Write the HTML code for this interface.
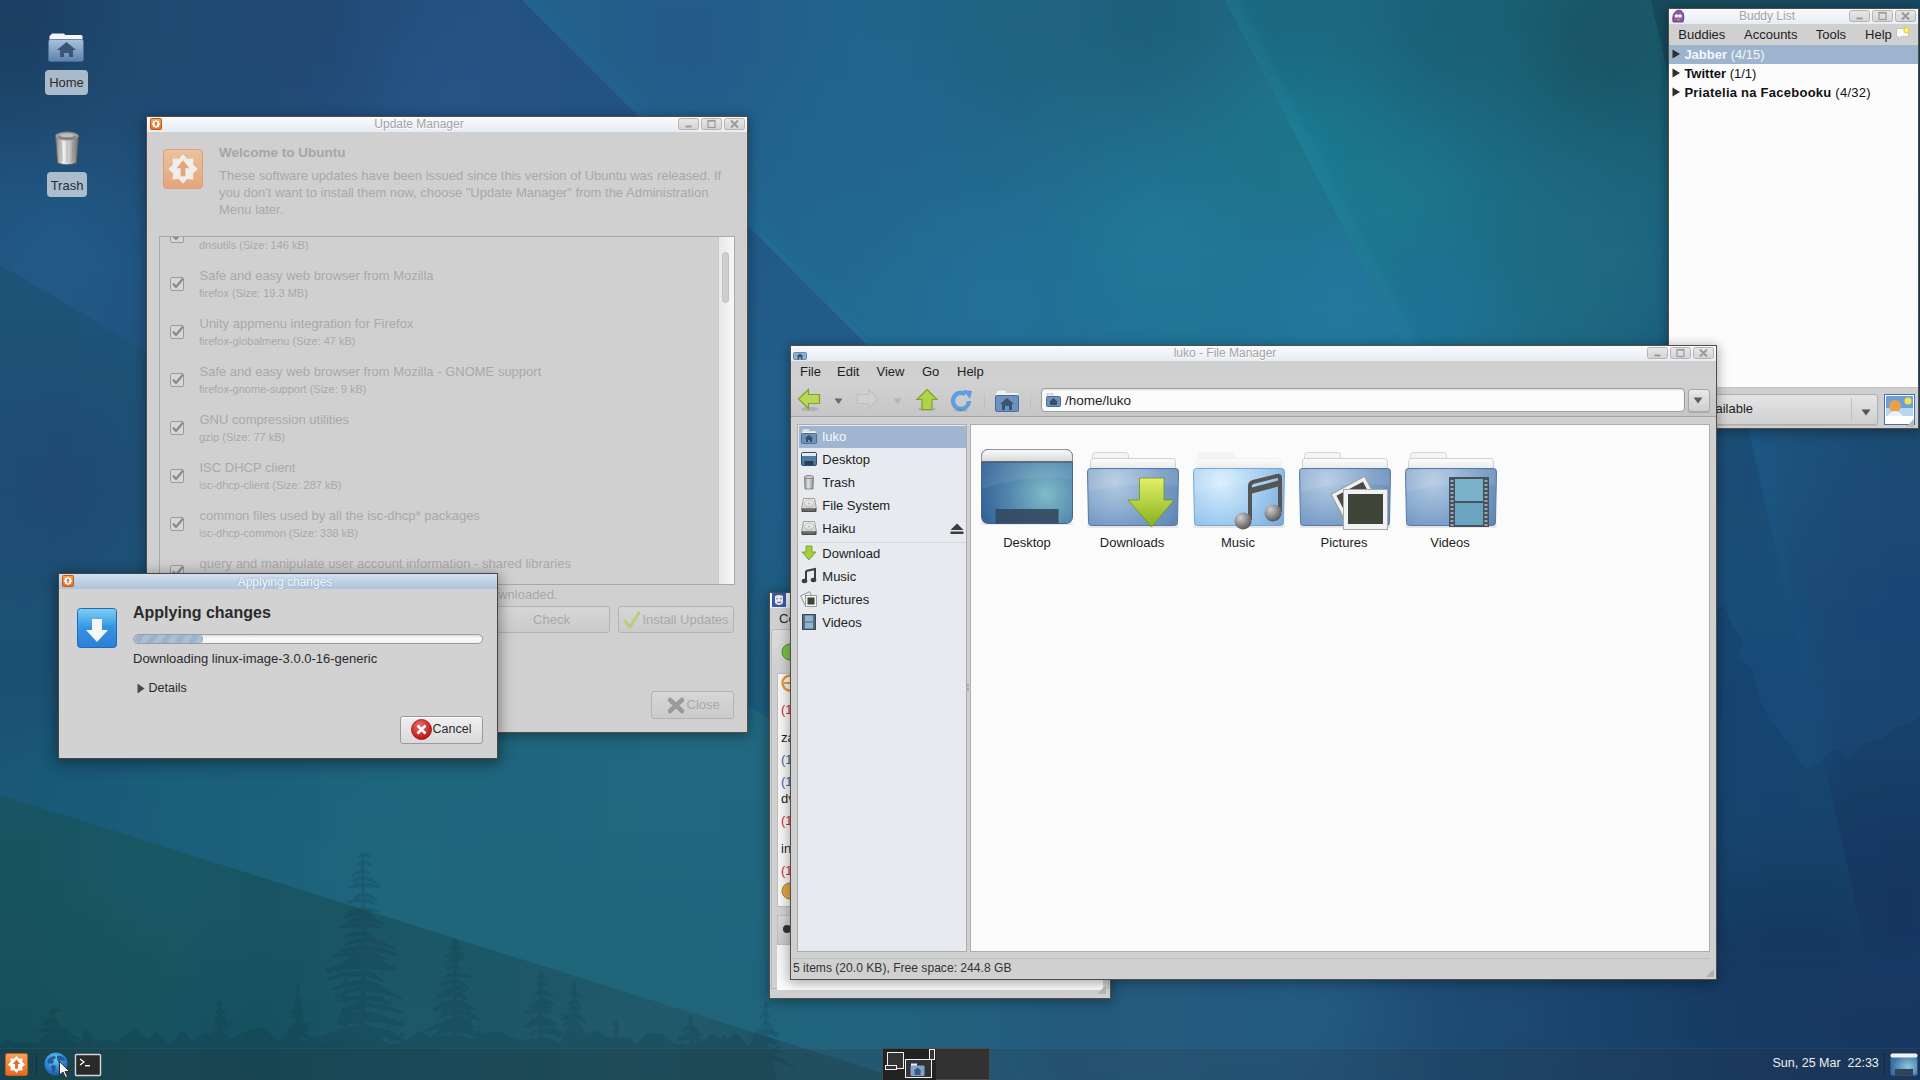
<!DOCTYPE html>
<html><head><meta charset="utf-8"><title>Xubuntu desktop</title>
<style>*{margin:0;padding:0;box-sizing:border-box}
html,body{width:1920px;height:1080px;overflow:hidden;font-family:"Liberation Sans",sans-serif;background:#1f5587}
body{position:relative}
div{position:absolute}
.t{position:absolute;line-height:1;white-space:pre}
.ic{position:absolute;overflow:visible}
</style></head><body>
<svg id="wall" width="1920" height="1080" viewBox="0 0 1920 1080" style="position:absolute;left:0;top:0"><defs><filter id="wb" x="-10%" y="-10%" width="120%" height="120%" color-interpolation-filters="sRGB"><feGaussianBlur stdDeviation="22"/></filter><clipPath id="cb1"><polygon points="-300.0,700.5 2300.0,1519.5 2300.0,1500.0 -300.0,1500.0"/></clipPath><clipPath id="cb2"><polygon points="-300.0,88.0 2300.0,1622.0 2300.0,1500.0 -300.0,1500.0"/></clipPath><clipPath id="cb3"><polygon points="-300.0,-300.0 222.0,-300.0 2300.0,1778.0 2300.0,1800.0 -300.0,1800.0"/></clipPath><clipPath id="cb4"><polygon points="-300.0,-300.0 1068.8,-300.0 2006.2,1500.0 -300.0,1500.0"/></clipPath><clipPath id="cb5"><polygon points="-300.0,-300.0 1583.0,-300.0 1991.1,1500.0 -300.0,1500.0"/></clipPath><clipPath id="cb6"><polygon points="-300.0,-300.0 2300.0,-300.0 2300.0,1500.0 -300.0,1500.0"/></clipPath></defs><g clip-path="url(#cb6)"><g filter="url(#wb)"><rect x="1520" y="-80" width="40" height="40" fill="#174a61"/><rect x="1560" y="-80" width="40" height="40" fill="#174a5f"/><rect x="1600" y="-80" width="40" height="40" fill="#174a5e"/><rect x="1640" y="-80" width="40" height="40" fill="#174a5d"/><rect x="1680" y="-80" width="40" height="40" fill="#174a5d"/><rect x="1720" y="-80" width="40" height="40" fill="#174a5d"/><rect x="1760" y="-80" width="40" height="40" fill="#174a5e"/><rect x="1800" y="-80" width="40" height="40" fill="#174a60"/><rect x="1840" y="-80" width="40" height="40" fill="#174a61"/><rect x="1880" y="-80" width="40" height="40" fill="#184963"/><rect x="1920" y="-80" width="40" height="40" fill="#184964"/><rect x="1960" y="-80" width="40" height="40" fill="#184965"/><rect x="2000" y="-80" width="40" height="40" fill="#184966"/><rect x="1520" y="-40" width="40" height="40" fill="#174a60"/><rect x="1560" y="-40" width="40" height="40" fill="#174a5f"/><rect x="1600" y="-40" width="40" height="40" fill="#174a5d"/><rect x="1640" y="-40" width="40" height="40" fill="#164a5c"/><rect x="1680" y="-40" width="40" height="40" fill="#164a5b"/><rect x="1720" y="-40" width="40" height="40" fill="#164a5c"/><rect x="1760" y="-40" width="40" height="40" fill="#174a5d"/><rect x="1800" y="-40" width="40" height="40" fill="#174a5f"/><rect x="1840" y="-40" width="40" height="40" fill="#174a61"/><rect x="1880" y="-40" width="40" height="40" fill="#184963"/><rect x="1920" y="-40" width="40" height="40" fill="#184964"/><rect x="1960" y="-40" width="40" height="40" fill="#184965"/><rect x="2000" y="-40" width="40" height="40" fill="#184966"/><rect x="1560" y="0" width="40" height="40" fill="#174a5e"/><rect x="1600" y="0" width="40" height="40" fill="#164a5c"/><rect x="1640" y="0" width="40" height="40" fill="#164a5b"/><rect x="1680" y="0" width="40" height="40" fill="#164a5a"/><rect x="1720" y="0" width="40" height="40" fill="#164a5b"/><rect x="1760" y="0" width="40" height="40" fill="#174a5d"/><rect x="1800" y="0" width="40" height="40" fill="#174a5f"/><rect x="1840" y="0" width="40" height="40" fill="#184961"/><rect x="1880" y="0" width="40" height="40" fill="#184963"/><rect x="1920" y="0" width="40" height="40" fill="#184964"/><rect x="1960" y="0" width="40" height="40" fill="#184965"/><rect x="2000" y="0" width="40" height="40" fill="#194966"/><rect x="1560" y="40" width="40" height="40" fill="#174a5f"/><rect x="1600" y="40" width="40" height="40" fill="#174a5d"/><rect x="1640" y="40" width="40" height="40" fill="#164a5b"/><rect x="1680" y="40" width="40" height="40" fill="#164a5a"/><rect x="1720" y="40" width="40" height="40" fill="#164a5b"/><rect x="1760" y="40" width="40" height="40" fill="#174a5d"/><rect x="1800" y="40" width="40" height="40" fill="#174a60"/><rect x="1840" y="40" width="40" height="40" fill="#184962"/><rect x="1880" y="40" width="40" height="40" fill="#184964"/><rect x="1920" y="40" width="40" height="40" fill="#184965"/><rect x="1960" y="40" width="40" height="40" fill="#184966"/><rect x="2000" y="40" width="40" height="40" fill="#194966"/><rect x="1560" y="80" width="40" height="40" fill="#174a60"/><rect x="1600" y="80" width="40" height="40" fill="#174a5e"/><rect x="1640" y="80" width="40" height="40" fill="#174a5d"/><rect x="1680" y="80" width="40" height="40" fill="#164a5c"/><rect x="1720" y="80" width="40" height="40" fill="#174a5d"/><rect x="1760" y="80" width="40" height="40" fill="#174a5f"/><rect x="1800" y="80" width="40" height="40" fill="#184961"/><rect x="1840" y="80" width="40" height="40" fill="#184963"/><rect x="1880" y="80" width="40" height="40" fill="#184964"/><rect x="1920" y="80" width="40" height="40" fill="#184965"/><rect x="1960" y="80" width="40" height="40" fill="#194866"/><rect x="2000" y="80" width="40" height="40" fill="#194867"/><rect x="1560" y="120" width="40" height="40" fill="#184a63"/><rect x="1600" y="120" width="40" height="40" fill="#174a61"/><rect x="1640" y="120" width="40" height="40" fill="#174a60"/><rect x="1680" y="120" width="40" height="40" fill="#174a60"/><rect x="1720" y="120" width="40" height="40" fill="#174a60"/><rect x="1760" y="120" width="40" height="40" fill="#184a62"/><rect x="1800" y="120" width="40" height="40" fill="#184963"/><rect x="1840" y="120" width="40" height="40" fill="#184964"/><rect x="1880" y="120" width="40" height="40" fill="#184865"/><rect x="1920" y="120" width="40" height="40" fill="#194865"/><rect x="1960" y="120" width="40" height="40" fill="#194866"/><rect x="2000" y="120" width="40" height="40" fill="#194866"/><rect x="1600" y="160" width="40" height="40" fill="#184a64"/><rect x="1640" y="160" width="40" height="40" fill="#184a64"/><rect x="1680" y="160" width="40" height="40" fill="#184a64"/><rect x="1720" y="160" width="40" height="40" fill="#184a64"/><rect x="1760" y="160" width="40" height="40" fill="#184a65"/><rect x="1800" y="160" width="40" height="40" fill="#184965"/><rect x="1840" y="160" width="40" height="40" fill="#194865"/><rect x="1880" y="160" width="40" height="40" fill="#194865"/><rect x="1920" y="160" width="40" height="40" fill="#194765"/><rect x="1960" y="160" width="40" height="40" fill="#194765"/><rect x="2000" y="160" width="40" height="40" fill="#194866"/><rect x="1600" y="200" width="40" height="40" fill="#194b68"/><rect x="1640" y="200" width="40" height="40" fill="#194b68"/><rect x="1680" y="200" width="40" height="40" fill="#194b68"/><rect x="1720" y="200" width="40" height="40" fill="#194a68"/><rect x="1760" y="200" width="40" height="40" fill="#194a68"/><rect x="1800" y="200" width="40" height="40" fill="#194966"/><rect x="1840" y="200" width="40" height="40" fill="#194865"/><rect x="1880" y="200" width="40" height="40" fill="#194763"/><rect x="1920" y="200" width="40" height="40" fill="#184763"/><rect x="1960" y="200" width="40" height="40" fill="#194764"/><rect x="2000" y="200" width="40" height="40" fill="#194766"/><rect x="1600" y="240" width="40" height="40" fill="#194b6b"/><rect x="1640" y="240" width="40" height="40" fill="#194b6c"/><rect x="1680" y="240" width="40" height="40" fill="#194b6c"/><rect x="1720" y="240" width="40" height="40" fill="#194b6b"/><rect x="1760" y="240" width="40" height="40" fill="#194a6a"/><rect x="1800" y="240" width="40" height="40" fill="#194968"/><rect x="1840" y="240" width="40" height="40" fill="#194764"/><rect x="1880" y="240" width="40" height="40" fill="#184661"/><rect x="1920" y="240" width="40" height="40" fill="#184661"/><rect x="1960" y="240" width="40" height="40" fill="#184663"/><rect x="2000" y="240" width="40" height="40" fill="#194765"/><rect x="1600" y="280" width="40" height="40" fill="#1a4c6f"/><rect x="1640" y="280" width="40" height="40" fill="#1a4c6f"/><rect x="1680" y="280" width="40" height="40" fill="#1a4c6f"/><rect x="1720" y="280" width="40" height="40" fill="#1a4c6f"/><rect x="1760" y="280" width="40" height="40" fill="#1a4b6d"/><rect x="1800" y="280" width="40" height="40" fill="#19496a"/><rect x="1840" y="280" width="40" height="40" fill="#194764"/><rect x="1880" y="280" width="40" height="40" fill="#184560"/><rect x="1920" y="280" width="40" height="40" fill="#184560"/><rect x="1960" y="280" width="40" height="40" fill="#184663"/><rect x="2000" y="280" width="40" height="40" fill="#194766"/><rect x="1600" y="320" width="40" height="40" fill="#1a4d71"/><rect x="1640" y="320" width="40" height="40" fill="#1b4d72"/><rect x="1680" y="320" width="40" height="40" fill="#1b4d73"/><rect x="1720" y="320" width="40" height="40" fill="#1b4d73"/><rect x="1760" y="320" width="40" height="40" fill="#1b4d72"/><rect x="1800" y="320" width="40" height="40" fill="#1a4b6e"/><rect x="1840" y="320" width="40" height="40" fill="#194868"/><rect x="1880" y="320" width="40" height="40" fill="#194663"/><rect x="1920" y="320" width="40" height="40" fill="#184663"/><rect x="1960" y="320" width="40" height="40" fill="#194765"/><rect x="2000" y="320" width="40" height="40" fill="#194767"/><rect x="1640" y="360" width="40" height="40" fill="#1b4e75"/><rect x="1680" y="360" width="40" height="40" fill="#1b4f77"/><rect x="1720" y="360" width="40" height="40" fill="#1c5078"/><rect x="1760" y="360" width="40" height="40" fill="#1c4f77"/><rect x="1800" y="360" width="40" height="40" fill="#1b4d74"/><rect x="1840" y="360" width="40" height="40" fill="#1a4b6f"/><rect x="1880" y="360" width="40" height="40" fill="#1a496b"/><rect x="1920" y="360" width="40" height="40" fill="#194869"/><rect x="1960" y="360" width="40" height="40" fill="#194869"/><rect x="2000" y="360" width="40" height="40" fill="#19486a"/><rect x="1640" y="400" width="40" height="40" fill="#1b4f77"/><rect x="1680" y="400" width="40" height="40" fill="#1c517a"/><rect x="1720" y="400" width="40" height="40" fill="#1c527c"/><rect x="1760" y="400" width="40" height="40" fill="#1c527c"/><rect x="1800" y="400" width="40" height="40" fill="#1c4f78"/><rect x="1840" y="400" width="40" height="40" fill="#1b4c74"/><rect x="1880" y="400" width="40" height="40" fill="#1b4b71"/><rect x="1920" y="400" width="40" height="40" fill="#1a4a6f"/><rect x="1960" y="400" width="40" height="40" fill="#1a496e"/><rect x="2000" y="400" width="40" height="40" fill="#1a496d"/><rect x="1640" y="440" width="40" height="40" fill="#1c4f78"/><rect x="1680" y="440" width="40" height="40" fill="#1c517b"/><rect x="1720" y="440" width="40" height="40" fill="#1d537e"/><rect x="1760" y="440" width="40" height="40" fill="#1d547f"/><rect x="1800" y="440" width="40" height="40" fill="#1c4f79"/><rect x="1840" y="440" width="40" height="40" fill="#1c4c75"/><rect x="1880" y="440" width="40" height="40" fill="#1b4b74"/><rect x="1920" y="440" width="40" height="40" fill="#1b4a72"/><rect x="1960" y="440" width="40" height="40" fill="#1a4971"/><rect x="2000" y="440" width="40" height="40" fill="#1a4970"/><rect x="1640" y="480" width="40" height="40" fill="#1c4f78"/><rect x="1680" y="480" width="40" height="40" fill="#1c507a"/><rect x="1720" y="480" width="40" height="40" fill="#1c527c"/><rect x="1760" y="480" width="40" height="40" fill="#1c517c"/><rect x="1800" y="480" width="40" height="40" fill="#1c4d77"/><rect x="1840" y="480" width="40" height="40" fill="#1c4b75"/><rect x="1880" y="480" width="40" height="40" fill="#1b4b75"/><rect x="1920" y="480" width="40" height="40" fill="#1b4a74"/><rect x="1960" y="480" width="40" height="40" fill="#1a4973"/><rect x="2000" y="480" width="40" height="40" fill="#1a4971"/><rect x="1680" y="520" width="40" height="40" fill="#1c4f78"/><rect x="1720" y="520" width="40" height="40" fill="#1c4f79"/><rect x="1760" y="520" width="40" height="40" fill="#1c4e78"/><rect x="1800" y="520" width="40" height="40" fill="#1b4c76"/><rect x="1840" y="520" width="40" height="40" fill="#1b4a75"/><rect x="1880" y="520" width="40" height="40" fill="#1a4975"/><rect x="1920" y="520" width="40" height="40" fill="#1a4974"/><rect x="1960" y="520" width="40" height="40" fill="#1a4873"/><rect x="2000" y="520" width="40" height="40" fill="#1a4872"/><rect x="1680" y="560" width="40" height="40" fill="#1b4d77"/><rect x="1720" y="560" width="40" height="40" fill="#1b4d77"/><rect x="1760" y="560" width="40" height="40" fill="#1b4c76"/><rect x="1800" y="560" width="40" height="40" fill="#1b4a76"/><rect x="1840" y="560" width="40" height="40" fill="#1a4875"/><rect x="1880" y="560" width="40" height="40" fill="#194775"/><rect x="1920" y="560" width="40" height="40" fill="#194775"/><rect x="1960" y="560" width="40" height="40" fill="#1a4874"/><rect x="2000" y="560" width="40" height="40" fill="#1a4873"/><rect x="1680" y="600" width="40" height="40" fill="#1b4b75"/><rect x="1720" y="600" width="40" height="40" fill="#1b4b75"/><rect x="1760" y="600" width="40" height="40" fill="#1a4a75"/><rect x="1800" y="600" width="40" height="40" fill="#1a4975"/><rect x="1840" y="600" width="40" height="40" fill="#194775"/><rect x="1880" y="600" width="40" height="40" fill="#194675"/><rect x="1920" y="600" width="40" height="40" fill="#194774"/><rect x="1960" y="600" width="40" height="40" fill="#1a4774"/><rect x="2000" y="600" width="40" height="40" fill="#1a4773"/><rect x="1680" y="640" width="40" height="40" fill="#1a4a74"/><rect x="1720" y="640" width="40" height="40" fill="#1a4974"/><rect x="1760" y="640" width="40" height="40" fill="#1a4974"/><rect x="1800" y="640" width="40" height="40" fill="#1a4874"/><rect x="1840" y="640" width="40" height="40" fill="#1a4774"/><rect x="1880" y="640" width="40" height="40" fill="#194774"/><rect x="1920" y="640" width="40" height="40" fill="#194774"/><rect x="1960" y="640" width="40" height="40" fill="#194773"/><rect x="2000" y="640" width="40" height="40" fill="#1a4772"/><rect x="1680" y="680" width="40" height="40" fill="#1a4873"/><rect x="1720" y="680" width="40" height="40" fill="#1a4873"/><rect x="1760" y="680" width="40" height="40" fill="#1a4873"/><rect x="1800" y="680" width="40" height="40" fill="#1a4773"/><rect x="1840" y="680" width="40" height="40" fill="#194773"/><rect x="1880" y="680" width="40" height="40" fill="#194673"/><rect x="1920" y="680" width="40" height="40" fill="#194672"/><rect x="1960" y="680" width="40" height="40" fill="#194672"/><rect x="2000" y="680" width="40" height="40" fill="#194671"/><rect x="1720" y="720" width="40" height="40" fill="#1a4771"/><rect x="1760" y="720" width="40" height="40" fill="#194671"/><rect x="1800" y="720" width="40" height="40" fill="#194571"/><rect x="1840" y="720" width="40" height="40" fill="#194570"/><rect x="1880" y="720" width="40" height="40" fill="#194570"/><rect x="1920" y="720" width="40" height="40" fill="#194470"/><rect x="1960" y="720" width="40" height="40" fill="#194470"/><rect x="2000" y="720" width="40" height="40" fill="#194570"/><rect x="1720" y="760" width="40" height="40" fill="#19456f"/><rect x="1760" y="760" width="40" height="40" fill="#19446f"/><rect x="1800" y="760" width="40" height="40" fill="#19436e"/><rect x="1840" y="760" width="40" height="40" fill="#19426d"/><rect x="1880" y="760" width="40" height="40" fill="#19426d"/><rect x="1920" y="760" width="40" height="40" fill="#19426d"/><rect x="1960" y="760" width="40" height="40" fill="#19426d"/><rect x="2000" y="760" width="40" height="40" fill="#19436e"/><rect x="1720" y="800" width="40" height="40" fill="#19436e"/><rect x="1760" y="800" width="40" height="40" fill="#19426c"/><rect x="1800" y="800" width="40" height="40" fill="#18406b"/><rect x="1840" y="800" width="40" height="40" fill="#183f6a"/><rect x="1880" y="800" width="40" height="40" fill="#183e6a"/><rect x="1920" y="800" width="40" height="40" fill="#183e6a"/><rect x="1960" y="800" width="40" height="40" fill="#18406b"/><rect x="2000" y="800" width="40" height="40" fill="#18416c"/><rect x="1720" y="840" width="40" height="40" fill="#18416c"/><rect x="1760" y="840" width="40" height="40" fill="#18406b"/><rect x="1800" y="840" width="40" height="40" fill="#183e69"/><rect x="1840" y="840" width="40" height="40" fill="#173c68"/><rect x="1880" y="840" width="40" height="40" fill="#173b67"/><rect x="1920" y="840" width="40" height="40" fill="#173c68"/><rect x="1960" y="840" width="40" height="40" fill="#183d69"/><rect x="2000" y="840" width="40" height="40" fill="#183f6a"/><rect x="1760" y="880" width="40" height="40" fill="#183e6a"/><rect x="1800" y="880" width="40" height="40" fill="#173c68"/><rect x="1840" y="880" width="40" height="40" fill="#173b67"/><rect x="1880" y="880" width="40" height="40" fill="#173a66"/><rect x="1920" y="880" width="40" height="40" fill="#173b67"/><rect x="1960" y="880" width="40" height="40" fill="#173c68"/><rect x="2000" y="880" width="40" height="40" fill="#183e69"/><rect x="1760" y="920" width="40" height="40" fill="#183e69"/><rect x="1800" y="920" width="40" height="40" fill="#173c68"/><rect x="1840" y="920" width="40" height="40" fill="#173b67"/><rect x="1880" y="920" width="40" height="40" fill="#173a66"/><rect x="1920" y="920" width="40" height="40" fill="#173b67"/><rect x="1960" y="920" width="40" height="40" fill="#173c68"/><rect x="2000" y="920" width="40" height="40" fill="#183e69"/><rect x="1760" y="960" width="40" height="40" fill="#183e69"/><rect x="1800" y="960" width="40" height="40" fill="#183d68"/><rect x="1840" y="960" width="40" height="40" fill="#173c67"/><rect x="1880" y="960" width="40" height="40" fill="#173b67"/><rect x="1920" y="960" width="40" height="40" fill="#173c67"/><rect x="1960" y="960" width="40" height="40" fill="#183d68"/><rect x="2000" y="960" width="40" height="40" fill="#183e69"/><rect x="1760" y="1000" width="40" height="40" fill="#183f6a"/><rect x="1800" y="1000" width="40" height="40" fill="#183e69"/><rect x="1840" y="1000" width="40" height="40" fill="#183d68"/><rect x="1880" y="1000" width="40" height="40" fill="#183d68"/><rect x="1920" y="1000" width="40" height="40" fill="#183d68"/><rect x="1960" y="1000" width="40" height="40" fill="#183d69"/><rect x="2000" y="1000" width="40" height="40" fill="#183e69"/><rect x="1800" y="1040" width="40" height="40" fill="#183f69"/><rect x="1840" y="1040" width="40" height="40" fill="#183e69"/><rect x="1880" y="1040" width="40" height="40" fill="#183e69"/><rect x="1920" y="1040" width="40" height="40" fill="#183e69"/><rect x="1960" y="1040" width="40" height="40" fill="#183e69"/><rect x="2000" y="1040" width="40" height="40" fill="#183f6a"/><rect x="1800" y="1080" width="40" height="40" fill="#183f6a"/><rect x="1840" y="1080" width="40" height="40" fill="#183f6a"/><rect x="1880" y="1080" width="40" height="40" fill="#183f6a"/><rect x="1920" y="1080" width="40" height="40" fill="#183f6a"/><rect x="1960" y="1080" width="40" height="40" fill="#183f6a"/><rect x="2000" y="1080" width="40" height="40" fill="#18406a"/><rect x="1800" y="1120" width="40" height="40" fill="#18406b"/><rect x="1840" y="1120" width="40" height="40" fill="#18406a"/><rect x="1880" y="1120" width="40" height="40" fill="#18406a"/><rect x="1920" y="1120" width="40" height="40" fill="#18406a"/><rect x="1960" y="1120" width="40" height="40" fill="#18406a"/><rect x="2000" y="1120" width="40" height="40" fill="#18406b"/><rect x="1800" y="1160" width="40" height="40" fill="#18416b"/><rect x="1840" y="1160" width="40" height="40" fill="#18416b"/><rect x="1880" y="1160" width="40" height="40" fill="#18416b"/><rect x="1920" y="1160" width="40" height="40" fill="#18416b"/><rect x="1960" y="1160" width="40" height="40" fill="#18416b"/><rect x="2000" y="1160" width="40" height="40" fill="#18416b"/></g></g><g clip-path="url(#cb5)"><g filter="url(#wb)"><rect x="1040" y="-80" width="40" height="40" fill="#1b6982"/><rect x="1080" y="-80" width="40" height="40" fill="#1b6982"/><rect x="1120" y="-80" width="40" height="40" fill="#1b6982"/><rect x="1160" y="-80" width="40" height="40" fill="#1b6982"/><rect x="1200" y="-80" width="40" height="40" fill="#1b6981"/><rect x="1240" y="-80" width="40" height="40" fill="#1b6881"/><rect x="1280" y="-80" width="40" height="40" fill="#1b6880"/><rect x="1320" y="-80" width="40" height="40" fill="#1b677f"/><rect x="1360" y="-80" width="40" height="40" fill="#1b667d"/><rect x="1400" y="-80" width="40" height="40" fill="#1a647b"/><rect x="1440" y="-80" width="40" height="40" fill="#1a6279"/><rect x="1480" y="-80" width="40" height="40" fill="#1a6176"/><rect x="1520" y="-80" width="40" height="40" fill="#1a5e73"/><rect x="1560" y="-80" width="40" height="40" fill="#1a5c70"/><rect x="1600" y="-80" width="40" height="40" fill="#195b6f"/><rect x="1640" y="-80" width="40" height="40" fill="#1a5c6f"/><rect x="1680" y="-80" width="40" height="40" fill="#1a5d71"/><rect x="1720" y="-80" width="40" height="40" fill="#1a5e73"/><rect x="1080" y="-40" width="40" height="40" fill="#1b6a83"/><rect x="1120" y="-40" width="40" height="40" fill="#1b6a83"/><rect x="1160" y="-40" width="40" height="40" fill="#1b6982"/><rect x="1200" y="-40" width="40" height="40" fill="#1b6981"/><rect x="1240" y="-40" width="40" height="40" fill="#1b6881"/><rect x="1280" y="-40" width="40" height="40" fill="#1b6880"/><rect x="1320" y="-40" width="40" height="40" fill="#1b6880"/><rect x="1360" y="-40" width="40" height="40" fill="#1b667d"/><rect x="1400" y="-40" width="40" height="40" fill="#1a637a"/><rect x="1440" y="-40" width="40" height="40" fill="#1a6178"/><rect x="1480" y="-40" width="40" height="40" fill="#1a6075"/><rect x="1520" y="-40" width="40" height="40" fill="#1a5d70"/><rect x="1560" y="-40" width="40" height="40" fill="#19596b"/><rect x="1600" y="-40" width="40" height="40" fill="#195869"/><rect x="1640" y="-40" width="40" height="40" fill="#19596c"/><rect x="1680" y="-40" width="40" height="40" fill="#1a5b6f"/><rect x="1720" y="-40" width="40" height="40" fill="#1a5d72"/><rect x="1080" y="0" width="40" height="40" fill="#1b6b84"/><rect x="1120" y="0" width="40" height="40" fill="#1b6b83"/><rect x="1160" y="0" width="40" height="40" fill="#1b6a83"/><rect x="1200" y="0" width="40" height="40" fill="#1b6982"/><rect x="1240" y="0" width="40" height="40" fill="#1b6881"/><rect x="1280" y="0" width="40" height="40" fill="#1b6881"/><rect x="1320" y="0" width="40" height="40" fill="#1b6981"/><rect x="1360" y="0" width="40" height="40" fill="#1b667d"/><rect x="1400" y="0" width="40" height="40" fill="#1a6278"/><rect x="1440" y="0" width="40" height="40" fill="#1a6076"/><rect x="1480" y="0" width="40" height="40" fill="#1a6075"/><rect x="1520" y="0" width="40" height="40" fill="#195b6e"/><rect x="1560" y="0" width="40" height="40" fill="#185565"/><rect x="1600" y="0" width="40" height="40" fill="#185464"/><rect x="1640" y="0" width="40" height="40" fill="#195769"/><rect x="1680" y="0" width="40" height="40" fill="#1a5b6e"/><rect x="1720" y="0" width="40" height="40" fill="#1a5d72"/><rect x="1120" y="40" width="40" height="40" fill="#1b6c84"/><rect x="1160" y="40" width="40" height="40" fill="#1b6c84"/><rect x="1200" y="40" width="40" height="40" fill="#1b6b84"/><rect x="1240" y="40" width="40" height="40" fill="#1b6a83"/><rect x="1280" y="40" width="40" height="40" fill="#1b6b83"/><rect x="1320" y="40" width="40" height="40" fill="#1b6b83"/><rect x="1360" y="40" width="40" height="40" fill="#1b6880"/><rect x="1400" y="40" width="40" height="40" fill="#1a6379"/><rect x="1440" y="40" width="40" height="40" fill="#1a6177"/><rect x="1480" y="40" width="40" height="40" fill="#1a6176"/><rect x="1520" y="40" width="40" height="40" fill="#1a5c6f"/><rect x="1560" y="40" width="40" height="40" fill="#195566"/><rect x="1600" y="40" width="40" height="40" fill="#185565"/><rect x="1640" y="40" width="40" height="40" fill="#19586a"/><rect x="1680" y="40" width="40" height="40" fill="#1a5b6f"/><rect x="1720" y="40" width="40" height="40" fill="#1a5d73"/><rect x="1160" y="80" width="40" height="40" fill="#1b6e86"/><rect x="1200" y="80" width="40" height="40" fill="#1b6f87"/><rect x="1240" y="80" width="40" height="40" fill="#1b7189"/><rect x="1280" y="80" width="40" height="40" fill="#1b738b"/><rect x="1320" y="80" width="40" height="40" fill="#1b7289"/><rect x="1360" y="80" width="40" height="40" fill="#1b6e85"/><rect x="1400" y="80" width="40" height="40" fill="#1b6980"/><rect x="1440" y="80" width="40" height="40" fill="#1b667c"/><rect x="1480" y="80" width="40" height="40" fill="#1b647a"/><rect x="1520" y="80" width="40" height="40" fill="#1a6075"/><rect x="1560" y="80" width="40" height="40" fill="#1a5b6f"/><rect x="1600" y="80" width="40" height="40" fill="#195a6d"/><rect x="1640" y="80" width="40" height="40" fill="#1a5b6f"/><rect x="1680" y="80" width="40" height="40" fill="#1a5d72"/><rect x="1720" y="80" width="40" height="40" fill="#1a5e75"/><rect x="1760" y="80" width="40" height="40" fill="#1b5f77"/><rect x="1160" y="120" width="40" height="40" fill="#1b6f88"/><rect x="1200" y="120" width="40" height="40" fill="#1b728a"/><rect x="1240" y="120" width="40" height="40" fill="#1b758d"/><rect x="1280" y="120" width="40" height="40" fill="#1a7990"/><rect x="1320" y="120" width="40" height="40" fill="#1a778e"/><rect x="1360" y="120" width="40" height="40" fill="#1b738b"/><rect x="1400" y="120" width="40" height="40" fill="#1b7088"/><rect x="1440" y="120" width="40" height="40" fill="#1b6c84"/><rect x="1480" y="120" width="40" height="40" fill="#1b6880"/><rect x="1520" y="120" width="40" height="40" fill="#1b657c"/><rect x="1560" y="120" width="40" height="40" fill="#1b6278"/><rect x="1600" y="120" width="40" height="40" fill="#1b6076"/><rect x="1640" y="120" width="40" height="40" fill="#1b5f75"/><rect x="1680" y="120" width="40" height="40" fill="#1b5f76"/><rect x="1720" y="120" width="40" height="40" fill="#1b5f77"/><rect x="1760" y="120" width="40" height="40" fill="#1b5f78"/><rect x="1200" y="160" width="40" height="40" fill="#1b728b"/><rect x="1240" y="160" width="40" height="40" fill="#1b758d"/><rect x="1280" y="160" width="40" height="40" fill="#1a7890"/><rect x="1320" y="160" width="40" height="40" fill="#1b778e"/><rect x="1360" y="160" width="40" height="40" fill="#1c778e"/><rect x="1400" y="160" width="40" height="40" fill="#1c768d"/><rect x="1440" y="160" width="40" height="40" fill="#1c7189"/><rect x="1480" y="160" width="40" height="40" fill="#1c6c84"/><rect x="1520" y="160" width="40" height="40" fill="#1d6980"/><rect x="1560" y="160" width="40" height="40" fill="#1d677e"/><rect x="1600" y="160" width="40" height="40" fill="#1c647c"/><rect x="1640" y="160" width="40" height="40" fill="#1c637a"/><rect x="1680" y="160" width="40" height="40" fill="#1b617a"/><rect x="1720" y="160" width="40" height="40" fill="#1b607a"/><rect x="1760" y="160" width="40" height="40" fill="#1b607a"/><rect x="1200" y="200" width="40" height="40" fill="#1b728a"/><rect x="1240" y="200" width="40" height="40" fill="#1b748c"/><rect x="1280" y="200" width="40" height="40" fill="#1b758d"/><rect x="1320" y="200" width="40" height="40" fill="#1c758e"/><rect x="1360" y="200" width="40" height="40" fill="#1c778f"/><rect x="1400" y="200" width="40" height="40" fill="#1c778e"/><rect x="1440" y="200" width="40" height="40" fill="#1d718b"/><rect x="1480" y="200" width="40" height="40" fill="#1d6d85"/><rect x="1520" y="200" width="40" height="40" fill="#1e6a82"/><rect x="1560" y="200" width="40" height="40" fill="#1e6980"/><rect x="1600" y="200" width="40" height="40" fill="#1d677f"/><rect x="1640" y="200" width="40" height="40" fill="#1c647d"/><rect x="1680" y="200" width="40" height="40" fill="#1c627c"/><rect x="1720" y="200" width="40" height="40" fill="#1c617b"/><rect x="1760" y="200" width="40" height="40" fill="#1b5f7b"/><rect x="1240" y="240" width="40" height="40" fill="#1b728b"/><rect x="1280" y="240" width="40" height="40" fill="#1c738c"/><rect x="1320" y="240" width="40" height="40" fill="#1c738d"/><rect x="1360" y="240" width="40" height="40" fill="#1d748f"/><rect x="1400" y="240" width="40" height="40" fill="#1d7390"/><rect x="1440" y="240" width="40" height="40" fill="#1e718e"/><rect x="1480" y="240" width="40" height="40" fill="#1e6d87"/><rect x="1520" y="240" width="40" height="40" fill="#1f6a81"/><rect x="1560" y="240" width="40" height="40" fill="#1e6a81"/><rect x="1600" y="240" width="40" height="40" fill="#1e6880"/><rect x="1640" y="240" width="40" height="40" fill="#1d657f"/><rect x="1680" y="240" width="40" height="40" fill="#1c627d"/><rect x="1720" y="240" width="40" height="40" fill="#1c607c"/><rect x="1760" y="240" width="40" height="40" fill="#1b5e7b"/><rect x="1800" y="240" width="40" height="40" fill="#1b5d7b"/><rect x="1240" y="280" width="40" height="40" fill="#1c708b"/><rect x="1280" y="280" width="40" height="40" fill="#1c718c"/><rect x="1320" y="280" width="40" height="40" fill="#1d718e"/><rect x="1360" y="280" width="40" height="40" fill="#1d7290"/><rect x="1400" y="280" width="40" height="40" fill="#1e7295"/><rect x="1440" y="280" width="40" height="40" fill="#1f7294"/><rect x="1480" y="280" width="40" height="40" fill="#1e6e8b"/><rect x="1520" y="280" width="40" height="40" fill="#1e6b83"/><rect x="1560" y="280" width="40" height="40" fill="#1e6982"/><rect x="1600" y="280" width="40" height="40" fill="#1d6781"/><rect x="1640" y="280" width="40" height="40" fill="#1d637f"/><rect x="1680" y="280" width="40" height="40" fill="#1c607d"/><rect x="1720" y="280" width="40" height="40" fill="#1c5d7c"/><rect x="1760" y="280" width="40" height="40" fill="#1b5b7b"/><rect x="1800" y="280" width="40" height="40" fill="#1b5a7a"/><rect x="1280" y="320" width="40" height="40" fill="#1c6f8b"/><rect x="1320" y="320" width="40" height="40" fill="#1d708d"/><rect x="1360" y="320" width="40" height="40" fill="#1e7190"/><rect x="1400" y="320" width="40" height="40" fill="#1e7294"/><rect x="1440" y="320" width="40" height="40" fill="#1e7193"/><rect x="1480" y="320" width="40" height="40" fill="#1e6e8c"/><rect x="1520" y="320" width="40" height="40" fill="#1e6a86"/><rect x="1560" y="320" width="40" height="40" fill="#1d6883"/><rect x="1600" y="320" width="40" height="40" fill="#1d6581"/><rect x="1640" y="320" width="40" height="40" fill="#1c607e"/><rect x="1680" y="320" width="40" height="40" fill="#1c5c7c"/><rect x="1720" y="320" width="40" height="40" fill="#1c597b"/><rect x="1760" y="320" width="40" height="40" fill="#1b587a"/><rect x="1800" y="320" width="40" height="40" fill="#1b577a"/><rect x="1280" y="360" width="40" height="40" fill="#1c6e8a"/><rect x="1320" y="360" width="40" height="40" fill="#1d6e8c"/><rect x="1360" y="360" width="40" height="40" fill="#1d6f8e"/><rect x="1400" y="360" width="40" height="40" fill="#1e6f8f"/><rect x="1440" y="360" width="40" height="40" fill="#1e6e8e"/><rect x="1480" y="360" width="40" height="40" fill="#1e6c8b"/><rect x="1520" y="360" width="40" height="40" fill="#1d6986"/><rect x="1560" y="360" width="40" height="40" fill="#1d6583"/><rect x="1600" y="360" width="40" height="40" fill="#1c6180"/><rect x="1640" y="360" width="40" height="40" fill="#1c5c7d"/><rect x="1680" y="360" width="40" height="40" fill="#1c567a"/><rect x="1720" y="360" width="40" height="40" fill="#1b5478"/><rect x="1760" y="360" width="40" height="40" fill="#1b5378"/><rect x="1800" y="360" width="40" height="40" fill="#1b5478"/><rect x="1320" y="400" width="40" height="40" fill="#1d6d8a"/><rect x="1360" y="400" width="40" height="40" fill="#1d6d8b"/><rect x="1400" y="400" width="40" height="40" fill="#1d6c8b"/><rect x="1440" y="400" width="40" height="40" fill="#1d6b8a"/><rect x="1480" y="400" width="40" height="40" fill="#1d6988"/><rect x="1520" y="400" width="40" height="40" fill="#1d6685"/><rect x="1560" y="400" width="40" height="40" fill="#1c6281"/><rect x="1600" y="400" width="40" height="40" fill="#1c5d7e"/><rect x="1640" y="400" width="40" height="40" fill="#1c567a"/><rect x="1680" y="400" width="40" height="40" fill="#1b5077"/><rect x="1720" y="400" width="40" height="40" fill="#1b4e76"/><rect x="1760" y="400" width="40" height="40" fill="#1b4f76"/><rect x="1800" y="400" width="40" height="40" fill="#1b5177"/><rect x="1320" y="440" width="40" height="40" fill="#1c6b88"/><rect x="1360" y="440" width="40" height="40" fill="#1d6a89"/><rect x="1400" y="440" width="40" height="40" fill="#1d6a88"/><rect x="1440" y="440" width="40" height="40" fill="#1d6887"/><rect x="1480" y="440" width="40" height="40" fill="#1d6685"/><rect x="1520" y="440" width="40" height="40" fill="#1c6383"/><rect x="1560" y="440" width="40" height="40" fill="#1c5f80"/><rect x="1600" y="440" width="40" height="40" fill="#1c597c"/><rect x="1640" y="440" width="40" height="40" fill="#1b5379"/><rect x="1680" y="440" width="40" height="40" fill="#1b4d75"/><rect x="1720" y="440" width="40" height="40" fill="#1b4b74"/><rect x="1760" y="440" width="40" height="40" fill="#1b4c75"/><rect x="1800" y="440" width="40" height="40" fill="#1b4f76"/><rect x="1840" y="440" width="40" height="40" fill="#1b5177"/><rect x="1360" y="480" width="40" height="40" fill="#1c6886"/><rect x="1400" y="480" width="40" height="40" fill="#1c6786"/><rect x="1440" y="480" width="40" height="40" fill="#1c6585"/><rect x="1480" y="480" width="40" height="40" fill="#1c6383"/><rect x="1520" y="480" width="40" height="40" fill="#1c6081"/><rect x="1560" y="480" width="40" height="40" fill="#1c5c7e"/><rect x="1600" y="480" width="40" height="40" fill="#1b577b"/><rect x="1640" y="480" width="40" height="40" fill="#1b5278"/><rect x="1680" y="480" width="40" height="40" fill="#1b4d76"/><rect x="1720" y="480" width="40" height="40" fill="#1b4b75"/><rect x="1760" y="480" width="40" height="40" fill="#1b4c75"/><rect x="1800" y="480" width="40" height="40" fill="#1b4e76"/><rect x="1840" y="480" width="40" height="40" fill="#1b5077"/><rect x="1360" y="520" width="40" height="40" fill="#1c6684"/><rect x="1400" y="520" width="40" height="40" fill="#1c6484"/><rect x="1440" y="520" width="40" height="40" fill="#1c6383"/><rect x="1480" y="520" width="40" height="40" fill="#1c6081"/><rect x="1520" y="520" width="40" height="40" fill="#1b5d7f"/><rect x="1560" y="520" width="40" height="40" fill="#1b5a7d"/><rect x="1600" y="520" width="40" height="40" fill="#1b567b"/><rect x="1640" y="520" width="40" height="40" fill="#1b5279"/><rect x="1680" y="520" width="40" height="40" fill="#1b4f77"/><rect x="1720" y="520" width="40" height="40" fill="#1b4d76"/><rect x="1760" y="520" width="40" height="40" fill="#1b4e76"/><rect x="1800" y="520" width="40" height="40" fill="#1a4f77"/><rect x="1840" y="520" width="40" height="40" fill="#1a5077"/><rect x="1400" y="560" width="40" height="40" fill="#1c6282"/><rect x="1440" y="560" width="40" height="40" fill="#1b6081"/><rect x="1480" y="560" width="40" height="40" fill="#1b5e7f"/><rect x="1520" y="560" width="40" height="40" fill="#1b5b7e"/><rect x="1560" y="560" width="40" height="40" fill="#1b587c"/><rect x="1600" y="560" width="40" height="40" fill="#1b547a"/><rect x="1640" y="560" width="40" height="40" fill="#1a5179"/><rect x="1680" y="560" width="40" height="40" fill="#1a4f78"/><rect x="1720" y="560" width="40" height="40" fill="#1a4e77"/><rect x="1760" y="560" width="40" height="40" fill="#1a4e77"/><rect x="1800" y="560" width="40" height="40" fill="#1a4e77"/><rect x="1840" y="560" width="40" height="40" fill="#1a4f77"/><rect x="1400" y="600" width="40" height="40" fill="#1b6080"/><rect x="1440" y="600" width="40" height="40" fill="#1b5e7f"/><rect x="1480" y="600" width="40" height="40" fill="#1b5b7e"/><rect x="1520" y="600" width="40" height="40" fill="#1b597d"/><rect x="1560" y="600" width="40" height="40" fill="#1a567b"/><rect x="1600" y="600" width="40" height="40" fill="#1a527a"/><rect x="1640" y="600" width="40" height="40" fill="#1a4f78"/><rect x="1680" y="600" width="40" height="40" fill="#194d78"/><rect x="1720" y="600" width="40" height="40" fill="#194c77"/><rect x="1760" y="600" width="40" height="40" fill="#194c77"/><rect x="1800" y="600" width="40" height="40" fill="#194d77"/><rect x="1840" y="600" width="40" height="40" fill="#194e77"/><rect x="1880" y="600" width="40" height="40" fill="#1a4f77"/><rect x="1440" y="640" width="40" height="40" fill="#1b5c7e"/><rect x="1480" y="640" width="40" height="40" fill="#1b597d"/><rect x="1520" y="640" width="40" height="40" fill="#1a577b"/><rect x="1560" y="640" width="40" height="40" fill="#1a547a"/><rect x="1600" y="640" width="40" height="40" fill="#1a5079"/><rect x="1640" y="640" width="40" height="40" fill="#194d78"/><rect x="1680" y="640" width="40" height="40" fill="#194b77"/><rect x="1720" y="640" width="40" height="40" fill="#184977"/><rect x="1760" y="640" width="40" height="40" fill="#184a77"/><rect x="1800" y="640" width="40" height="40" fill="#194b77"/><rect x="1840" y="640" width="40" height="40" fill="#194c77"/><rect x="1880" y="640" width="40" height="40" fill="#194e77"/><rect x="1440" y="680" width="40" height="40" fill="#1b5a7d"/><rect x="1480" y="680" width="40" height="40" fill="#1a587c"/><rect x="1520" y="680" width="40" height="40" fill="#1a557a"/><rect x="1560" y="680" width="40" height="40" fill="#1a5279"/><rect x="1600" y="680" width="40" height="40" fill="#194f78"/><rect x="1640" y="680" width="40" height="40" fill="#194c77"/><rect x="1680" y="680" width="40" height="40" fill="#184a77"/><rect x="1720" y="680" width="40" height="40" fill="#184877"/><rect x="1760" y="680" width="40" height="40" fill="#184977"/><rect x="1800" y="680" width="40" height="40" fill="#184a77"/><rect x="1840" y="680" width="40" height="40" fill="#194b77"/><rect x="1880" y="680" width="40" height="40" fill="#194d76"/><rect x="1480" y="720" width="40" height="40" fill="#1a567b"/><rect x="1520" y="720" width="40" height="40" fill="#1a5379"/><rect x="1560" y="720" width="40" height="40" fill="#195178"/><rect x="1600" y="720" width="40" height="40" fill="#194e78"/><rect x="1640" y="720" width="40" height="40" fill="#194c77"/><rect x="1680" y="720" width="40" height="40" fill="#184a77"/><rect x="1720" y="720" width="40" height="40" fill="#184977"/><rect x="1760" y="720" width="40" height="40" fill="#184977"/><rect x="1800" y="720" width="40" height="40" fill="#184a76"/><rect x="1840" y="720" width="40" height="40" fill="#194b76"/><rect x="1880" y="720" width="40" height="40" fill="#194c75"/><rect x="1480" y="760" width="40" height="40" fill="#1a5479"/><rect x="1520" y="760" width="40" height="40" fill="#1a5278"/><rect x="1560" y="760" width="40" height="40" fill="#195077"/><rect x="1600" y="760" width="40" height="40" fill="#194e77"/><rect x="1640" y="760" width="40" height="40" fill="#194c76"/><rect x="1680" y="760" width="40" height="40" fill="#184a76"/><rect x="1720" y="760" width="40" height="40" fill="#184976"/><rect x="1760" y="760" width="40" height="40" fill="#184976"/><rect x="1800" y="760" width="40" height="40" fill="#184a75"/><rect x="1840" y="760" width="40" height="40" fill="#184a75"/><rect x="1880" y="760" width="40" height="40" fill="#194b74"/><rect x="1520" y="800" width="40" height="40" fill="#195177"/><rect x="1560" y="800" width="40" height="40" fill="#194f76"/><rect x="1600" y="800" width="40" height="40" fill="#194d75"/><rect x="1640" y="800" width="40" height="40" fill="#194b75"/><rect x="1680" y="800" width="40" height="40" fill="#184a74"/><rect x="1720" y="800" width="40" height="40" fill="#184974"/><rect x="1760" y="800" width="40" height="40" fill="#184873"/><rect x="1800" y="800" width="40" height="40" fill="#184873"/><rect x="1840" y="800" width="40" height="40" fill="#184872"/><rect x="1880" y="800" width="40" height="40" fill="#184972"/><rect x="1920" y="800" width="40" height="40" fill="#194a72"/><rect x="1520" y="840" width="40" height="40" fill="#195076"/><rect x="1560" y="840" width="40" height="40" fill="#194d75"/><rect x="1600" y="840" width="40" height="40" fill="#194b73"/><rect x="1640" y="840" width="40" height="40" fill="#184972"/><rect x="1680" y="840" width="40" height="40" fill="#184771"/><rect x="1720" y="840" width="40" height="40" fill="#184670"/><rect x="1760" y="840" width="40" height="40" fill="#18456f"/><rect x="1800" y="840" width="40" height="40" fill="#18456f"/><rect x="1840" y="840" width="40" height="40" fill="#18466f"/><rect x="1880" y="840" width="40" height="40" fill="#18476f"/><rect x="1920" y="840" width="40" height="40" fill="#184870"/><rect x="1560" y="880" width="40" height="40" fill="#194c73"/><rect x="1600" y="880" width="40" height="40" fill="#184971"/><rect x="1640" y="880" width="40" height="40" fill="#18476f"/><rect x="1680" y="880" width="40" height="40" fill="#18446d"/><rect x="1720" y="880" width="40" height="40" fill="#17426b"/><rect x="1760" y="880" width="40" height="40" fill="#17416a"/><rect x="1800" y="880" width="40" height="40" fill="#17416a"/><rect x="1840" y="880" width="40" height="40" fill="#17426b"/><rect x="1880" y="880" width="40" height="40" fill="#18446c"/><rect x="1920" y="880" width="40" height="40" fill="#18456e"/><rect x="1560" y="920" width="40" height="40" fill="#184a71"/><rect x="1600" y="920" width="40" height="40" fill="#18476f"/><rect x="1640" y="920" width="40" height="40" fill="#18446c"/><rect x="1680" y="920" width="40" height="40" fill="#174069"/><rect x="1720" y="920" width="40" height="40" fill="#173d67"/><rect x="1760" y="920" width="40" height="40" fill="#173c66"/><rect x="1800" y="920" width="40" height="40" fill="#173c66"/><rect x="1840" y="920" width="40" height="40" fill="#173e67"/><rect x="1880" y="920" width="40" height="40" fill="#17416a"/><rect x="1920" y="920" width="40" height="40" fill="#18436c"/><rect x="1600" y="960" width="40" height="40" fill="#18456d"/><rect x="1640" y="960" width="40" height="40" fill="#17426a"/><rect x="1680" y="960" width="40" height="40" fill="#173e67"/><rect x="1720" y="960" width="40" height="40" fill="#163b64"/><rect x="1760" y="960" width="40" height="40" fill="#163963"/><rect x="1800" y="960" width="40" height="40" fill="#163963"/><rect x="1840" y="960" width="40" height="40" fill="#163c65"/><rect x="1880" y="960" width="40" height="40" fill="#173f68"/><rect x="1920" y="960" width="40" height="40" fill="#17426a"/><rect x="1960" y="960" width="40" height="40" fill="#18446c"/><rect x="1600" y="1000" width="40" height="40" fill="#18446c"/><rect x="1640" y="1000" width="40" height="40" fill="#174069"/><rect x="1680" y="1000" width="40" height="40" fill="#173d66"/><rect x="1720" y="1000" width="40" height="40" fill="#163a64"/><rect x="1760" y="1000" width="40" height="40" fill="#163862"/><rect x="1800" y="1000" width="40" height="40" fill="#163963"/><rect x="1840" y="1000" width="40" height="40" fill="#163b64"/><rect x="1880" y="1000" width="40" height="40" fill="#173e67"/><rect x="1920" y="1000" width="40" height="40" fill="#174169"/><rect x="1960" y="1000" width="40" height="40" fill="#18446c"/><rect x="1640" y="1040" width="40" height="40" fill="#174169"/><rect x="1680" y="1040" width="40" height="40" fill="#173d66"/><rect x="1720" y="1040" width="40" height="40" fill="#163b64"/><rect x="1760" y="1040" width="40" height="40" fill="#163a63"/><rect x="1800" y="1040" width="40" height="40" fill="#163a64"/><rect x="1840" y="1040" width="40" height="40" fill="#163c65"/><rect x="1880" y="1040" width="40" height="40" fill="#173e67"/><rect x="1920" y="1040" width="40" height="40" fill="#174169"/><rect x="1960" y="1040" width="40" height="40" fill="#18436b"/><rect x="1680" y="1080" width="40" height="40" fill="#173f68"/><rect x="1720" y="1080" width="40" height="40" fill="#173d66"/><rect x="1760" y="1080" width="40" height="40" fill="#173c65"/><rect x="1800" y="1080" width="40" height="40" fill="#173c65"/><rect x="1840" y="1080" width="40" height="40" fill="#173d66"/><rect x="1880" y="1080" width="40" height="40" fill="#173f68"/><rect x="1920" y="1080" width="40" height="40" fill="#17426a"/><rect x="1960" y="1080" width="40" height="40" fill="#18446c"/><rect x="1680" y="1120" width="40" height="40" fill="#174169"/><rect x="1720" y="1120" width="40" height="40" fill="#173f68"/><rect x="1760" y="1120" width="40" height="40" fill="#173e67"/><rect x="1800" y="1120" width="40" height="40" fill="#173f67"/><rect x="1840" y="1120" width="40" height="40" fill="#173f68"/><rect x="1880" y="1120" width="40" height="40" fill="#174169"/><rect x="1920" y="1120" width="40" height="40" fill="#17436b"/><rect x="1960" y="1120" width="40" height="40" fill="#18456c"/><rect x="1720" y="1160" width="40" height="40" fill="#17426a"/><rect x="1760" y="1160" width="40" height="40" fill="#174169"/><rect x="1800" y="1160" width="40" height="40" fill="#174169"/><rect x="1840" y="1160" width="40" height="40" fill="#17426a"/><rect x="1880" y="1160" width="40" height="40" fill="#17436b"/><rect x="1920" y="1160" width="40" height="40" fill="#18446c"/><rect x="1960" y="1160" width="40" height="40" fill="#18466d"/><rect x="2000" y="1160" width="40" height="40" fill="#18476e"/></g></g><g clip-path="url(#cb4)"><g filter="url(#wb)"><rect x="280" y="-80" width="40" height="40" fill="#21648b"/><rect x="320" y="-80" width="40" height="40" fill="#21648b"/><rect x="360" y="-80" width="40" height="40" fill="#22638b"/><rect x="400" y="-80" width="40" height="40" fill="#22638b"/><rect x="440" y="-80" width="40" height="40" fill="#22628b"/><rect x="480" y="-80" width="40" height="40" fill="#22628b"/><rect x="520" y="-80" width="40" height="40" fill="#22618b"/><rect x="560" y="-80" width="40" height="40" fill="#22608b"/><rect x="600" y="-80" width="40" height="40" fill="#225f8b"/><rect x="640" y="-80" width="40" height="40" fill="#225f8b"/><rect x="680" y="-80" width="40" height="40" fill="#225f8b"/><rect x="720" y="-80" width="40" height="40" fill="#22608b"/><rect x="760" y="-80" width="40" height="40" fill="#22618a"/><rect x="800" y="-80" width="40" height="40" fill="#22628a"/><rect x="840" y="-80" width="40" height="40" fill="#216389"/><rect x="880" y="-80" width="40" height="40" fill="#216488"/><rect x="920" y="-80" width="40" height="40" fill="#216486"/><rect x="960" y="-80" width="40" height="40" fill="#206484"/><rect x="1000" y="-80" width="40" height="40" fill="#206483"/><rect x="1040" y="-80" width="40" height="40" fill="#206382"/><rect x="1080" y="-80" width="40" height="40" fill="#1f6380"/><rect x="1120" y="-80" width="40" height="40" fill="#1f637f"/><rect x="1160" y="-80" width="40" height="40" fill="#1f6380"/><rect x="1200" y="-80" width="40" height="40" fill="#1f6582"/><rect x="1240" y="-80" width="40" height="40" fill="#1f6784"/><rect x="1280" y="-80" width="40" height="40" fill="#1f6986"/><rect x="320" y="-40" width="40" height="40" fill="#21648b"/><rect x="360" y="-40" width="40" height="40" fill="#22638b"/><rect x="400" y="-40" width="40" height="40" fill="#22638b"/><rect x="440" y="-40" width="40" height="40" fill="#22628b"/><rect x="480" y="-40" width="40" height="40" fill="#22618b"/><rect x="520" y="-40" width="40" height="40" fill="#22608b"/><rect x="560" y="-40" width="40" height="40" fill="#225f8b"/><rect x="600" y="-40" width="40" height="40" fill="#225e8b"/><rect x="640" y="-40" width="40" height="40" fill="#235d8b"/><rect x="680" y="-40" width="40" height="40" fill="#235d8b"/><rect x="720" y="-40" width="40" height="40" fill="#225e8b"/><rect x="760" y="-40" width="40" height="40" fill="#22608b"/><rect x="800" y="-40" width="40" height="40" fill="#22628a"/><rect x="840" y="-40" width="40" height="40" fill="#21638a"/><rect x="880" y="-40" width="40" height="40" fill="#216488"/><rect x="920" y="-40" width="40" height="40" fill="#216385"/><rect x="960" y="-40" width="40" height="40" fill="#206383"/><rect x="1000" y="-40" width="40" height="40" fill="#206382"/><rect x="1040" y="-40" width="40" height="40" fill="#206381"/><rect x="1080" y="-40" width="40" height="40" fill="#1f627e"/><rect x="1120" y="-40" width="40" height="40" fill="#1e607b"/><rect x="1160" y="-40" width="40" height="40" fill="#1f617c"/><rect x="1200" y="-40" width="40" height="40" fill="#1f6480"/><rect x="1240" y="-40" width="40" height="40" fill="#1f6884"/><rect x="1280" y="-40" width="40" height="40" fill="#1f6a86"/><rect x="1320" y="-40" width="40" height="40" fill="#1f6c88"/><rect x="360" y="0" width="40" height="40" fill="#22638b"/><rect x="400" y="0" width="40" height="40" fill="#22638b"/><rect x="440" y="0" width="40" height="40" fill="#22628b"/><rect x="480" y="0" width="40" height="40" fill="#22618b"/><rect x="520" y="0" width="40" height="40" fill="#22608b"/><rect x="560" y="0" width="40" height="40" fill="#225f8b"/><rect x="600" y="0" width="40" height="40" fill="#235e8b"/><rect x="640" y="0" width="40" height="40" fill="#235c8b"/><rect x="680" y="0" width="40" height="40" fill="#235c8b"/><rect x="720" y="0" width="40" height="40" fill="#235d8b"/><rect x="760" y="0" width="40" height="40" fill="#22608b"/><rect x="800" y="0" width="40" height="40" fill="#22628b"/><rect x="840" y="0" width="40" height="40" fill="#21648b"/><rect x="880" y="0" width="40" height="40" fill="#216489"/><rect x="920" y="0" width="40" height="40" fill="#216386"/><rect x="960" y="0" width="40" height="40" fill="#206281"/><rect x="1000" y="0" width="40" height="40" fill="#206280"/><rect x="1040" y="0" width="40" height="40" fill="#206381"/><rect x="1080" y="0" width="40" height="40" fill="#1f617d"/><rect x="1120" y="0" width="40" height="40" fill="#1e5f79"/><rect x="1160" y="0" width="40" height="40" fill="#1e607b"/><rect x="1200" y="0" width="40" height="40" fill="#1f6580"/><rect x="1240" y="0" width="40" height="40" fill="#1f6985"/><rect x="1280" y="0" width="40" height="40" fill="#1f6c87"/><rect x="1320" y="0" width="40" height="40" fill="#1f6e89"/><rect x="400" y="40" width="40" height="40" fill="#22638c"/><rect x="440" y="40" width="40" height="40" fill="#22628b"/><rect x="480" y="40" width="40" height="40" fill="#22618b"/><rect x="520" y="40" width="40" height="40" fill="#22608b"/><rect x="560" y="40" width="40" height="40" fill="#225f8b"/><rect x="600" y="40" width="40" height="40" fill="#235e8b"/><rect x="640" y="40" width="40" height="40" fill="#235c8b"/><rect x="680" y="40" width="40" height="40" fill="#235c8b"/><rect x="720" y="40" width="40" height="40" fill="#235d8b"/><rect x="760" y="40" width="40" height="40" fill="#22608b"/><rect x="800" y="40" width="40" height="40" fill="#22638c"/><rect x="840" y="40" width="40" height="40" fill="#22648d"/><rect x="880" y="40" width="40" height="40" fill="#22658c"/><rect x="920" y="40" width="40" height="40" fill="#216488"/><rect x="960" y="40" width="40" height="40" fill="#206282"/><rect x="1000" y="40" width="40" height="40" fill="#206281"/><rect x="1040" y="40" width="40" height="40" fill="#206382"/><rect x="1080" y="40" width="40" height="40" fill="#1f6380"/><rect x="1120" y="40" width="40" height="40" fill="#1f627d"/><rect x="1160" y="40" width="40" height="40" fill="#1f637e"/><rect x="1200" y="40" width="40" height="40" fill="#1f6883"/><rect x="1240" y="40" width="40" height="40" fill="#1f6d87"/><rect x="1280" y="40" width="40" height="40" fill="#1f6f89"/><rect x="1320" y="40" width="40" height="40" fill="#1f708a"/><rect x="1360" y="40" width="40" height="40" fill="#1f708b"/><rect x="440" y="80" width="40" height="40" fill="#22638c"/><rect x="480" y="80" width="40" height="40" fill="#22628c"/><rect x="520" y="80" width="40" height="40" fill="#22618c"/><rect x="560" y="80" width="40" height="40" fill="#22608b"/><rect x="600" y="80" width="40" height="40" fill="#225f8b"/><rect x="640" y="80" width="40" height="40" fill="#235e8b"/><rect x="680" y="80" width="40" height="40" fill="#235d8b"/><rect x="720" y="80" width="40" height="40" fill="#225f8b"/><rect x="760" y="80" width="40" height="40" fill="#22628c"/><rect x="800" y="80" width="40" height="40" fill="#22648d"/><rect x="840" y="80" width="40" height="40" fill="#22658e"/><rect x="880" y="80" width="40" height="40" fill="#22658f"/><rect x="920" y="80" width="40" height="40" fill="#22658c"/><rect x="960" y="80" width="40" height="40" fill="#216487"/><rect x="1000" y="80" width="40" height="40" fill="#206485"/><rect x="1040" y="80" width="40" height="40" fill="#206685"/><rect x="1080" y="80" width="40" height="40" fill="#206785"/><rect x="1120" y="80" width="40" height="40" fill="#1f6784"/><rect x="1160" y="80" width="40" height="40" fill="#1f6985"/><rect x="1200" y="80" width="40" height="40" fill="#1f6d88"/><rect x="1240" y="80" width="40" height="40" fill="#1f7289"/><rect x="1280" y="80" width="40" height="40" fill="#1f738a"/><rect x="1320" y="80" width="40" height="40" fill="#1f738b"/><rect x="1360" y="80" width="40" height="40" fill="#1f718c"/><rect x="480" y="120" width="40" height="40" fill="#22628c"/><rect x="520" y="120" width="40" height="40" fill="#22628c"/><rect x="560" y="120" width="40" height="40" fill="#22618c"/><rect x="600" y="120" width="40" height="40" fill="#22608c"/><rect x="640" y="120" width="40" height="40" fill="#22608c"/><rect x="680" y="120" width="40" height="40" fill="#22608c"/><rect x="720" y="120" width="40" height="40" fill="#22618c"/><rect x="760" y="120" width="40" height="40" fill="#22638c"/><rect x="800" y="120" width="40" height="40" fill="#22658d"/><rect x="840" y="120" width="40" height="40" fill="#22658e"/><rect x="880" y="120" width="40" height="40" fill="#22658e"/><rect x="920" y="120" width="40" height="40" fill="#22668d"/><rect x="960" y="120" width="40" height="40" fill="#21678b"/><rect x="1000" y="120" width="40" height="40" fill="#21688a"/><rect x="1040" y="120" width="40" height="40" fill="#21698a"/><rect x="1080" y="120" width="40" height="40" fill="#206b8a"/><rect x="1120" y="120" width="40" height="40" fill="#206d8b"/><rect x="1160" y="120" width="40" height="40" fill="#206f8b"/><rect x="1200" y="120" width="40" height="40" fill="#1f718b"/><rect x="1240" y="120" width="40" height="40" fill="#1e748a"/><rect x="1280" y="120" width="40" height="40" fill="#1e7589"/><rect x="1320" y="120" width="40" height="40" fill="#1f748b"/><rect x="1360" y="120" width="40" height="40" fill="#1f738d"/><rect x="1400" y="120" width="40" height="40" fill="#20718e"/><rect x="520" y="160" width="40" height="40" fill="#22638c"/><rect x="560" y="160" width="40" height="40" fill="#22628c"/><rect x="600" y="160" width="40" height="40" fill="#22628c"/><rect x="640" y="160" width="40" height="40" fill="#22628c"/><rect x="680" y="160" width="40" height="40" fill="#22628c"/><rect x="720" y="160" width="40" height="40" fill="#22638c"/><rect x="760" y="160" width="40" height="40" fill="#22648d"/><rect x="800" y="160" width="40" height="40" fill="#22668d"/><rect x="840" y="160" width="40" height="40" fill="#22668e"/><rect x="880" y="160" width="40" height="40" fill="#22678e"/><rect x="920" y="160" width="40" height="40" fill="#22688e"/><rect x="960" y="160" width="40" height="40" fill="#21698e"/><rect x="1000" y="160" width="40" height="40" fill="#216b8e"/><rect x="1040" y="160" width="40" height="40" fill="#216d8e"/><rect x="1080" y="160" width="40" height="40" fill="#216f8f"/><rect x="1120" y="160" width="40" height="40" fill="#217291"/><rect x="1160" y="160" width="40" height="40" fill="#207390"/><rect x="1200" y="160" width="40" height="40" fill="#20738e"/><rect x="1240" y="160" width="40" height="40" fill="#1f748c"/><rect x="1280" y="160" width="40" height="40" fill="#1f758b"/><rect x="1320" y="160" width="40" height="40" fill="#1f748d"/><rect x="1360" y="160" width="40" height="40" fill="#20738f"/><rect x="1400" y="160" width="40" height="40" fill="#207290"/><rect x="560" y="200" width="40" height="40" fill="#22638c"/><rect x="600" y="200" width="40" height="40" fill="#22638c"/><rect x="640" y="200" width="40" height="40" fill="#22638c"/><rect x="680" y="200" width="40" height="40" fill="#22648d"/><rect x="720" y="200" width="40" height="40" fill="#22658d"/><rect x="760" y="200" width="40" height="40" fill="#22668e"/><rect x="800" y="200" width="40" height="40" fill="#22678e"/><rect x="840" y="200" width="40" height="40" fill="#22688f"/><rect x="880" y="200" width="40" height="40" fill="#226990"/><rect x="920" y="200" width="40" height="40" fill="#226b91"/><rect x="960" y="200" width="40" height="40" fill="#226c92"/><rect x="1000" y="200" width="40" height="40" fill="#226d93"/><rect x="1040" y="200" width="40" height="40" fill="#216f92"/><rect x="1080" y="200" width="40" height="40" fill="#217393"/><rect x="1120" y="200" width="40" height="40" fill="#217796"/><rect x="1160" y="200" width="40" height="40" fill="#217795"/><rect x="1200" y="200" width="40" height="40" fill="#207592"/><rect x="1240" y="200" width="40" height="40" fill="#207490"/><rect x="1280" y="200" width="40" height="40" fill="#207490"/><rect x="1320" y="200" width="40" height="40" fill="#207492"/><rect x="1360" y="200" width="40" height="40" fill="#217494"/><rect x="1400" y="200" width="40" height="40" fill="#217393"/><rect x="1440" y="200" width="40" height="40" fill="#217293"/><rect x="600" y="240" width="40" height="40" fill="#22648d"/><rect x="640" y="240" width="40" height="40" fill="#22658d"/><rect x="680" y="240" width="40" height="40" fill="#22658d"/><rect x="720" y="240" width="40" height="40" fill="#22668e"/><rect x="760" y="240" width="40" height="40" fill="#22678e"/><rect x="800" y="240" width="40" height="40" fill="#22688f"/><rect x="840" y="240" width="40" height="40" fill="#226990"/><rect x="880" y="240" width="40" height="40" fill="#226b92"/><rect x="920" y="240" width="40" height="40" fill="#226d95"/><rect x="960" y="240" width="40" height="40" fill="#226f97"/><rect x="1000" y="240" width="40" height="40" fill="#226f97"/><rect x="1040" y="240" width="40" height="40" fill="#227095"/><rect x="1080" y="240" width="40" height="40" fill="#217495"/><rect x="1120" y="240" width="40" height="40" fill="#217897"/><rect x="1160" y="240" width="40" height="40" fill="#217997"/><rect x="1200" y="240" width="40" height="40" fill="#217695"/><rect x="1240" y="240" width="40" height="40" fill="#217595"/><rect x="1280" y="240" width="40" height="40" fill="#217598"/><rect x="1320" y="240" width="40" height="40" fill="#22769a"/><rect x="1360" y="240" width="40" height="40" fill="#227599"/><rect x="1400" y="240" width="40" height="40" fill="#217497"/><rect x="1440" y="240" width="40" height="40" fill="#217295"/><rect x="640" y="280" width="40" height="40" fill="#22668d"/><rect x="680" y="280" width="40" height="40" fill="#22668e"/><rect x="720" y="280" width="40" height="40" fill="#22678e"/><rect x="760" y="280" width="40" height="40" fill="#22688f"/><rect x="800" y="280" width="40" height="40" fill="#226990"/><rect x="840" y="280" width="40" height="40" fill="#226b91"/><rect x="880" y="280" width="40" height="40" fill="#226c93"/><rect x="920" y="280" width="40" height="40" fill="#226e96"/><rect x="960" y="280" width="40" height="40" fill="#237099"/><rect x="1000" y="280" width="40" height="40" fill="#237099"/><rect x="1040" y="280" width="40" height="40" fill="#227096"/><rect x="1080" y="280" width="40" height="40" fill="#217395"/><rect x="1120" y="280" width="40" height="40" fill="#217696"/><rect x="1160" y="280" width="40" height="40" fill="#217696"/><rect x="1200" y="280" width="40" height="40" fill="#217595"/><rect x="1240" y="280" width="40" height="40" fill="#217597"/><rect x="1280" y="280" width="40" height="40" fill="#22769c"/><rect x="1320" y="280" width="40" height="40" fill="#23789f"/><rect x="1360" y="280" width="40" height="40" fill="#22769d"/><rect x="1400" y="280" width="40" height="40" fill="#227499"/><rect x="1440" y="280" width="40" height="40" fill="#217296"/><rect x="1480" y="280" width="40" height="40" fill="#217094"/><rect x="680" y="320" width="40" height="40" fill="#22678e"/><rect x="720" y="320" width="40" height="40" fill="#22688f"/><rect x="760" y="320" width="40" height="40" fill="#22698f"/><rect x="800" y="320" width="40" height="40" fill="#226a90"/><rect x="840" y="320" width="40" height="40" fill="#226b92"/><rect x="880" y="320" width="40" height="40" fill="#226d94"/><rect x="920" y="320" width="40" height="40" fill="#226e96"/><rect x="960" y="320" width="40" height="40" fill="#236f98"/><rect x="1000" y="320" width="40" height="40" fill="#237098"/><rect x="1040" y="320" width="40" height="40" fill="#227096"/><rect x="1080" y="320" width="40" height="40" fill="#227295"/><rect x="1120" y="320" width="40" height="40" fill="#217395"/><rect x="1160" y="320" width="40" height="40" fill="#217495"/><rect x="1200" y="320" width="40" height="40" fill="#217496"/><rect x="1240" y="320" width="40" height="40" fill="#227498"/><rect x="1280" y="320" width="40" height="40" fill="#22769c"/><rect x="1320" y="320" width="40" height="40" fill="#23779e"/><rect x="1360" y="320" width="40" height="40" fill="#22769c"/><rect x="1400" y="320" width="40" height="40" fill="#227499"/><rect x="1440" y="320" width="40" height="40" fill="#217196"/><rect x="1480" y="320" width="40" height="40" fill="#217094"/><rect x="720" y="360" width="40" height="40" fill="#22688f"/><rect x="760" y="360" width="40" height="40" fill="#226990"/><rect x="800" y="360" width="40" height="40" fill="#226a91"/><rect x="840" y="360" width="40" height="40" fill="#226b92"/><rect x="880" y="360" width="40" height="40" fill="#226d93"/><rect x="920" y="360" width="40" height="40" fill="#226e95"/><rect x="960" y="360" width="40" height="40" fill="#226f96"/><rect x="1000" y="360" width="40" height="40" fill="#226f96"/><rect x="1040" y="360" width="40" height="40" fill="#227095"/><rect x="1080" y="360" width="40" height="40" fill="#227094"/><rect x="1120" y="360" width="40" height="40" fill="#217194"/><rect x="1160" y="360" width="40" height="40" fill="#217294"/><rect x="1200" y="360" width="40" height="40" fill="#217295"/><rect x="1240" y="360" width="40" height="40" fill="#227397"/><rect x="1280" y="360" width="40" height="40" fill="#227499"/><rect x="1320" y="360" width="40" height="40" fill="#22749a"/><rect x="1360" y="360" width="40" height="40" fill="#227399"/><rect x="1400" y="360" width="40" height="40" fill="#227297"/><rect x="1440" y="360" width="40" height="40" fill="#217095"/><rect x="1480" y="360" width="40" height="40" fill="#216e93"/><rect x="1520" y="360" width="40" height="40" fill="#216d92"/><rect x="760" y="400" width="40" height="40" fill="#216a90"/><rect x="800" y="400" width="40" height="40" fill="#226a90"/><rect x="840" y="400" width="40" height="40" fill="#226b91"/><rect x="880" y="400" width="40" height="40" fill="#226c93"/><rect x="920" y="400" width="40" height="40" fill="#226d93"/><rect x="960" y="400" width="40" height="40" fill="#226e94"/><rect x="1000" y="400" width="40" height="40" fill="#226e94"/><rect x="1040" y="400" width="40" height="40" fill="#226f94"/><rect x="1080" y="400" width="40" height="40" fill="#216f94"/><rect x="1120" y="400" width="40" height="40" fill="#217093"/><rect x="1160" y="400" width="40" height="40" fill="#217094"/><rect x="1200" y="400" width="40" height="40" fill="#217094"/><rect x="1240" y="400" width="40" height="40" fill="#217195"/><rect x="1280" y="400" width="40" height="40" fill="#227196"/><rect x="1320" y="400" width="40" height="40" fill="#227197"/><rect x="1360" y="400" width="40" height="40" fill="#227096"/><rect x="1400" y="400" width="40" height="40" fill="#216e95"/><rect x="1440" y="400" width="40" height="40" fill="#216d93"/><rect x="1480" y="400" width="40" height="40" fill="#216c92"/><rect x="1520" y="400" width="40" height="40" fill="#216b91"/><rect x="1560" y="400" width="40" height="40" fill="#216a90"/><rect x="800" y="440" width="40" height="40" fill="#216a90"/><rect x="840" y="440" width="40" height="40" fill="#226b91"/><rect x="880" y="440" width="40" height="40" fill="#226c92"/><rect x="920" y="440" width="40" height="40" fill="#226d92"/><rect x="960" y="440" width="40" height="40" fill="#226d93"/><rect x="1000" y="440" width="40" height="40" fill="#226e93"/><rect x="1040" y="440" width="40" height="40" fill="#216e93"/><rect x="1080" y="440" width="40" height="40" fill="#216e93"/><rect x="1120" y="440" width="40" height="40" fill="#216e93"/><rect x="1160" y="440" width="40" height="40" fill="#216f93"/><rect x="1200" y="440" width="40" height="40" fill="#216e93"/><rect x="1240" y="440" width="40" height="40" fill="#216e93"/><rect x="1280" y="440" width="40" height="40" fill="#216d94"/><rect x="1320" y="440" width="40" height="40" fill="#216d93"/><rect x="1360" y="440" width="40" height="40" fill="#216b93"/><rect x="1400" y="440" width="40" height="40" fill="#216a92"/><rect x="1440" y="440" width="40" height="40" fill="#216a91"/><rect x="1480" y="440" width="40" height="40" fill="#216991"/><rect x="1520" y="440" width="40" height="40" fill="#216990"/><rect x="1560" y="440" width="40" height="40" fill="#21698f"/><rect x="840" y="480" width="40" height="40" fill="#216b91"/><rect x="880" y="480" width="40" height="40" fill="#216b91"/><rect x="920" y="480" width="40" height="40" fill="#216c92"/><rect x="960" y="480" width="40" height="40" fill="#216c92"/><rect x="1000" y="480" width="40" height="40" fill="#216d92"/><rect x="1040" y="480" width="40" height="40" fill="#216d92"/><rect x="1080" y="480" width="40" height="40" fill="#216d92"/><rect x="1120" y="480" width="40" height="40" fill="#216d92"/><rect x="1160" y="480" width="40" height="40" fill="#216d92"/><rect x="1200" y="480" width="40" height="40" fill="#216c92"/><rect x="1240" y="480" width="40" height="40" fill="#216b92"/><rect x="1280" y="480" width="40" height="40" fill="#216a91"/><rect x="1320" y="480" width="40" height="40" fill="#216891"/><rect x="1360" y="480" width="40" height="40" fill="#216790"/><rect x="1400" y="480" width="40" height="40" fill="#216690"/><rect x="1440" y="480" width="40" height="40" fill="#216690"/><rect x="1480" y="480" width="40" height="40" fill="#21678f"/><rect x="1520" y="480" width="40" height="40" fill="#21678f"/><rect x="1560" y="480" width="40" height="40" fill="#21678e"/><rect x="1600" y="480" width="40" height="40" fill="#20678e"/><rect x="880" y="520" width="40" height="40" fill="#216b90"/><rect x="920" y="520" width="40" height="40" fill="#216b91"/><rect x="960" y="520" width="40" height="40" fill="#216c91"/><rect x="1000" y="520" width="40" height="40" fill="#216c91"/><rect x="1040" y="520" width="40" height="40" fill="#216c91"/><rect x="1080" y="520" width="40" height="40" fill="#216c91"/><rect x="1120" y="520" width="40" height="40" fill="#216c91"/><rect x="1160" y="520" width="40" height="40" fill="#216b91"/><rect x="1200" y="520" width="40" height="40" fill="#216a91"/><rect x="1240" y="520" width="40" height="40" fill="#216990"/><rect x="1280" y="520" width="40" height="40" fill="#216790"/><rect x="1320" y="520" width="40" height="40" fill="#21648f"/><rect x="1360" y="520" width="40" height="40" fill="#21638f"/><rect x="1400" y="520" width="40" height="40" fill="#21628f"/><rect x="1440" y="520" width="40" height="40" fill="#21638f"/><rect x="1480" y="520" width="40" height="40" fill="#21648f"/><rect x="1520" y="520" width="40" height="40" fill="#21658e"/><rect x="1560" y="520" width="40" height="40" fill="#20658e"/><rect x="1600" y="520" width="40" height="40" fill="#20658d"/><rect x="920" y="560" width="40" height="40" fill="#216b90"/><rect x="960" y="560" width="40" height="40" fill="#216b90"/><rect x="1000" y="560" width="40" height="40" fill="#216b90"/><rect x="1040" y="560" width="40" height="40" fill="#216b90"/><rect x="1080" y="560" width="40" height="40" fill="#216b90"/><rect x="1120" y="560" width="40" height="40" fill="#216a90"/><rect x="1160" y="560" width="40" height="40" fill="#216a90"/><rect x="1200" y="560" width="40" height="40" fill="#216990"/><rect x="1240" y="560" width="40" height="40" fill="#21678f"/><rect x="1280" y="560" width="40" height="40" fill="#21658f"/><rect x="1320" y="560" width="40" height="40" fill="#21628e"/><rect x="1360" y="560" width="40" height="40" fill="#21618e"/><rect x="1400" y="560" width="40" height="40" fill="#21618e"/><rect x="1440" y="560" width="40" height="40" fill="#21628e"/><rect x="1480" y="560" width="40" height="40" fill="#21638e"/><rect x="1520" y="560" width="40" height="40" fill="#20648d"/><rect x="1560" y="560" width="40" height="40" fill="#20648d"/><rect x="1600" y="560" width="40" height="40" fill="#20648c"/><rect x="1640" y="560" width="40" height="40" fill="#20648b"/><rect x="960" y="600" width="40" height="40" fill="#216a90"/><rect x="1000" y="600" width="40" height="40" fill="#216a90"/><rect x="1040" y="600" width="40" height="40" fill="#216a90"/><rect x="1080" y="600" width="40" height="40" fill="#216a90"/><rect x="1120" y="600" width="40" height="40" fill="#216990"/><rect x="1160" y="600" width="40" height="40" fill="#21698f"/><rect x="1200" y="600" width="40" height="40" fill="#21678f"/><rect x="1240" y="600" width="40" height="40" fill="#21668f"/><rect x="1280" y="600" width="40" height="40" fill="#21648e"/><rect x="1320" y="600" width="40" height="40" fill="#21628e"/><rect x="1360" y="600" width="40" height="40" fill="#21608e"/><rect x="1400" y="600" width="40" height="40" fill="#21608e"/><rect x="1440" y="600" width="40" height="40" fill="#21618e"/><rect x="1480" y="600" width="40" height="40" fill="#21628d"/><rect x="1520" y="600" width="40" height="40" fill="#20638d"/><rect x="1560" y="600" width="40" height="40" fill="#20638c"/><rect x="1600" y="600" width="40" height="40" fill="#20638b"/><rect x="1640" y="600" width="40" height="40" fill="#20628a"/><rect x="1000" y="640" width="40" height="40" fill="#216a8f"/><rect x="1040" y="640" width="40" height="40" fill="#21698f"/><rect x="1080" y="640" width="40" height="40" fill="#21698f"/><rect x="1120" y="640" width="40" height="40" fill="#21688f"/><rect x="1160" y="640" width="40" height="40" fill="#21678f"/><rect x="1200" y="640" width="40" height="40" fill="#21668e"/><rect x="1240" y="640" width="40" height="40" fill="#21658e"/><rect x="1280" y="640" width="40" height="40" fill="#21638e"/><rect x="1320" y="640" width="40" height="40" fill="#21628e"/><rect x="1360" y="640" width="40" height="40" fill="#21618e"/><rect x="1400" y="640" width="40" height="40" fill="#21618e"/><rect x="1440" y="640" width="40" height="40" fill="#21618d"/><rect x="1480" y="640" width="40" height="40" fill="#20618d"/><rect x="1520" y="640" width="40" height="40" fill="#20618b"/><rect x="1560" y="640" width="40" height="40" fill="#20618a"/><rect x="1600" y="640" width="40" height="40" fill="#1f6189"/><rect x="1640" y="640" width="40" height="40" fill="#1f6088"/><rect x="1680" y="640" width="40" height="40" fill="#1f6087"/><rect x="1040" y="680" width="40" height="40" fill="#21688e"/><rect x="1080" y="680" width="40" height="40" fill="#21688e"/><rect x="1120" y="680" width="40" height="40" fill="#21678e"/><rect x="1160" y="680" width="40" height="40" fill="#21678e"/><rect x="1200" y="680" width="40" height="40" fill="#21668e"/><rect x="1240" y="680" width="40" height="40" fill="#21648d"/><rect x="1280" y="680" width="40" height="40" fill="#21638d"/><rect x="1320" y="680" width="40" height="40" fill="#21628d"/><rect x="1360" y="680" width="40" height="40" fill="#21628d"/><rect x="1400" y="680" width="40" height="40" fill="#21618d"/><rect x="1440" y="680" width="40" height="40" fill="#20618c"/><rect x="1480" y="680" width="40" height="40" fill="#20618b"/><rect x="1520" y="680" width="40" height="40" fill="#20608a"/><rect x="1560" y="680" width="40" height="40" fill="#1f5f88"/><rect x="1600" y="680" width="40" height="40" fill="#1f5f87"/><rect x="1640" y="680" width="40" height="40" fill="#1f5e86"/><rect x="1680" y="680" width="40" height="40" fill="#1e5d85"/><rect x="1080" y="720" width="40" height="40" fill="#20678e"/><rect x="1120" y="720" width="40" height="40" fill="#20678d"/><rect x="1160" y="720" width="40" height="40" fill="#20668d"/><rect x="1200" y="720" width="40" height="40" fill="#20658d"/><rect x="1240" y="720" width="40" height="40" fill="#20648d"/><rect x="1280" y="720" width="40" height="40" fill="#20638c"/><rect x="1320" y="720" width="40" height="40" fill="#20628c"/><rect x="1360" y="720" width="40" height="40" fill="#20618c"/><rect x="1400" y="720" width="40" height="40" fill="#20618b"/><rect x="1440" y="720" width="40" height="40" fill="#20608a"/><rect x="1480" y="720" width="40" height="40" fill="#1f5f89"/><rect x="1520" y="720" width="40" height="40" fill="#1f5e87"/><rect x="1560" y="720" width="40" height="40" fill="#1f5d85"/><rect x="1600" y="720" width="40" height="40" fill="#1e5c84"/><rect x="1640" y="720" width="40" height="40" fill="#1e5b83"/><rect x="1680" y="720" width="40" height="40" fill="#1e5b82"/><rect x="1720" y="720" width="40" height="40" fill="#1e5b82"/><rect x="1120" y="760" width="40" height="40" fill="#20668d"/><rect x="1160" y="760" width="40" height="40" fill="#20658c"/><rect x="1200" y="760" width="40" height="40" fill="#20648c"/><rect x="1240" y="760" width="40" height="40" fill="#20638b"/><rect x="1280" y="760" width="40" height="40" fill="#20628b"/><rect x="1320" y="760" width="40" height="40" fill="#20618a"/><rect x="1360" y="760" width="40" height="40" fill="#20608a"/><rect x="1400" y="760" width="40" height="40" fill="#1f5f89"/><rect x="1440" y="760" width="40" height="40" fill="#1f5e87"/><rect x="1480" y="760" width="40" height="40" fill="#1f5c86"/><rect x="1520" y="760" width="40" height="40" fill="#1e5b84"/><rect x="1560" y="760" width="40" height="40" fill="#1e5982"/><rect x="1600" y="760" width="40" height="40" fill="#1d5880"/><rect x="1640" y="760" width="40" height="40" fill="#1d577f"/><rect x="1680" y="760" width="40" height="40" fill="#1d577f"/><rect x="1720" y="760" width="40" height="40" fill="#1d577f"/><rect x="1160" y="800" width="40" height="40" fill="#20648b"/><rect x="1200" y="800" width="40" height="40" fill="#20638b"/><rect x="1240" y="800" width="40" height="40" fill="#20628a"/><rect x="1280" y="800" width="40" height="40" fill="#206189"/><rect x="1320" y="800" width="40" height="40" fill="#1f6089"/><rect x="1360" y="800" width="40" height="40" fill="#1f5f87"/><rect x="1400" y="800" width="40" height="40" fill="#1f5d86"/><rect x="1440" y="800" width="40" height="40" fill="#1e5b84"/><rect x="1480" y="800" width="40" height="40" fill="#1e5981"/><rect x="1520" y="800" width="40" height="40" fill="#1d567f"/><rect x="1560" y="800" width="40" height="40" fill="#1c547d"/><rect x="1600" y="800" width="40" height="40" fill="#1c537b"/><rect x="1640" y="800" width="40" height="40" fill="#1c537b"/><rect x="1680" y="800" width="40" height="40" fill="#1c537b"/><rect x="1720" y="800" width="40" height="40" fill="#1c547c"/><rect x="1760" y="800" width="40" height="40" fill="#1c557c"/><rect x="1200" y="840" width="40" height="40" fill="#20628a"/><rect x="1240" y="840" width="40" height="40" fill="#1f6189"/><rect x="1280" y="840" width="40" height="40" fill="#1f6088"/><rect x="1320" y="840" width="40" height="40" fill="#1f5e86"/><rect x="1360" y="840" width="40" height="40" fill="#1e5c85"/><rect x="1400" y="840" width="40" height="40" fill="#1e5a83"/><rect x="1440" y="840" width="40" height="40" fill="#1d5780"/><rect x="1480" y="840" width="40" height="40" fill="#1c547d"/><rect x="1520" y="840" width="40" height="40" fill="#1c517a"/><rect x="1560" y="840" width="40" height="40" fill="#1b4f78"/><rect x="1600" y="840" width="40" height="40" fill="#1b4e76"/><rect x="1640" y="840" width="40" height="40" fill="#1b4e76"/><rect x="1680" y="840" width="40" height="40" fill="#1b4f77"/><rect x="1720" y="840" width="40" height="40" fill="#1b5078"/><rect x="1760" y="840" width="40" height="40" fill="#1c5279"/><rect x="1240" y="880" width="40" height="40" fill="#1f6087"/><rect x="1280" y="880" width="40" height="40" fill="#1f5e86"/><rect x="1320" y="880" width="40" height="40" fill="#1e5c84"/><rect x="1360" y="880" width="40" height="40" fill="#1e5a82"/><rect x="1400" y="880" width="40" height="40" fill="#1d577f"/><rect x="1440" y="880" width="40" height="40" fill="#1c547c"/><rect x="1480" y="880" width="40" height="40" fill="#1b5079"/><rect x="1520" y="880" width="40" height="40" fill="#1b4d75"/><rect x="1560" y="880" width="40" height="40" fill="#1a4a73"/><rect x="1600" y="880" width="40" height="40" fill="#1a4972"/><rect x="1640" y="880" width="40" height="40" fill="#1a4972"/><rect x="1680" y="880" width="40" height="40" fill="#1a4b73"/><rect x="1720" y="880" width="40" height="40" fill="#1a4d75"/><rect x="1760" y="880" width="40" height="40" fill="#1b4f77"/><rect x="1800" y="880" width="40" height="40" fill="#1b5179"/><rect x="1280" y="920" width="40" height="40" fill="#1e5d84"/><rect x="1320" y="920" width="40" height="40" fill="#1e5a82"/><rect x="1360" y="920" width="40" height="40" fill="#1d5880"/><rect x="1400" y="920" width="40" height="40" fill="#1c547c"/><rect x="1440" y="920" width="40" height="40" fill="#1b5079"/><rect x="1480" y="920" width="40" height="40" fill="#1a4c75"/><rect x="1520" y="920" width="40" height="40" fill="#1a4971"/><rect x="1560" y="920" width="40" height="40" fill="#19466f"/><rect x="1600" y="920" width="40" height="40" fill="#19456e"/><rect x="1640" y="920" width="40" height="40" fill="#19466e"/><rect x="1680" y="920" width="40" height="40" fill="#194770"/><rect x="1720" y="920" width="40" height="40" fill="#1a4a72"/><rect x="1760" y="920" width="40" height="40" fill="#1a4c75"/><rect x="1800" y="920" width="40" height="40" fill="#1b4f77"/><rect x="1320" y="960" width="40" height="40" fill="#1d5981"/><rect x="1360" y="960" width="40" height="40" fill="#1d567e"/><rect x="1400" y="960" width="40" height="40" fill="#1c527a"/><rect x="1440" y="960" width="40" height="40" fill="#1b4e76"/><rect x="1480" y="960" width="40" height="40" fill="#1a4a72"/><rect x="1520" y="960" width="40" height="40" fill="#19466f"/><rect x="1560" y="960" width="40" height="40" fill="#18446d"/><rect x="1600" y="960" width="40" height="40" fill="#18436c"/><rect x="1640" y="960" width="40" height="40" fill="#18436c"/><rect x="1680" y="960" width="40" height="40" fill="#19456e"/><rect x="1720" y="960" width="40" height="40" fill="#194871"/><rect x="1760" y="960" width="40" height="40" fill="#1a4b73"/><rect x="1800" y="960" width="40" height="40" fill="#1b4e76"/><rect x="1840" y="960" width="40" height="40" fill="#1b5078"/><rect x="1360" y="1000" width="40" height="40" fill="#1c557c"/><rect x="1400" y="1000" width="40" height="40" fill="#1b5179"/><rect x="1440" y="1000" width="40" height="40" fill="#1b4d75"/><rect x="1480" y="1000" width="40" height="40" fill="#1a4971"/><rect x="1520" y="1000" width="40" height="40" fill="#19456e"/><rect x="1560" y="1000" width="40" height="40" fill="#18436c"/><rect x="1600" y="1000" width="40" height="40" fill="#18426b"/><rect x="1640" y="1000" width="40" height="40" fill="#18436c"/><rect x="1680" y="1000" width="40" height="40" fill="#19456e"/><rect x="1720" y="1000" width="40" height="40" fill="#194770"/><rect x="1760" y="1000" width="40" height="40" fill="#1a4a73"/><rect x="1800" y="1000" width="40" height="40" fill="#1a4d75"/><rect x="1840" y="1000" width="40" height="40" fill="#1b5077"/><rect x="1400" y="1040" width="40" height="40" fill="#1b5078"/><rect x="1440" y="1040" width="40" height="40" fill="#1a4d75"/><rect x="1480" y="1040" width="40" height="40" fill="#1a4972"/><rect x="1520" y="1040" width="40" height="40" fill="#19466f"/><rect x="1560" y="1040" width="40" height="40" fill="#18446d"/><rect x="1600" y="1040" width="40" height="40" fill="#18436c"/><rect x="1640" y="1040" width="40" height="40" fill="#18446d"/><rect x="1680" y="1040" width="40" height="40" fill="#19456e"/><rect x="1720" y="1040" width="40" height="40" fill="#194870"/><rect x="1760" y="1040" width="40" height="40" fill="#1a4a73"/><rect x="1800" y="1040" width="40" height="40" fill="#1a4d75"/><rect x="1840" y="1040" width="40" height="40" fill="#1b4f77"/><rect x="1880" y="1040" width="40" height="40" fill="#1b5279"/><rect x="1440" y="1080" width="40" height="40" fill="#1b4d76"/><rect x="1480" y="1080" width="40" height="40" fill="#1a4a73"/><rect x="1520" y="1080" width="40" height="40" fill="#194870"/><rect x="1560" y="1080" width="40" height="40" fill="#19466f"/><rect x="1600" y="1080" width="40" height="40" fill="#19456e"/><rect x="1640" y="1080" width="40" height="40" fill="#19466e"/><rect x="1680" y="1080" width="40" height="40" fill="#194770"/><rect x="1720" y="1080" width="40" height="40" fill="#1a4971"/><rect x="1760" y="1080" width="40" height="40" fill="#1a4b73"/><rect x="1800" y="1080" width="40" height="40" fill="#1b4d75"/><rect x="1840" y="1080" width="40" height="40" fill="#1b5077"/><rect x="1880" y="1080" width="40" height="40" fill="#1c5279"/><rect x="1480" y="1120" width="40" height="40" fill="#1a4c74"/><rect x="1520" y="1120" width="40" height="40" fill="#1a4a72"/><rect x="1560" y="1120" width="40" height="40" fill="#194871"/><rect x="1600" y="1120" width="40" height="40" fill="#194870"/><rect x="1640" y="1120" width="40" height="40" fill="#194870"/><rect x="1680" y="1120" width="40" height="40" fill="#1a4971"/><rect x="1720" y="1120" width="40" height="40" fill="#1a4a73"/><rect x="1760" y="1120" width="40" height="40" fill="#1a4c74"/><rect x="1800" y="1120" width="40" height="40" fill="#1b4e76"/><rect x="1840" y="1120" width="40" height="40" fill="#1b5078"/><rect x="1880" y="1120" width="40" height="40" fill="#1c5279"/><rect x="1920" y="1120" width="40" height="40" fill="#1c547b"/><rect x="1520" y="1160" width="40" height="40" fill="#1a4c74"/><rect x="1560" y="1160" width="40" height="40" fill="#1a4b73"/><rect x="1600" y="1160" width="40" height="40" fill="#1a4a72"/><rect x="1640" y="1160" width="40" height="40" fill="#1a4a73"/><rect x="1680" y="1160" width="40" height="40" fill="#1a4b73"/><rect x="1720" y="1160" width="40" height="40" fill="#1a4c74"/><rect x="1760" y="1160" width="40" height="40" fill="#1b4e76"/><rect x="1800" y="1160" width="40" height="40" fill="#1b4f77"/><rect x="1840" y="1160" width="40" height="40" fill="#1b5179"/><rect x="1880" y="1160" width="40" height="40" fill="#1c537a"/><rect x="1920" y="1160" width="40" height="40" fill="#1c547b"/></g></g><g clip-path="url(#cb3)"><g filter="url(#wb)"><rect x="-80" y="-80" width="40" height="40" fill="#1c4368"/><rect x="-40" y="-80" width="40" height="40" fill="#1c4267"/><rect x="0" y="-80" width="40" height="40" fill="#1c4266"/><rect x="40" y="-80" width="40" height="40" fill="#1d4369"/><rect x="80" y="-80" width="40" height="40" fill="#1e466c"/><rect x="120" y="-80" width="40" height="40" fill="#1f4870"/><rect x="160" y="-80" width="40" height="40" fill="#1f4972"/><rect x="200" y="-80" width="40" height="40" fill="#204a73"/><rect x="240" y="-80" width="40" height="40" fill="#214a74"/><rect x="280" y="-80" width="40" height="40" fill="#214a75"/><rect x="320" y="-80" width="40" height="40" fill="#224b76"/><rect x="360" y="-80" width="40" height="40" fill="#224c78"/><rect x="400" y="-80" width="40" height="40" fill="#224e7b"/><rect x="440" y="-80" width="40" height="40" fill="#224f7d"/><rect x="480" y="-80" width="40" height="40" fill="#23507e"/><rect x="520" y="-80" width="40" height="40" fill="#22517e"/><rect x="560" y="-80" width="40" height="40" fill="#22517e"/><rect x="600" y="-80" width="40" height="40" fill="#22517e"/><rect x="-80" y="-40" width="40" height="40" fill="#1c4267"/><rect x="-40" y="-40" width="40" height="40" fill="#1b4064"/><rect x="0" y="-40" width="40" height="40" fill="#1b3f62"/><rect x="40" y="-40" width="40" height="40" fill="#1c4166"/><rect x="80" y="-40" width="40" height="40" fill="#1d466c"/><rect x="120" y="-40" width="40" height="40" fill="#1f4870"/><rect x="160" y="-40" width="40" height="40" fill="#1f4972"/><rect x="200" y="-40" width="40" height="40" fill="#204a73"/><rect x="240" y="-40" width="40" height="40" fill="#214974"/><rect x="280" y="-40" width="40" height="40" fill="#224974"/><rect x="320" y="-40" width="40" height="40" fill="#224a76"/><rect x="360" y="-40" width="40" height="40" fill="#224c79"/><rect x="400" y="-40" width="40" height="40" fill="#234f7c"/><rect x="440" y="-40" width="40" height="40" fill="#23507f"/><rect x="480" y="-40" width="40" height="40" fill="#23517f"/><rect x="520" y="-40" width="40" height="40" fill="#23517f"/><rect x="560" y="-40" width="40" height="40" fill="#23517f"/><rect x="600" y="-40" width="40" height="40" fill="#22527f"/><rect x="640" y="-40" width="40" height="40" fill="#22527f"/><rect x="-80" y="0" width="40" height="40" fill="#1c4266"/><rect x="-40" y="0" width="40" height="40" fill="#1b3f62"/><rect x="0" y="0" width="40" height="40" fill="#1a3e60"/><rect x="40" y="0" width="40" height="40" fill="#1b4164"/><rect x="80" y="0" width="40" height="40" fill="#1e466d"/><rect x="120" y="0" width="40" height="40" fill="#1f4971"/><rect x="160" y="0" width="40" height="40" fill="#1f4a72"/><rect x="200" y="0" width="40" height="40" fill="#204a73"/><rect x="240" y="0" width="40" height="40" fill="#224974"/><rect x="280" y="0" width="40" height="40" fill="#224873"/><rect x="320" y="0" width="40" height="40" fill="#224a75"/><rect x="360" y="0" width="40" height="40" fill="#234d7a"/><rect x="400" y="0" width="40" height="40" fill="#23507f"/><rect x="440" y="0" width="40" height="40" fill="#245282"/><rect x="480" y="0" width="40" height="40" fill="#245282"/><rect x="520" y="0" width="40" height="40" fill="#235281"/><rect x="560" y="0" width="40" height="40" fill="#235280"/><rect x="600" y="0" width="40" height="40" fill="#235280"/><rect x="640" y="0" width="40" height="40" fill="#225380"/><rect x="680" y="0" width="40" height="40" fill="#225380"/><rect x="-80" y="40" width="40" height="40" fill="#1c4468"/><rect x="-40" y="40" width="40" height="40" fill="#1b4165"/><rect x="0" y="40" width="40" height="40" fill="#1b4064"/><rect x="40" y="40" width="40" height="40" fill="#1c4368"/><rect x="80" y="40" width="40" height="40" fill="#1e486f"/><rect x="120" y="40" width="40" height="40" fill="#1f4a72"/><rect x="160" y="40" width="40" height="40" fill="#1f4a72"/><rect x="200" y="40" width="40" height="40" fill="#204a73"/><rect x="240" y="40" width="40" height="40" fill="#214974"/><rect x="280" y="40" width="40" height="40" fill="#224974"/><rect x="320" y="40" width="40" height="40" fill="#224a76"/><rect x="360" y="40" width="40" height="40" fill="#234f7d"/><rect x="400" y="40" width="40" height="40" fill="#245283"/><rect x="440" y="40" width="40" height="40" fill="#255385"/><rect x="480" y="40" width="40" height="40" fill="#245384"/><rect x="520" y="40" width="40" height="40" fill="#245282"/><rect x="560" y="40" width="40" height="40" fill="#235281"/><rect x="600" y="40" width="40" height="40" fill="#235381"/><rect x="640" y="40" width="40" height="40" fill="#225380"/><rect x="680" y="40" width="40" height="40" fill="#225480"/><rect x="720" y="40" width="40" height="40" fill="#225481"/><rect x="-80" y="80" width="40" height="40" fill="#1d476d"/><rect x="-40" y="80" width="40" height="40" fill="#1d466b"/><rect x="0" y="80" width="40" height="40" fill="#1d466b"/><rect x="40" y="80" width="40" height="40" fill="#1e476e"/><rect x="80" y="80" width="40" height="40" fill="#1f4971"/><rect x="120" y="80" width="40" height="40" fill="#1f4a72"/><rect x="160" y="80" width="40" height="40" fill="#1f4a73"/><rect x="200" y="80" width="40" height="40" fill="#204b74"/><rect x="240" y="80" width="40" height="40" fill="#214b75"/><rect x="280" y="80" width="40" height="40" fill="#224b76"/><rect x="320" y="80" width="40" height="40" fill="#224c79"/><rect x="360" y="80" width="40" height="40" fill="#23507f"/><rect x="400" y="80" width="40" height="40" fill="#255384"/><rect x="440" y="80" width="40" height="40" fill="#255485"/><rect x="480" y="80" width="40" height="40" fill="#245384"/><rect x="520" y="80" width="40" height="40" fill="#245383"/><rect x="560" y="80" width="40" height="40" fill="#235381"/><rect x="600" y="80" width="40" height="40" fill="#235381"/><rect x="640" y="80" width="40" height="40" fill="#225481"/><rect x="680" y="80" width="40" height="40" fill="#225481"/><rect x="720" y="80" width="40" height="40" fill="#225581"/><rect x="760" y="80" width="40" height="40" fill="#215682"/><rect x="-80" y="120" width="40" height="40" fill="#1e4b72"/><rect x="-40" y="120" width="40" height="40" fill="#1e4b73"/><rect x="0" y="120" width="40" height="40" fill="#1e4c74"/><rect x="40" y="120" width="40" height="40" fill="#1f4d75"/><rect x="80" y="120" width="40" height="40" fill="#1f4d75"/><rect x="120" y="120" width="40" height="40" fill="#1f4c75"/><rect x="160" y="120" width="40" height="40" fill="#204c75"/><rect x="200" y="120" width="40" height="40" fill="#204c76"/><rect x="240" y="120" width="40" height="40" fill="#214c77"/><rect x="280" y="120" width="40" height="40" fill="#214d78"/><rect x="320" y="120" width="40" height="40" fill="#224e7b"/><rect x="360" y="120" width="40" height="40" fill="#23507f"/><rect x="400" y="120" width="40" height="40" fill="#245283"/><rect x="440" y="120" width="40" height="40" fill="#245384"/><rect x="480" y="120" width="40" height="40" fill="#245383"/><rect x="520" y="120" width="40" height="40" fill="#235382"/><rect x="560" y="120" width="40" height="40" fill="#235381"/><rect x="600" y="120" width="40" height="40" fill="#225481"/><rect x="640" y="120" width="40" height="40" fill="#225481"/><rect x="680" y="120" width="40" height="40" fill="#225582"/><rect x="720" y="120" width="40" height="40" fill="#215682"/><rect x="760" y="120" width="40" height="40" fill="#215783"/><rect x="800" y="120" width="40" height="40" fill="#215783"/><rect x="-80" y="160" width="40" height="40" fill="#1f4f78"/><rect x="-40" y="160" width="40" height="40" fill="#1f507a"/><rect x="0" y="160" width="40" height="40" fill="#20527d"/><rect x="40" y="160" width="40" height="40" fill="#20537e"/><rect x="80" y="160" width="40" height="40" fill="#20527c"/><rect x="120" y="160" width="40" height="40" fill="#20507a"/><rect x="160" y="160" width="40" height="40" fill="#204e78"/><rect x="200" y="160" width="40" height="40" fill="#204e78"/><rect x="240" y="160" width="40" height="40" fill="#214d78"/><rect x="280" y="160" width="40" height="40" fill="#214e79"/><rect x="320" y="160" width="40" height="40" fill="#224f7b"/><rect x="360" y="160" width="40" height="40" fill="#23507e"/><rect x="400" y="160" width="40" height="40" fill="#235280"/><rect x="440" y="160" width="40" height="40" fill="#245282"/><rect x="480" y="160" width="40" height="40" fill="#235382"/><rect x="520" y="160" width="40" height="40" fill="#235382"/><rect x="560" y="160" width="40" height="40" fill="#235481"/><rect x="600" y="160" width="40" height="40" fill="#225482"/><rect x="640" y="160" width="40" height="40" fill="#225582"/><rect x="680" y="160" width="40" height="40" fill="#225683"/><rect x="720" y="160" width="40" height="40" fill="#215783"/><rect x="760" y="160" width="40" height="40" fill="#215883"/><rect x="800" y="160" width="40" height="40" fill="#215884"/><rect x="840" y="160" width="40" height="40" fill="#215884"/><rect x="-80" y="200" width="40" height="40" fill="#20517c"/><rect x="-40" y="200" width="40" height="40" fill="#20547f"/><rect x="0" y="200" width="40" height="40" fill="#215783"/><rect x="40" y="200" width="40" height="40" fill="#215885"/><rect x="80" y="200" width="40" height="40" fill="#215783"/><rect x="120" y="200" width="40" height="40" fill="#20537e"/><rect x="160" y="200" width="40" height="40" fill="#20517b"/><rect x="200" y="200" width="40" height="40" fill="#204f7a"/><rect x="240" y="200" width="40" height="40" fill="#214f7a"/><rect x="280" y="200" width="40" height="40" fill="#214f7a"/><rect x="320" y="200" width="40" height="40" fill="#22507c"/><rect x="360" y="200" width="40" height="40" fill="#22507e"/><rect x="400" y="200" width="40" height="40" fill="#23517f"/><rect x="440" y="200" width="40" height="40" fill="#235280"/><rect x="480" y="200" width="40" height="40" fill="#235381"/><rect x="520" y="200" width="40" height="40" fill="#225381"/><rect x="560" y="200" width="40" height="40" fill="#225481"/><rect x="600" y="200" width="40" height="40" fill="#225582"/><rect x="640" y="200" width="40" height="40" fill="#225683"/><rect x="680" y="200" width="40" height="40" fill="#215884"/><rect x="720" y="200" width="40" height="40" fill="#215884"/><rect x="760" y="200" width="40" height="40" fill="#215985"/><rect x="800" y="200" width="40" height="40" fill="#215985"/><rect x="840" y="200" width="40" height="40" fill="#215985"/><rect x="880" y="200" width="40" height="40" fill="#215a85"/><rect x="-80" y="240" width="40" height="40" fill="#20537e"/><rect x="-40" y="240" width="40" height="40" fill="#205681"/><rect x="0" y="240" width="40" height="40" fill="#215885"/><rect x="40" y="240" width="40" height="40" fill="#215a86"/><rect x="80" y="240" width="40" height="40" fill="#215885"/><rect x="120" y="240" width="40" height="40" fill="#205581"/><rect x="160" y="240" width="40" height="40" fill="#20527d"/><rect x="200" y="240" width="40" height="40" fill="#20517c"/><rect x="240" y="240" width="40" height="40" fill="#21507b"/><rect x="280" y="240" width="40" height="40" fill="#21507b"/><rect x="320" y="240" width="40" height="40" fill="#21507c"/><rect x="360" y="240" width="40" height="40" fill="#22517d"/><rect x="400" y="240" width="40" height="40" fill="#22527f"/><rect x="440" y="240" width="40" height="40" fill="#225280"/><rect x="480" y="240" width="40" height="40" fill="#225380"/><rect x="520" y="240" width="40" height="40" fill="#225481"/><rect x="560" y="240" width="40" height="40" fill="#225582"/><rect x="600" y="240" width="40" height="40" fill="#215783"/><rect x="640" y="240" width="40" height="40" fill="#215884"/><rect x="680" y="240" width="40" height="40" fill="#215985"/><rect x="720" y="240" width="40" height="40" fill="#215a86"/><rect x="760" y="240" width="40" height="40" fill="#215a86"/><rect x="800" y="240" width="40" height="40" fill="#215b86"/><rect x="840" y="240" width="40" height="40" fill="#215b86"/><rect x="880" y="240" width="40" height="40" fill="#215a86"/><rect x="920" y="240" width="40" height="40" fill="#215a86"/><rect x="-80" y="280" width="40" height="40" fill="#20547e"/><rect x="-40" y="280" width="40" height="40" fill="#205581"/><rect x="0" y="280" width="40" height="40" fill="#215783"/><rect x="40" y="280" width="40" height="40" fill="#215884"/><rect x="80" y="280" width="40" height="40" fill="#215783"/><rect x="120" y="280" width="40" height="40" fill="#215581"/><rect x="160" y="280" width="40" height="40" fill="#20537e"/><rect x="200" y="280" width="40" height="40" fill="#20527d"/><rect x="240" y="280" width="40" height="40" fill="#21517c"/><rect x="280" y="280" width="40" height="40" fill="#21517c"/><rect x="320" y="280" width="40" height="40" fill="#21517d"/><rect x="360" y="280" width="40" height="40" fill="#21517d"/><rect x="400" y="280" width="40" height="40" fill="#22527e"/><rect x="440" y="280" width="40" height="40" fill="#22537f"/><rect x="480" y="280" width="40" height="40" fill="#225480"/><rect x="520" y="280" width="40" height="40" fill="#225581"/><rect x="560" y="280" width="40" height="40" fill="#215682"/><rect x="600" y="280" width="40" height="40" fill="#215884"/><rect x="640" y="280" width="40" height="40" fill="#215985"/><rect x="680" y="280" width="40" height="40" fill="#215b86"/><rect x="720" y="280" width="40" height="40" fill="#215b87"/><rect x="760" y="280" width="40" height="40" fill="#215c87"/><rect x="800" y="280" width="40" height="40" fill="#215c87"/><rect x="840" y="280" width="40" height="40" fill="#215b87"/><rect x="880" y="280" width="40" height="40" fill="#215b87"/><rect x="920" y="280" width="40" height="40" fill="#215b86"/><rect x="960" y="280" width="40" height="40" fill="#215b86"/><rect x="-80" y="320" width="40" height="40" fill="#20537e"/><rect x="-40" y="320" width="40" height="40" fill="#205580"/><rect x="0" y="320" width="40" height="40" fill="#205682"/><rect x="40" y="320" width="40" height="40" fill="#215682"/><rect x="80" y="320" width="40" height="40" fill="#215681"/><rect x="120" y="320" width="40" height="40" fill="#205480"/><rect x="160" y="320" width="40" height="40" fill="#20537e"/><rect x="200" y="320" width="40" height="40" fill="#20527d"/><rect x="240" y="320" width="40" height="40" fill="#21517d"/><rect x="280" y="320" width="40" height="40" fill="#21517d"/><rect x="320" y="320" width="40" height="40" fill="#21527d"/><rect x="360" y="320" width="40" height="40" fill="#21527e"/><rect x="400" y="320" width="40" height="40" fill="#21537f"/><rect x="440" y="320" width="40" height="40" fill="#21547f"/><rect x="480" y="320" width="40" height="40" fill="#215580"/><rect x="520" y="320" width="40" height="40" fill="#215682"/><rect x="560" y="320" width="40" height="40" fill="#215783"/><rect x="600" y="320" width="40" height="40" fill="#215984"/><rect x="640" y="320" width="40" height="40" fill="#215b86"/><rect x="680" y="320" width="40" height="40" fill="#215c87"/><rect x="720" y="320" width="40" height="40" fill="#215d88"/><rect x="760" y="320" width="40" height="40" fill="#215d89"/><rect x="800" y="320" width="40" height="40" fill="#215d88"/><rect x="840" y="320" width="40" height="40" fill="#215c88"/><rect x="880" y="320" width="40" height="40" fill="#215c87"/><rect x="920" y="320" width="40" height="40" fill="#215c87"/><rect x="960" y="320" width="40" height="40" fill="#215b87"/><rect x="1000" y="320" width="40" height="40" fill="#215b87"/><rect x="-40" y="360" width="40" height="40" fill="#20547f"/><rect x="0" y="360" width="40" height="40" fill="#205580"/><rect x="40" y="360" width="40" height="40" fill="#205580"/><rect x="80" y="360" width="40" height="40" fill="#205480"/><rect x="120" y="360" width="40" height="40" fill="#20547f"/><rect x="160" y="360" width="40" height="40" fill="#20537e"/><rect x="200" y="360" width="40" height="40" fill="#20527d"/><rect x="240" y="360" width="40" height="40" fill="#21527d"/><rect x="280" y="360" width="40" height="40" fill="#21527d"/><rect x="320" y="360" width="40" height="40" fill="#21527d"/><rect x="360" y="360" width="40" height="40" fill="#21537e"/><rect x="400" y="360" width="40" height="40" fill="#21537f"/><rect x="440" y="360" width="40" height="40" fill="#215480"/><rect x="480" y="360" width="40" height="40" fill="#215581"/><rect x="520" y="360" width="40" height="40" fill="#215782"/><rect x="560" y="360" width="40" height="40" fill="#215883"/><rect x="600" y="360" width="40" height="40" fill="#215a85"/><rect x="640" y="360" width="40" height="40" fill="#215b87"/><rect x="680" y="360" width="40" height="40" fill="#215d88"/><rect x="720" y="360" width="40" height="40" fill="#215e89"/><rect x="760" y="360" width="40" height="40" fill="#215e8a"/><rect x="800" y="360" width="40" height="40" fill="#215d89"/><rect x="840" y="360" width="40" height="40" fill="#215d88"/><rect x="880" y="360" width="40" height="40" fill="#215c88"/><rect x="920" y="360" width="40" height="40" fill="#215c87"/><rect x="960" y="360" width="40" height="40" fill="#215c87"/><rect x="1000" y="360" width="40" height="40" fill="#215c87"/><rect x="1040" y="360" width="40" height="40" fill="#215c87"/><rect x="40" y="400" width="40" height="40" fill="#20547f"/><rect x="80" y="400" width="40" height="40" fill="#20547f"/><rect x="120" y="400" width="40" height="40" fill="#20537e"/><rect x="160" y="400" width="40" height="40" fill="#20537e"/><rect x="200" y="400" width="40" height="40" fill="#20537d"/><rect x="240" y="400" width="40" height="40" fill="#21527d"/><rect x="280" y="400" width="40" height="40" fill="#21537d"/><rect x="320" y="400" width="40" height="40" fill="#21537e"/><rect x="360" y="400" width="40" height="40" fill="#21537e"/><rect x="400" y="400" width="40" height="40" fill="#21547f"/><rect x="440" y="400" width="40" height="40" fill="#215580"/><rect x="480" y="400" width="40" height="40" fill="#215681"/><rect x="520" y="400" width="40" height="40" fill="#215782"/><rect x="560" y="400" width="40" height="40" fill="#215983"/><rect x="600" y="400" width="40" height="40" fill="#215a85"/><rect x="640" y="400" width="40" height="40" fill="#215c87"/><rect x="680" y="400" width="40" height="40" fill="#215d88"/><rect x="720" y="400" width="40" height="40" fill="#215e8a"/><rect x="760" y="400" width="40" height="40" fill="#215e8a"/><rect x="800" y="400" width="40" height="40" fill="#215d89"/><rect x="840" y="400" width="40" height="40" fill="#215d88"/><rect x="880" y="400" width="40" height="40" fill="#215d88"/><rect x="920" y="400" width="40" height="40" fill="#215d88"/><rect x="960" y="400" width="40" height="40" fill="#215d88"/><rect x="1000" y="400" width="40" height="40" fill="#215d88"/><rect x="1040" y="400" width="40" height="40" fill="#215d88"/><rect x="1080" y="400" width="40" height="40" fill="#215d88"/><rect x="80" y="440" width="40" height="40" fill="#20537e"/><rect x="120" y="440" width="40" height="40" fill="#20537e"/><rect x="160" y="440" width="40" height="40" fill="#20537e"/><rect x="200" y="440" width="40" height="40" fill="#20537d"/><rect x="240" y="440" width="40" height="40" fill="#20537d"/><rect x="280" y="440" width="40" height="40" fill="#20537e"/><rect x="320" y="440" width="40" height="40" fill="#21537e"/><rect x="360" y="440" width="40" height="40" fill="#21547f"/><rect x="400" y="440" width="40" height="40" fill="#21557f"/><rect x="440" y="440" width="40" height="40" fill="#215680"/><rect x="480" y="440" width="40" height="40" fill="#205781"/><rect x="520" y="440" width="40" height="40" fill="#205882"/><rect x="560" y="440" width="40" height="40" fill="#205983"/><rect x="600" y="440" width="40" height="40" fill="#205a85"/><rect x="640" y="440" width="40" height="40" fill="#205c86"/><rect x="680" y="440" width="40" height="40" fill="#215d88"/><rect x="720" y="440" width="40" height="40" fill="#215d89"/><rect x="760" y="440" width="40" height="40" fill="#215d89"/><rect x="800" y="440" width="40" height="40" fill="#215d89"/><rect x="840" y="440" width="40" height="40" fill="#215d88"/><rect x="880" y="440" width="40" height="40" fill="#215d88"/><rect x="920" y="440" width="40" height="40" fill="#215d88"/><rect x="960" y="440" width="40" height="40" fill="#215e89"/><rect x="1000" y="440" width="40" height="40" fill="#215e89"/><rect x="1040" y="440" width="40" height="40" fill="#215e8a"/><rect x="1080" y="440" width="40" height="40" fill="#215e89"/><rect x="1120" y="440" width="40" height="40" fill="#215d89"/><rect x="160" y="480" width="40" height="40" fill="#20537d"/><rect x="200" y="480" width="40" height="40" fill="#20537e"/><rect x="240" y="480" width="40" height="40" fill="#20537e"/><rect x="280" y="480" width="40" height="40" fill="#20537e"/><rect x="320" y="480" width="40" height="40" fill="#20547e"/><rect x="360" y="480" width="40" height="40" fill="#20557f"/><rect x="400" y="480" width="40" height="40" fill="#20557f"/><rect x="440" y="480" width="40" height="40" fill="#205680"/><rect x="480" y="480" width="40" height="40" fill="#205781"/><rect x="520" y="480" width="40" height="40" fill="#205882"/><rect x="560" y="480" width="40" height="40" fill="#205983"/><rect x="600" y="480" width="40" height="40" fill="#205a84"/><rect x="640" y="480" width="40" height="40" fill="#205b85"/><rect x="680" y="480" width="40" height="40" fill="#205c86"/><rect x="720" y="480" width="40" height="40" fill="#205d87"/><rect x="760" y="480" width="40" height="40" fill="#205d87"/><rect x="800" y="480" width="40" height="40" fill="#205d87"/><rect x="840" y="480" width="40" height="40" fill="#205d88"/><rect x="880" y="480" width="40" height="40" fill="#205e88"/><rect x="920" y="480" width="40" height="40" fill="#215e89"/><rect x="960" y="480" width="40" height="40" fill="#215f8a"/><rect x="1000" y="480" width="40" height="40" fill="#215f8b"/><rect x="1040" y="480" width="40" height="40" fill="#215f8b"/><rect x="1080" y="480" width="40" height="40" fill="#215f8b"/><rect x="1120" y="480" width="40" height="40" fill="#215e8a"/><rect x="1160" y="480" width="40" height="40" fill="#215d89"/><rect x="240" y="520" width="40" height="40" fill="#20547e"/><rect x="280" y="520" width="40" height="40" fill="#20547e"/><rect x="320" y="520" width="40" height="40" fill="#20547f"/><rect x="360" y="520" width="40" height="40" fill="#20557f"/><rect x="400" y="520" width="40" height="40" fill="#205680"/><rect x="440" y="520" width="40" height="40" fill="#205780"/><rect x="480" y="520" width="40" height="40" fill="#205881"/><rect x="520" y="520" width="40" height="40" fill="#205981"/><rect x="560" y="520" width="40" height="40" fill="#205982"/><rect x="600" y="520" width="40" height="40" fill="#205a83"/><rect x="640" y="520" width="40" height="40" fill="#1f5b83"/><rect x="680" y="520" width="40" height="40" fill="#1f5b84"/><rect x="720" y="520" width="40" height="40" fill="#1f5c84"/><rect x="760" y="520" width="40" height="40" fill="#205c85"/><rect x="800" y="520" width="40" height="40" fill="#205d86"/><rect x="840" y="520" width="40" height="40" fill="#205d87"/><rect x="880" y="520" width="40" height="40" fill="#205e89"/><rect x="920" y="520" width="40" height="40" fill="#215f8b"/><rect x="960" y="520" width="40" height="40" fill="#21608d"/><rect x="1000" y="520" width="40" height="40" fill="#21618e"/><rect x="1040" y="520" width="40" height="40" fill="#21608e"/><rect x="1080" y="520" width="40" height="40" fill="#21608d"/><rect x="1120" y="520" width="40" height="40" fill="#215f8c"/><rect x="1160" y="520" width="40" height="40" fill="#215e8a"/><rect x="1200" y="520" width="40" height="40" fill="#215d89"/><rect x="280" y="560" width="40" height="40" fill="#20547e"/><rect x="320" y="560" width="40" height="40" fill="#20557f"/><rect x="360" y="560" width="40" height="40" fill="#20567f"/><rect x="400" y="560" width="40" height="40" fill="#205680"/><rect x="440" y="560" width="40" height="40" fill="#205780"/><rect x="480" y="560" width="40" height="40" fill="#205881"/><rect x="520" y="560" width="40" height="40" fill="#205981"/><rect x="560" y="560" width="40" height="40" fill="#1f5981"/><rect x="600" y="560" width="40" height="40" fill="#1f5a81"/><rect x="640" y="560" width="40" height="40" fill="#1f5b81"/><rect x="680" y="560" width="40" height="40" fill="#1f5b81"/><rect x="720" y="560" width="40" height="40" fill="#1e5b81"/><rect x="760" y="560" width="40" height="40" fill="#1f5c82"/><rect x="800" y="560" width="40" height="40" fill="#1f5c84"/><rect x="840" y="560" width="40" height="40" fill="#205e86"/><rect x="880" y="560" width="40" height="40" fill="#205f8a"/><rect x="920" y="560" width="40" height="40" fill="#21618d"/><rect x="960" y="560" width="40" height="40" fill="#226290"/><rect x="1000" y="560" width="40" height="40" fill="#226391"/><rect x="1040" y="560" width="40" height="40" fill="#226290"/><rect x="1080" y="560" width="40" height="40" fill="#22618f"/><rect x="1120" y="560" width="40" height="40" fill="#22608d"/><rect x="1160" y="560" width="40" height="40" fill="#215f8b"/><rect x="1200" y="560" width="40" height="40" fill="#215e8a"/><rect x="1240" y="560" width="40" height="40" fill="#215c88"/><rect x="360" y="600" width="40" height="40" fill="#20567f"/><rect x="400" y="600" width="40" height="40" fill="#205780"/><rect x="440" y="600" width="40" height="40" fill="#205780"/><rect x="480" y="600" width="40" height="40" fill="#205880"/><rect x="520" y="600" width="40" height="40" fill="#1f5981"/><rect x="560" y="600" width="40" height="40" fill="#1f5a80"/><rect x="600" y="600" width="40" height="40" fill="#1f5a80"/><rect x="640" y="600" width="40" height="40" fill="#1e5a7f"/><rect x="680" y="600" width="40" height="40" fill="#1e5b7e"/><rect x="720" y="600" width="40" height="40" fill="#1d5b7e"/><rect x="760" y="600" width="40" height="40" fill="#1d5b7e"/><rect x="800" y="600" width="40" height="40" fill="#1e5c81"/><rect x="840" y="600" width="40" height="40" fill="#1f5e86"/><rect x="880" y="600" width="40" height="40" fill="#20608b"/><rect x="920" y="600" width="40" height="40" fill="#216390"/><rect x="960" y="600" width="40" height="40" fill="#226494"/><rect x="1000" y="600" width="40" height="40" fill="#226594"/><rect x="1040" y="600" width="40" height="40" fill="#226493"/><rect x="1080" y="600" width="40" height="40" fill="#226391"/><rect x="1120" y="600" width="40" height="40" fill="#22618f"/><rect x="1160" y="600" width="40" height="40" fill="#225f8c"/><rect x="1200" y="600" width="40" height="40" fill="#215e8a"/><rect x="1240" y="600" width="40" height="40" fill="#215c88"/><rect x="1280" y="600" width="40" height="40" fill="#215b86"/><rect x="440" y="640" width="40" height="40" fill="#205880"/><rect x="480" y="640" width="40" height="40" fill="#1f5880"/><rect x="520" y="640" width="40" height="40" fill="#1f5980"/><rect x="560" y="640" width="40" height="40" fill="#1f5a80"/><rect x="600" y="640" width="40" height="40" fill="#1e5a7f"/><rect x="640" y="640" width="40" height="40" fill="#1e5a7e"/><rect x="680" y="640" width="40" height="40" fill="#1d5a7c"/><rect x="720" y="640" width="40" height="40" fill="#1c5a7b"/><rect x="760" y="640" width="40" height="40" fill="#1c5a7c"/><rect x="800" y="640" width="40" height="40" fill="#1d5b7f"/><rect x="840" y="640" width="40" height="40" fill="#1f5e85"/><rect x="880" y="640" width="40" height="40" fill="#21618d"/><rect x="920" y="640" width="40" height="40" fill="#226594"/><rect x="960" y="640" width="40" height="40" fill="#236797"/><rect x="1000" y="640" width="40" height="40" fill="#236798"/><rect x="1040" y="640" width="40" height="40" fill="#226696"/><rect x="1080" y="640" width="40" height="40" fill="#226493"/><rect x="1120" y="640" width="40" height="40" fill="#226290"/><rect x="1160" y="640" width="40" height="40" fill="#22608d"/><rect x="1200" y="640" width="40" height="40" fill="#215e8a"/><rect x="1240" y="640" width="40" height="40" fill="#215c88"/><rect x="1280" y="640" width="40" height="40" fill="#215b86"/><rect x="1320" y="640" width="40" height="40" fill="#215a84"/><rect x="480" y="680" width="40" height="40" fill="#1f5980"/><rect x="520" y="680" width="40" height="40" fill="#1f5980"/><rect x="560" y="680" width="40" height="40" fill="#1e5a80"/><rect x="600" y="680" width="40" height="40" fill="#1e5a7f"/><rect x="640" y="680" width="40" height="40" fill="#1d5a7d"/><rect x="680" y="680" width="40" height="40" fill="#1d5a7c"/><rect x="720" y="680" width="40" height="40" fill="#1c5a7b"/><rect x="760" y="680" width="40" height="40" fill="#1c5a7b"/><rect x="800" y="680" width="40" height="40" fill="#1d5b7e"/><rect x="840" y="680" width="40" height="40" fill="#1f5e85"/><rect x="880" y="680" width="40" height="40" fill="#21628d"/><rect x="920" y="680" width="40" height="40" fill="#226595"/><rect x="960" y="680" width="40" height="40" fill="#236899"/><rect x="1000" y="680" width="40" height="40" fill="#236899"/><rect x="1040" y="680" width="40" height="40" fill="#236697"/><rect x="1080" y="680" width="40" height="40" fill="#226493"/><rect x="1120" y="680" width="40" height="40" fill="#226290"/><rect x="1160" y="680" width="40" height="40" fill="#22608c"/><rect x="1200" y="680" width="40" height="40" fill="#225e8a"/><rect x="1240" y="680" width="40" height="40" fill="#215c87"/><rect x="1280" y="680" width="40" height="40" fill="#215a85"/><rect x="1320" y="680" width="40" height="40" fill="#215983"/><rect x="1360" y="680" width="40" height="40" fill="#215882"/><rect x="560" y="720" width="40" height="40" fill="#1e5a7f"/><rect x="600" y="720" width="40" height="40" fill="#1e5a7f"/><rect x="640" y="720" width="40" height="40" fill="#1d5a7e"/><rect x="680" y="720" width="40" height="40" fill="#1d5a7d"/><rect x="720" y="720" width="40" height="40" fill="#1d5a7c"/><rect x="760" y="720" width="40" height="40" fill="#1d5b7c"/><rect x="800" y="720" width="40" height="40" fill="#1e5c7f"/><rect x="840" y="720" width="40" height="40" fill="#1f5e85"/><rect x="880" y="720" width="40" height="40" fill="#21618d"/><rect x="920" y="720" width="40" height="40" fill="#226594"/><rect x="960" y="720" width="40" height="40" fill="#236798"/><rect x="1000" y="720" width="40" height="40" fill="#236798"/><rect x="1040" y="720" width="40" height="40" fill="#226596"/><rect x="1080" y="720" width="40" height="40" fill="#226392"/><rect x="1120" y="720" width="40" height="40" fill="#22618f"/><rect x="1160" y="720" width="40" height="40" fill="#225f8b"/><rect x="1200" y="720" width="40" height="40" fill="#225d89"/><rect x="1240" y="720" width="40" height="40" fill="#215b86"/><rect x="1280" y="720" width="40" height="40" fill="#215a84"/><rect x="1320" y="720" width="40" height="40" fill="#215982"/><rect x="1360" y="720" width="40" height="40" fill="#215781"/><rect x="1400" y="720" width="40" height="40" fill="#21567f"/><rect x="640" y="760" width="40" height="40" fill="#1e5a7f"/><rect x="680" y="760" width="40" height="40" fill="#1d5b7e"/><rect x="720" y="760" width="40" height="40" fill="#1d5b7e"/><rect x="760" y="760" width="40" height="40" fill="#1d5b7f"/><rect x="800" y="760" width="40" height="40" fill="#1e5c81"/><rect x="840" y="760" width="40" height="40" fill="#1f5e86"/><rect x="880" y="760" width="40" height="40" fill="#21618c"/><rect x="920" y="760" width="40" height="40" fill="#226391"/><rect x="960" y="760" width="40" height="40" fill="#226594"/><rect x="1000" y="760" width="40" height="40" fill="#226594"/><rect x="1040" y="760" width="40" height="40" fill="#226493"/><rect x="1080" y="760" width="40" height="40" fill="#226290"/><rect x="1120" y="760" width="40" height="40" fill="#22608d"/><rect x="1160" y="760" width="40" height="40" fill="#225e8a"/><rect x="1200" y="760" width="40" height="40" fill="#225c87"/><rect x="1240" y="760" width="40" height="40" fill="#225b85"/><rect x="1280" y="760" width="40" height="40" fill="#215983"/><rect x="1320" y="760" width="40" height="40" fill="#215881"/><rect x="1360" y="760" width="40" height="40" fill="#215780"/><rect x="1400" y="760" width="40" height="40" fill="#20557e"/><rect x="1440" y="760" width="40" height="40" fill="#20547d"/><rect x="680" y="800" width="40" height="40" fill="#1e5b7f"/><rect x="720" y="800" width="40" height="40" fill="#1e5b80"/><rect x="760" y="800" width="40" height="40" fill="#1e5c81"/><rect x="800" y="800" width="40" height="40" fill="#1f5d83"/><rect x="840" y="800" width="40" height="40" fill="#205e86"/><rect x="880" y="800" width="40" height="40" fill="#20608a"/><rect x="920" y="800" width="40" height="40" fill="#21618e"/><rect x="960" y="800" width="40" height="40" fill="#226290"/><rect x="1000" y="800" width="40" height="40" fill="#226290"/><rect x="1040" y="800" width="40" height="40" fill="#22628f"/><rect x="1080" y="800" width="40" height="40" fill="#22608d"/><rect x="1120" y="800" width="40" height="40" fill="#225f8b"/><rect x="1160" y="800" width="40" height="40" fill="#225d88"/><rect x="1200" y="800" width="40" height="40" fill="#225b85"/><rect x="1240" y="800" width="40" height="40" fill="#225a83"/><rect x="1280" y="800" width="40" height="40" fill="#225982"/><rect x="1320" y="800" width="40" height="40" fill="#215780"/><rect x="1360" y="800" width="40" height="40" fill="#21567f"/><rect x="1400" y="800" width="40" height="40" fill="#20547d"/><rect x="1440" y="800" width="40" height="40" fill="#20537c"/><rect x="1480" y="800" width="40" height="40" fill="#20527b"/><rect x="760" y="840" width="40" height="40" fill="#1f5c82"/><rect x="800" y="840" width="40" height="40" fill="#1f5d84"/><rect x="840" y="840" width="40" height="40" fill="#205e86"/><rect x="880" y="840" width="40" height="40" fill="#205f89"/><rect x="920" y="840" width="40" height="40" fill="#21608b"/><rect x="960" y="840" width="40" height="40" fill="#21608d"/><rect x="1000" y="840" width="40" height="40" fill="#22608d"/><rect x="1040" y="840" width="40" height="40" fill="#22608c"/><rect x="1080" y="840" width="40" height="40" fill="#225f8a"/><rect x="1120" y="840" width="40" height="40" fill="#225d88"/><rect x="1160" y="840" width="40" height="40" fill="#225c86"/><rect x="1200" y="840" width="40" height="40" fill="#225b84"/><rect x="1240" y="840" width="40" height="40" fill="#225982"/><rect x="1280" y="840" width="40" height="40" fill="#225881"/><rect x="1320" y="840" width="40" height="40" fill="#22577f"/><rect x="1360" y="840" width="40" height="40" fill="#21557e"/><rect x="1400" y="840" width="40" height="40" fill="#20537c"/><rect x="1440" y="840" width="40" height="40" fill="#20527a"/><rect x="1480" y="840" width="40" height="40" fill="#1f5079"/><rect x="1520" y="840" width="40" height="40" fill="#1f5078"/><rect x="840" y="880" width="40" height="40" fill="#205d86"/><rect x="880" y="880" width="40" height="40" fill="#205e88"/><rect x="920" y="880" width="40" height="40" fill="#215e89"/><rect x="960" y="880" width="40" height="40" fill="#215f8a"/><rect x="1000" y="880" width="40" height="40" fill="#215f8a"/><rect x="1040" y="880" width="40" height="40" fill="#225e89"/><rect x="1080" y="880" width="40" height="40" fill="#225d88"/><rect x="1120" y="880" width="40" height="40" fill="#225c86"/><rect x="1160" y="880" width="40" height="40" fill="#225b84"/><rect x="1200" y="880" width="40" height="40" fill="#225a83"/><rect x="1240" y="880" width="40" height="40" fill="#235982"/><rect x="1280" y="880" width="40" height="40" fill="#225981"/><rect x="1320" y="880" width="40" height="40" fill="#22577f"/><rect x="1360" y="880" width="40" height="40" fill="#21557d"/><rect x="1400" y="880" width="40" height="40" fill="#20527a"/><rect x="1440" y="880" width="40" height="40" fill="#1f5078"/><rect x="1480" y="880" width="40" height="40" fill="#1f4f77"/><rect x="1520" y="880" width="40" height="40" fill="#1e4e76"/><rect x="1560" y="880" width="40" height="40" fill="#1e4e77"/><rect x="920" y="920" width="40" height="40" fill="#215d88"/><rect x="960" y="920" width="40" height="40" fill="#215d88"/><rect x="1000" y="920" width="40" height="40" fill="#215d88"/><rect x="1040" y="920" width="40" height="40" fill="#225d87"/><rect x="1080" y="920" width="40" height="40" fill="#225c86"/><rect x="1120" y="920" width="40" height="40" fill="#225b84"/><rect x="1160" y="920" width="40" height="40" fill="#225a83"/><rect x="1200" y="920" width="40" height="40" fill="#235a82"/><rect x="1240" y="920" width="40" height="40" fill="#235a81"/><rect x="1280" y="920" width="40" height="40" fill="#235a81"/><rect x="1320" y="920" width="40" height="40" fill="#235880"/><rect x="1360" y="920" width="40" height="40" fill="#21557d"/><rect x="1400" y="920" width="40" height="40" fill="#205179"/><rect x="1440" y="920" width="40" height="40" fill="#1e4e76"/><rect x="1480" y="920" width="40" height="40" fill="#1e4c74"/><rect x="1520" y="920" width="40" height="40" fill="#1e4c74"/><rect x="1560" y="920" width="40" height="40" fill="#1e4d75"/><rect x="1600" y="920" width="40" height="40" fill="#1e4e76"/><rect x="960" y="960" width="40" height="40" fill="#215c86"/><rect x="1000" y="960" width="40" height="40" fill="#215c86"/><rect x="1040" y="960" width="40" height="40" fill="#225c85"/><rect x="1080" y="960" width="40" height="40" fill="#225b84"/><rect x="1120" y="960" width="40" height="40" fill="#225a83"/><rect x="1160" y="960" width="40" height="40" fill="#235a82"/><rect x="1200" y="960" width="40" height="40" fill="#235a82"/><rect x="1240" y="960" width="40" height="40" fill="#245a82"/><rect x="1280" y="960" width="40" height="40" fill="#245b82"/><rect x="1320" y="960" width="40" height="40" fill="#235981"/><rect x="1360" y="960" width="40" height="40" fill="#22567d"/><rect x="1400" y="960" width="40" height="40" fill="#1f5078"/><rect x="1440" y="960" width="40" height="40" fill="#1e4c74"/><rect x="1480" y="960" width="40" height="40" fill="#1d4b73"/><rect x="1520" y="960" width="40" height="40" fill="#1d4b73"/><rect x="1560" y="960" width="40" height="40" fill="#1e4c74"/><rect x="1600" y="960" width="40" height="40" fill="#1e4d76"/><rect x="1640" y="960" width="40" height="40" fill="#1e4f77"/><rect x="1040" y="1000" width="40" height="40" fill="#225b84"/><rect x="1080" y="1000" width="40" height="40" fill="#225a83"/><rect x="1120" y="1000" width="40" height="40" fill="#225a82"/><rect x="1160" y="1000" width="40" height="40" fill="#235a82"/><rect x="1200" y="1000" width="40" height="40" fill="#235a82"/><rect x="1240" y="1000" width="40" height="40" fill="#245b82"/><rect x="1280" y="1000" width="40" height="40" fill="#245b82"/><rect x="1320" y="1000" width="40" height="40" fill="#235a81"/><rect x="1360" y="1000" width="40" height="40" fill="#22567d"/><rect x="1400" y="1000" width="40" height="40" fill="#1f5078"/><rect x="1440" y="1000" width="40" height="40" fill="#1e4c74"/><rect x="1480" y="1000" width="40" height="40" fill="#1d4a72"/><rect x="1520" y="1000" width="40" height="40" fill="#1d4b73"/><rect x="1560" y="1000" width="40" height="40" fill="#1e4c74"/><rect x="1600" y="1000" width="40" height="40" fill="#1e4d75"/><rect x="1640" y="1000" width="40" height="40" fill="#1e4e77"/><rect x="1680" y="1000" width="40" height="40" fill="#1f4f78"/><rect x="1120" y="1040" width="40" height="40" fill="#225a82"/><rect x="1160" y="1040" width="40" height="40" fill="#235a81"/><rect x="1200" y="1040" width="40" height="40" fill="#235a81"/><rect x="1240" y="1040" width="40" height="40" fill="#235a81"/><rect x="1280" y="1040" width="40" height="40" fill="#235a81"/><rect x="1320" y="1040" width="40" height="40" fill="#235980"/><rect x="1360" y="1040" width="40" height="40" fill="#22557d"/><rect x="1400" y="1040" width="40" height="40" fill="#205178"/><rect x="1440" y="1040" width="40" height="40" fill="#1e4d75"/><rect x="1480" y="1040" width="40" height="40" fill="#1e4b73"/><rect x="1520" y="1040" width="40" height="40" fill="#1e4c74"/><rect x="1560" y="1040" width="40" height="40" fill="#1e4d75"/><rect x="1600" y="1040" width="40" height="40" fill="#1e4e76"/><rect x="1640" y="1040" width="40" height="40" fill="#1e4f77"/><rect x="1680" y="1040" width="40" height="40" fill="#1f4f78"/><rect x="1720" y="1040" width="40" height="40" fill="#1f5079"/><rect x="1160" y="1080" width="40" height="40" fill="#225981"/><rect x="1200" y="1080" width="40" height="40" fill="#235981"/><rect x="1240" y="1080" width="40" height="40" fill="#235981"/><rect x="1280" y="1080" width="40" height="40" fill="#235980"/><rect x="1320" y="1080" width="40" height="40" fill="#22587f"/><rect x="1360" y="1080" width="40" height="40" fill="#21557d"/><rect x="1400" y="1080" width="40" height="40" fill="#205179"/><rect x="1440" y="1080" width="40" height="40" fill="#1f4f77"/><rect x="1480" y="1080" width="40" height="40" fill="#1e4d75"/><rect x="1520" y="1080" width="40" height="40" fill="#1e4d75"/><rect x="1560" y="1080" width="40" height="40" fill="#1e4e76"/><rect x="1600" y="1080" width="40" height="40" fill="#1e4e76"/><rect x="1640" y="1080" width="40" height="40" fill="#1f4f77"/><rect x="1680" y="1080" width="40" height="40" fill="#1f5078"/><rect x="1720" y="1080" width="40" height="40" fill="#1f5079"/><rect x="1760" y="1080" width="40" height="40" fill="#1f517a"/><rect x="1240" y="1120" width="40" height="40" fill="#225880"/><rect x="1280" y="1120" width="40" height="40" fill="#22587f"/><rect x="1320" y="1120" width="40" height="40" fill="#22567e"/><rect x="1360" y="1120" width="40" height="40" fill="#21557c"/><rect x="1400" y="1120" width="40" height="40" fill="#20527a"/><rect x="1440" y="1120" width="40" height="40" fill="#1f5078"/><rect x="1480" y="1120" width="40" height="40" fill="#1f4f77"/><rect x="1520" y="1120" width="40" height="40" fill="#1f4f77"/><rect x="1560" y="1120" width="40" height="40" fill="#1f4f77"/><rect x="1600" y="1120" width="40" height="40" fill="#1f4f77"/><rect x="1640" y="1120" width="40" height="40" fill="#1f5078"/><rect x="1680" y="1120" width="40" height="40" fill="#1f5079"/><rect x="1720" y="1120" width="40" height="40" fill="#1f5179"/><rect x="1760" y="1120" width="40" height="40" fill="#1f517a"/><rect x="1800" y="1120" width="40" height="40" fill="#1f527a"/><rect x="1320" y="1160" width="40" height="40" fill="#21567e"/><rect x="1360" y="1160" width="40" height="40" fill="#21547c"/><rect x="1400" y="1160" width="40" height="40" fill="#20537b"/><rect x="1440" y="1160" width="40" height="40" fill="#205179"/><rect x="1480" y="1160" width="40" height="40" fill="#1f5079"/><rect x="1520" y="1160" width="40" height="40" fill="#1f5078"/><rect x="1560" y="1160" width="40" height="40" fill="#1f5078"/><rect x="1600" y="1160" width="40" height="40" fill="#1f5078"/><rect x="1640" y="1160" width="40" height="40" fill="#1f5079"/><rect x="1680" y="1160" width="40" height="40" fill="#1f5179"/><rect x="1720" y="1160" width="40" height="40" fill="#1f517a"/><rect x="1760" y="1160" width="40" height="40" fill="#1f527a"/><rect x="1800" y="1160" width="40" height="40" fill="#1f527b"/><rect x="1840" y="1160" width="40" height="40" fill="#20527b"/></g></g><g clip-path="url(#cb2)"><g filter="url(#wb)"><rect x="-80" y="80" width="40" height="40" fill="#1d5678"/><rect x="-80" y="120" width="40" height="40" fill="#1d5678"/><rect x="-40" y="120" width="40" height="40" fill="#1e5678"/><rect x="0" y="120" width="40" height="40" fill="#1e5678"/><rect x="-80" y="160" width="40" height="40" fill="#1d5577"/><rect x="-40" y="160" width="40" height="40" fill="#1e5578"/><rect x="0" y="160" width="40" height="40" fill="#1e5578"/><rect x="40" y="160" width="40" height="40" fill="#1e5578"/><rect x="-80" y="200" width="40" height="40" fill="#1d5477"/><rect x="-40" y="200" width="40" height="40" fill="#1e5477"/><rect x="0" y="200" width="40" height="40" fill="#1e5477"/><rect x="40" y="200" width="40" height="40" fill="#1e5477"/><rect x="80" y="200" width="40" height="40" fill="#1e5577"/><rect x="120" y="200" width="40" height="40" fill="#1e5578"/><rect x="-80" y="240" width="40" height="40" fill="#1d5477"/><rect x="-40" y="240" width="40" height="40" fill="#1e5377"/><rect x="0" y="240" width="40" height="40" fill="#1e5377"/><rect x="40" y="240" width="40" height="40" fill="#1e5377"/><rect x="80" y="240" width="40" height="40" fill="#1e5477"/><rect x="120" y="240" width="40" height="40" fill="#1e5577"/><rect x="160" y="240" width="40" height="40" fill="#1e5578"/><rect x="200" y="240" width="40" height="40" fill="#1e5678"/><rect x="-80" y="280" width="40" height="40" fill="#1e5377"/><rect x="-40" y="280" width="40" height="40" fill="#1e5277"/><rect x="0" y="280" width="40" height="40" fill="#1e5277"/><rect x="40" y="280" width="40" height="40" fill="#1e5277"/><rect x="80" y="280" width="40" height="40" fill="#1e5377"/><rect x="120" y="280" width="40" height="40" fill="#1e5377"/><rect x="160" y="280" width="40" height="40" fill="#1e5577"/><rect x="200" y="280" width="40" height="40" fill="#1e5678"/><rect x="240" y="280" width="40" height="40" fill="#1e5778"/><rect x="280" y="280" width="40" height="40" fill="#1e5879"/><rect x="-80" y="320" width="40" height="40" fill="#1e5277"/><rect x="-40" y="320" width="40" height="40" fill="#1e5176"/><rect x="0" y="320" width="40" height="40" fill="#1e5176"/><rect x="40" y="320" width="40" height="40" fill="#1e5176"/><rect x="80" y="320" width="40" height="40" fill="#1e5177"/><rect x="120" y="320" width="40" height="40" fill="#1e5277"/><rect x="160" y="320" width="40" height="40" fill="#1e5477"/><rect x="200" y="320" width="40" height="40" fill="#1e5578"/><rect x="240" y="320" width="40" height="40" fill="#1e5778"/><rect x="280" y="320" width="40" height="40" fill="#1e5878"/><rect x="320" y="320" width="40" height="40" fill="#1e5979"/><rect x="-80" y="360" width="40" height="40" fill="#1e5176"/><rect x="-40" y="360" width="40" height="40" fill="#1e5076"/><rect x="0" y="360" width="40" height="40" fill="#1e4f76"/><rect x="40" y="360" width="40" height="40" fill="#1e4f76"/><rect x="80" y="360" width="40" height="40" fill="#1e5076"/><rect x="120" y="360" width="40" height="40" fill="#1e5176"/><rect x="160" y="360" width="40" height="40" fill="#1e5377"/><rect x="200" y="360" width="40" height="40" fill="#1e5477"/><rect x="240" y="360" width="40" height="40" fill="#1e5678"/><rect x="280" y="360" width="40" height="40" fill="#1e5878"/><rect x="320" y="360" width="40" height="40" fill="#1e5979"/><rect x="360" y="360" width="40" height="40" fill="#1e5b79"/><rect x="400" y="360" width="40" height="40" fill="#1e5c7a"/><rect x="-80" y="400" width="40" height="40" fill="#1e5076"/><rect x="-40" y="400" width="40" height="40" fill="#1e4f76"/><rect x="0" y="400" width="40" height="40" fill="#1e4e76"/><rect x="40" y="400" width="40" height="40" fill="#1e4d76"/><rect x="80" y="400" width="40" height="40" fill="#1e4e76"/><rect x="120" y="400" width="40" height="40" fill="#1e5076"/><rect x="160" y="400" width="40" height="40" fill="#1e5277"/><rect x="200" y="400" width="40" height="40" fill="#1e5477"/><rect x="240" y="400" width="40" height="40" fill="#1e5678"/><rect x="280" y="400" width="40" height="40" fill="#1e5878"/><rect x="320" y="400" width="40" height="40" fill="#1e5a79"/><rect x="360" y="400" width="40" height="40" fill="#1e5b79"/><rect x="400" y="400" width="40" height="40" fill="#1e5c7a"/><rect x="440" y="400" width="40" height="40" fill="#1e5d7a"/><rect x="480" y="400" width="40" height="40" fill="#1f5e7b"/><rect x="-80" y="440" width="40" height="40" fill="#1e4f76"/><rect x="-40" y="440" width="40" height="40" fill="#1e4e76"/><rect x="0" y="440" width="40" height="40" fill="#1f4c75"/><rect x="40" y="440" width="40" height="40" fill="#1f4b75"/><rect x="80" y="440" width="40" height="40" fill="#1f4c75"/><rect x="120" y="440" width="40" height="40" fill="#1e4f76"/><rect x="160" y="440" width="40" height="40" fill="#1e5177"/><rect x="200" y="440" width="40" height="40" fill="#1e5477"/><rect x="240" y="440" width="40" height="40" fill="#1e5678"/><rect x="280" y="440" width="40" height="40" fill="#1e5878"/><rect x="320" y="440" width="40" height="40" fill="#1e5a79"/><rect x="360" y="440" width="40" height="40" fill="#1e5c7a"/><rect x="400" y="440" width="40" height="40" fill="#1e5d7a"/><rect x="440" y="440" width="40" height="40" fill="#1e5e7b"/><rect x="480" y="440" width="40" height="40" fill="#1f5f7b"/><rect x="520" y="440" width="40" height="40" fill="#1f607b"/><rect x="-80" y="480" width="40" height="40" fill="#1d4f76"/><rect x="-40" y="480" width="40" height="40" fill="#1e4e75"/><rect x="0" y="480" width="40" height="40" fill="#1f4b75"/><rect x="40" y="480" width="40" height="40" fill="#1f4a75"/><rect x="80" y="480" width="40" height="40" fill="#1f4c75"/><rect x="120" y="480" width="40" height="40" fill="#1e4e76"/><rect x="160" y="480" width="40" height="40" fill="#1e5277"/><rect x="200" y="480" width="40" height="40" fill="#1d5477"/><rect x="240" y="480" width="40" height="40" fill="#1d5778"/><rect x="280" y="480" width="40" height="40" fill="#1d5979"/><rect x="320" y="480" width="40" height="40" fill="#1e5b79"/><rect x="360" y="480" width="40" height="40" fill="#1e5c7a"/><rect x="400" y="480" width="40" height="40" fill="#1e5e7a"/><rect x="440" y="480" width="40" height="40" fill="#1e5f7b"/><rect x="480" y="480" width="40" height="40" fill="#1f607b"/><rect x="520" y="480" width="40" height="40" fill="#1f617c"/><rect x="560" y="480" width="40" height="40" fill="#1f617c"/><rect x="600" y="480" width="40" height="40" fill="#20627c"/><rect x="-80" y="520" width="40" height="40" fill="#1d5076"/><rect x="-40" y="520" width="40" height="40" fill="#1e4f75"/><rect x="0" y="520" width="40" height="40" fill="#1e4d75"/><rect x="40" y="520" width="40" height="40" fill="#1e4c75"/><rect x="80" y="520" width="40" height="40" fill="#1e4d75"/><rect x="120" y="520" width="40" height="40" fill="#1e5076"/><rect x="160" y="520" width="40" height="40" fill="#1d5377"/><rect x="200" y="520" width="40" height="40" fill="#1d5577"/><rect x="240" y="520" width="40" height="40" fill="#1d5878"/><rect x="280" y="520" width="40" height="40" fill="#1d5a79"/><rect x="320" y="520" width="40" height="40" fill="#1e5b79"/><rect x="360" y="520" width="40" height="40" fill="#1e5d7a"/><rect x="400" y="520" width="40" height="40" fill="#1e5e7a"/><rect x="440" y="520" width="40" height="40" fill="#1f5f7b"/><rect x="480" y="520" width="40" height="40" fill="#1f607b"/><rect x="520" y="520" width="40" height="40" fill="#1f617c"/><rect x="560" y="520" width="40" height="40" fill="#1f627c"/><rect x="600" y="520" width="40" height="40" fill="#20637d"/><rect x="640" y="520" width="40" height="40" fill="#20637d"/><rect x="680" y="520" width="40" height="40" fill="#20637d"/><rect x="-80" y="560" width="40" height="40" fill="#1c5176"/><rect x="-40" y="560" width="40" height="40" fill="#1d5075"/><rect x="0" y="560" width="40" height="40" fill="#1d4f75"/><rect x="40" y="560" width="40" height="40" fill="#1d4f75"/><rect x="80" y="560" width="40" height="40" fill="#1d5076"/><rect x="120" y="560" width="40" height="40" fill="#1d5276"/><rect x="160" y="560" width="40" height="40" fill="#1d5477"/><rect x="200" y="560" width="40" height="40" fill="#1d5778"/><rect x="240" y="560" width="40" height="40" fill="#1d5978"/><rect x="280" y="560" width="40" height="40" fill="#1d5b79"/><rect x="320" y="560" width="40" height="40" fill="#1d5c7a"/><rect x="360" y="560" width="40" height="40" fill="#1e5e7a"/><rect x="400" y="560" width="40" height="40" fill="#1e5f7b"/><rect x="440" y="560" width="40" height="40" fill="#1f607b"/><rect x="480" y="560" width="40" height="40" fill="#1f617c"/><rect x="520" y="560" width="40" height="40" fill="#1f627c"/><rect x="560" y="560" width="40" height="40" fill="#20637d"/><rect x="600" y="560" width="40" height="40" fill="#20637d"/><rect x="640" y="560" width="40" height="40" fill="#20647d"/><rect x="680" y="560" width="40" height="40" fill="#20647d"/><rect x="720" y="560" width="40" height="40" fill="#20647d"/><rect x="-80" y="600" width="40" height="40" fill="#1c5275"/><rect x="-40" y="600" width="40" height="40" fill="#1c5175"/><rect x="0" y="600" width="40" height="40" fill="#1c5075"/><rect x="40" y="600" width="40" height="40" fill="#1c5175"/><rect x="80" y="600" width="40" height="40" fill="#1c5276"/><rect x="120" y="600" width="40" height="40" fill="#1c5476"/><rect x="160" y="600" width="40" height="40" fill="#1c5677"/><rect x="200" y="600" width="40" height="40" fill="#1c5878"/><rect x="240" y="600" width="40" height="40" fill="#1d5a79"/><rect x="280" y="600" width="40" height="40" fill="#1d5c79"/><rect x="320" y="600" width="40" height="40" fill="#1d5d7a"/><rect x="360" y="600" width="40" height="40" fill="#1e5f7a"/><rect x="400" y="600" width="40" height="40" fill="#1e607b"/><rect x="440" y="600" width="40" height="40" fill="#1f617b"/><rect x="480" y="600" width="40" height="40" fill="#1f627c"/><rect x="520" y="600" width="40" height="40" fill="#20637c"/><rect x="560" y="600" width="40" height="40" fill="#20647d"/><rect x="600" y="600" width="40" height="40" fill="#20647d"/><rect x="640" y="600" width="40" height="40" fill="#20657d"/><rect x="680" y="600" width="40" height="40" fill="#20657e"/><rect x="720" y="600" width="40" height="40" fill="#21657e"/><rect x="760" y="600" width="40" height="40" fill="#21657e"/><rect x="800" y="600" width="40" height="40" fill="#21647e"/><rect x="-80" y="640" width="40" height="40" fill="#1b5275"/><rect x="-40" y="640" width="40" height="40" fill="#1b5174"/><rect x="0" y="640" width="40" height="40" fill="#1b4f74"/><rect x="40" y="640" width="40" height="40" fill="#1b5074"/><rect x="80" y="640" width="40" height="40" fill="#1b5376"/><rect x="120" y="640" width="40" height="40" fill="#1b5677"/><rect x="160" y="640" width="40" height="40" fill="#1c5878"/><rect x="200" y="640" width="40" height="40" fill="#1c5a78"/><rect x="240" y="640" width="40" height="40" fill="#1c5c79"/><rect x="280" y="640" width="40" height="40" fill="#1d5d7a"/><rect x="320" y="640" width="40" height="40" fill="#1d5f7a"/><rect x="360" y="640" width="40" height="40" fill="#1e607b"/><rect x="400" y="640" width="40" height="40" fill="#1e617b"/><rect x="440" y="640" width="40" height="40" fill="#1f627c"/><rect x="480" y="640" width="40" height="40" fill="#1f637c"/><rect x="520" y="640" width="40" height="40" fill="#20647d"/><rect x="560" y="640" width="40" height="40" fill="#20647d"/><rect x="600" y="640" width="40" height="40" fill="#20657e"/><rect x="640" y="640" width="40" height="40" fill="#21657e"/><rect x="680" y="640" width="40" height="40" fill="#21667e"/><rect x="720" y="640" width="40" height="40" fill="#21657e"/><rect x="760" y="640" width="40" height="40" fill="#21657e"/><rect x="800" y="640" width="40" height="40" fill="#21657e"/><rect x="840" y="640" width="40" height="40" fill="#21647e"/><rect x="880" y="640" width="40" height="40" fill="#21647d"/><rect x="-80" y="680" width="40" height="40" fill="#1b5375"/><rect x="-40" y="680" width="40" height="40" fill="#1b5174"/><rect x="0" y="680" width="40" height="40" fill="#1b4f74"/><rect x="40" y="680" width="40" height="40" fill="#1b5174"/><rect x="80" y="680" width="40" height="40" fill="#1b5576"/><rect x="120" y="680" width="40" height="40" fill="#1b5877"/><rect x="160" y="680" width="40" height="40" fill="#1b5a78"/><rect x="200" y="680" width="40" height="40" fill="#1c5c79"/><rect x="240" y="680" width="40" height="40" fill="#1c5d79"/><rect x="280" y="680" width="40" height="40" fill="#1d5e7a"/><rect x="320" y="680" width="40" height="40" fill="#1d607b"/><rect x="360" y="680" width="40" height="40" fill="#1e617b"/><rect x="400" y="680" width="40" height="40" fill="#1e627c"/><rect x="440" y="680" width="40" height="40" fill="#1f637c"/><rect x="480" y="680" width="40" height="40" fill="#1f647c"/><rect x="520" y="680" width="40" height="40" fill="#20647d"/><rect x="560" y="680" width="40" height="40" fill="#20657e"/><rect x="600" y="680" width="40" height="40" fill="#21667e"/><rect x="640" y="680" width="40" height="40" fill="#21667e"/><rect x="680" y="680" width="40" height="40" fill="#21667e"/><rect x="720" y="680" width="40" height="40" fill="#21667e"/><rect x="760" y="680" width="40" height="40" fill="#21667e"/><rect x="800" y="680" width="40" height="40" fill="#21657e"/><rect x="840" y="680" width="40" height="40" fill="#21657e"/><rect x="880" y="680" width="40" height="40" fill="#21647e"/><rect x="920" y="680" width="40" height="40" fill="#21637e"/><rect x="-80" y="720" width="40" height="40" fill="#1b5476"/><rect x="-40" y="720" width="40" height="40" fill="#1a5476"/><rect x="0" y="720" width="40" height="40" fill="#1a5476"/><rect x="40" y="720" width="40" height="40" fill="#195677"/><rect x="80" y="720" width="40" height="40" fill="#1a5877"/><rect x="120" y="720" width="40" height="40" fill="#1b5a78"/><rect x="160" y="720" width="40" height="40" fill="#1b5d79"/><rect x="200" y="720" width="40" height="40" fill="#1b5e79"/><rect x="240" y="720" width="40" height="40" fill="#1c5e7a"/><rect x="280" y="720" width="40" height="40" fill="#1d607a"/><rect x="320" y="720" width="40" height="40" fill="#1d617b"/><rect x="360" y="720" width="40" height="40" fill="#1e627c"/><rect x="400" y="720" width="40" height="40" fill="#1f637c"/><rect x="440" y="720" width="40" height="40" fill="#1f647c"/><rect x="480" y="720" width="40" height="40" fill="#1f647d"/><rect x="520" y="720" width="40" height="40" fill="#20657d"/><rect x="560" y="720" width="40" height="40" fill="#21667e"/><rect x="600" y="720" width="40" height="40" fill="#21667e"/><rect x="640" y="720" width="40" height="40" fill="#21677f"/><rect x="680" y="720" width="40" height="40" fill="#21677f"/><rect x="720" y="720" width="40" height="40" fill="#21677f"/><rect x="760" y="720" width="40" height="40" fill="#21667e"/><rect x="800" y="720" width="40" height="40" fill="#21657e"/><rect x="840" y="720" width="40" height="40" fill="#21657e"/><rect x="880" y="720" width="40" height="40" fill="#21647e"/><rect x="920" y="720" width="40" height="40" fill="#21637e"/><rect x="960" y="720" width="40" height="40" fill="#21637e"/><rect x="1000" y="720" width="40" height="40" fill="#21627e"/><rect x="-80" y="760" width="40" height="40" fill="#1a5677"/><rect x="-40" y="760" width="40" height="40" fill="#1a5677"/><rect x="0" y="760" width="40" height="40" fill="#195877"/><rect x="40" y="760" width="40" height="40" fill="#185a78"/><rect x="80" y="760" width="40" height="40" fill="#195a78"/><rect x="120" y="760" width="40" height="40" fill="#1a5c79"/><rect x="160" y="760" width="40" height="40" fill="#1b5f7a"/><rect x="200" y="760" width="40" height="40" fill="#1b5f7a"/><rect x="240" y="760" width="40" height="40" fill="#1c5f7a"/><rect x="280" y="760" width="40" height="40" fill="#1d607b"/><rect x="320" y="760" width="40" height="40" fill="#1e637b"/><rect x="360" y="760" width="40" height="40" fill="#1e647c"/><rect x="400" y="760" width="40" height="40" fill="#1f657c"/><rect x="440" y="760" width="40" height="40" fill="#1f657c"/><rect x="480" y="760" width="40" height="40" fill="#1f657d"/><rect x="520" y="760" width="40" height="40" fill="#20657d"/><rect x="560" y="760" width="40" height="40" fill="#21667e"/><rect x="600" y="760" width="40" height="40" fill="#22677f"/><rect x="640" y="760" width="40" height="40" fill="#22677f"/><rect x="680" y="760" width="40" height="40" fill="#21677f"/><rect x="720" y="760" width="40" height="40" fill="#21677f"/><rect x="760" y="760" width="40" height="40" fill="#21667e"/><rect x="800" y="760" width="40" height="40" fill="#21667e"/><rect x="840" y="760" width="40" height="40" fill="#21657e"/><rect x="880" y="760" width="40" height="40" fill="#21647e"/><rect x="920" y="760" width="40" height="40" fill="#21637e"/><rect x="960" y="760" width="40" height="40" fill="#21627e"/><rect x="1000" y="760" width="40" height="40" fill="#21627e"/><rect x="1040" y="760" width="40" height="40" fill="#22617e"/><rect x="1080" y="760" width="40" height="40" fill="#22607e"/><rect x="-80" y="800" width="40" height="40" fill="#1a5777"/><rect x="-40" y="800" width="40" height="40" fill="#1a5877"/><rect x="0" y="800" width="40" height="40" fill="#195978"/><rect x="40" y="800" width="40" height="40" fill="#195a78"/><rect x="80" y="800" width="40" height="40" fill="#195a78"/><rect x="120" y="800" width="40" height="40" fill="#1b5d79"/><rect x="160" y="800" width="40" height="40" fill="#1b5f7a"/><rect x="200" y="800" width="40" height="40" fill="#1b607a"/><rect x="240" y="800" width="40" height="40" fill="#1c607a"/><rect x="280" y="800" width="40" height="40" fill="#1d617b"/><rect x="320" y="800" width="40" height="40" fill="#1e647c"/><rect x="360" y="800" width="40" height="40" fill="#1f667d"/><rect x="400" y="800" width="40" height="40" fill="#1f667d"/><rect x="440" y="800" width="40" height="40" fill="#1f657d"/><rect x="480" y="800" width="40" height="40" fill="#1f657d"/><rect x="520" y="800" width="40" height="40" fill="#20657d"/><rect x="560" y="800" width="40" height="40" fill="#21667e"/><rect x="600" y="800" width="40" height="40" fill="#21677e"/><rect x="640" y="800" width="40" height="40" fill="#22677f"/><rect x="680" y="800" width="40" height="40" fill="#21677f"/><rect x="720" y="800" width="40" height="40" fill="#21667e"/><rect x="760" y="800" width="40" height="40" fill="#21667e"/><rect x="800" y="800" width="40" height="40" fill="#21657e"/><rect x="840" y="800" width="40" height="40" fill="#21657e"/><rect x="880" y="800" width="40" height="40" fill="#21647e"/><rect x="920" y="800" width="40" height="40" fill="#21637e"/><rect x="960" y="800" width="40" height="40" fill="#21627e"/><rect x="1000" y="800" width="40" height="40" fill="#22617e"/><rect x="1040" y="800" width="40" height="40" fill="#22607e"/><rect x="1080" y="800" width="40" height="40" fill="#22607e"/><rect x="1120" y="800" width="40" height="40" fill="#235f7e"/><rect x="1160" y="800" width="40" height="40" fill="#235f7e"/><rect x="-80" y="840" width="40" height="40" fill="#1a5877"/><rect x="-40" y="840" width="40" height="40" fill="#1a5877"/><rect x="0" y="840" width="40" height="40" fill="#1a5978"/><rect x="40" y="840" width="40" height="40" fill="#1a5a78"/><rect x="80" y="840" width="40" height="40" fill="#1a5b78"/><rect x="120" y="840" width="40" height="40" fill="#1b5d79"/><rect x="160" y="840" width="40" height="40" fill="#1b5e7a"/><rect x="200" y="840" width="40" height="40" fill="#1b5f7a"/><rect x="240" y="840" width="40" height="40" fill="#1c607a"/><rect x="280" y="840" width="40" height="40" fill="#1d627b"/><rect x="320" y="840" width="40" height="40" fill="#1e657c"/><rect x="360" y="840" width="40" height="40" fill="#1f667d"/><rect x="400" y="840" width="40" height="40" fill="#1f677d"/><rect x="440" y="840" width="40" height="40" fill="#1f667d"/><rect x="480" y="840" width="40" height="40" fill="#1f657c"/><rect x="520" y="840" width="40" height="40" fill="#20657c"/><rect x="560" y="840" width="40" height="40" fill="#20657d"/><rect x="600" y="840" width="40" height="40" fill="#21667d"/><rect x="640" y="840" width="40" height="40" fill="#21667e"/><rect x="680" y="840" width="40" height="40" fill="#21667e"/><rect x="720" y="840" width="40" height="40" fill="#21667e"/><rect x="760" y="840" width="40" height="40" fill="#21667e"/><rect x="800" y="840" width="40" height="40" fill="#21657e"/><rect x="840" y="840" width="40" height="40" fill="#21647e"/><rect x="880" y="840" width="40" height="40" fill="#21647e"/><rect x="920" y="840" width="40" height="40" fill="#21637e"/><rect x="960" y="840" width="40" height="40" fill="#22627e"/><rect x="1000" y="840" width="40" height="40" fill="#22617e"/><rect x="1040" y="840" width="40" height="40" fill="#22607e"/><rect x="1080" y="840" width="40" height="40" fill="#235f7f"/><rect x="1120" y="840" width="40" height="40" fill="#235e7f"/><rect x="1160" y="840" width="40" height="40" fill="#235e7f"/><rect x="1200" y="840" width="40" height="40" fill="#235e7f"/><rect x="-40" y="880" width="40" height="40" fill="#1b5978"/><rect x="0" y="880" width="40" height="40" fill="#1a5a78"/><rect x="40" y="880" width="40" height="40" fill="#1a5a78"/><rect x="80" y="880" width="40" height="40" fill="#1b5b79"/><rect x="120" y="880" width="40" height="40" fill="#1b5d79"/><rect x="160" y="880" width="40" height="40" fill="#1b5e79"/><rect x="200" y="880" width="40" height="40" fill="#1c5f7a"/><rect x="240" y="880" width="40" height="40" fill="#1d607a"/><rect x="280" y="880" width="40" height="40" fill="#1d627b"/><rect x="320" y="880" width="40" height="40" fill="#1e647c"/><rect x="360" y="880" width="40" height="40" fill="#1f657c"/><rect x="400" y="880" width="40" height="40" fill="#1f667d"/><rect x="440" y="880" width="40" height="40" fill="#1f657c"/><rect x="480" y="880" width="40" height="40" fill="#1f657c"/><rect x="520" y="880" width="40" height="40" fill="#1f657c"/><rect x="560" y="880" width="40" height="40" fill="#1f657b"/><rect x="600" y="880" width="40" height="40" fill="#20657b"/><rect x="640" y="880" width="40" height="40" fill="#20657c"/><rect x="680" y="880" width="40" height="40" fill="#20657d"/><rect x="720" y="880" width="40" height="40" fill="#21657d"/><rect x="760" y="880" width="40" height="40" fill="#21657d"/><rect x="800" y="880" width="40" height="40" fill="#21657d"/><rect x="840" y="880" width="40" height="40" fill="#21647d"/><rect x="880" y="880" width="40" height="40" fill="#21637e"/><rect x="920" y="880" width="40" height="40" fill="#21627e"/><rect x="960" y="880" width="40" height="40" fill="#22617e"/><rect x="1000" y="880" width="40" height="40" fill="#22607e"/><rect x="1040" y="880" width="40" height="40" fill="#235f7f"/><rect x="1080" y="880" width="40" height="40" fill="#235e7f"/><rect x="1120" y="880" width="40" height="40" fill="#245e7f"/><rect x="1160" y="880" width="40" height="40" fill="#245e7f"/><rect x="1200" y="880" width="40" height="40" fill="#245e7f"/><rect x="1240" y="880" width="40" height="40" fill="#235e7f"/><rect x="1280" y="880" width="40" height="40" fill="#235e7f"/><rect x="80" y="920" width="40" height="40" fill="#1b5c79"/><rect x="120" y="920" width="40" height="40" fill="#1b5d79"/><rect x="160" y="920" width="40" height="40" fill="#1c5e7a"/><rect x="200" y="920" width="40" height="40" fill="#1c5f7a"/><rect x="240" y="920" width="40" height="40" fill="#1d607a"/><rect x="280" y="920" width="40" height="40" fill="#1d627b"/><rect x="320" y="920" width="40" height="40" fill="#1e637c"/><rect x="360" y="920" width="40" height="40" fill="#1e647c"/><rect x="400" y="920" width="40" height="40" fill="#1f657c"/><rect x="440" y="920" width="40" height="40" fill="#1f657c"/><rect x="480" y="920" width="40" height="40" fill="#1f657c"/><rect x="520" y="920" width="40" height="40" fill="#1f657b"/><rect x="560" y="920" width="40" height="40" fill="#1f657a"/><rect x="600" y="920" width="40" height="40" fill="#1f657a"/><rect x="640" y="920" width="40" height="40" fill="#20657b"/><rect x="680" y="920" width="40" height="40" fill="#20657c"/><rect x="720" y="920" width="40" height="40" fill="#20657d"/><rect x="760" y="920" width="40" height="40" fill="#20657d"/><rect x="800" y="920" width="40" height="40" fill="#21647d"/><rect x="840" y="920" width="40" height="40" fill="#21637d"/><rect x="880" y="920" width="40" height="40" fill="#21637d"/><rect x="920" y="920" width="40" height="40" fill="#22627e"/><rect x="960" y="920" width="40" height="40" fill="#22607e"/><rect x="1000" y="920" width="40" height="40" fill="#235f7f"/><rect x="1040" y="920" width="40" height="40" fill="#245e7f"/><rect x="1080" y="920" width="40" height="40" fill="#245d7f"/><rect x="1120" y="920" width="40" height="40" fill="#245d80"/><rect x="1160" y="920" width="40" height="40" fill="#245d80"/><rect x="1200" y="920" width="40" height="40" fill="#245d7f"/><rect x="1240" y="920" width="40" height="40" fill="#245d7f"/><rect x="1280" y="920" width="40" height="40" fill="#245e7f"/><rect x="1320" y="920" width="40" height="40" fill="#235e7f"/><rect x="1360" y="920" width="40" height="40" fill="#235e7e"/><rect x="200" y="960" width="40" height="40" fill="#1d5f7a"/><rect x="240" y="960" width="40" height="40" fill="#1d607a"/><rect x="280" y="960" width="40" height="40" fill="#1e617b"/><rect x="320" y="960" width="40" height="40" fill="#1e627b"/><rect x="360" y="960" width="40" height="40" fill="#1e637c"/><rect x="400" y="960" width="40" height="40" fill="#1f647c"/><rect x="440" y="960" width="40" height="40" fill="#1f647c"/><rect x="480" y="960" width="40" height="40" fill="#1f647b"/><rect x="520" y="960" width="40" height="40" fill="#1f657b"/><rect x="560" y="960" width="40" height="40" fill="#1f657a"/><rect x="600" y="960" width="40" height="40" fill="#1f657a"/><rect x="640" y="960" width="40" height="40" fill="#1f657b"/><rect x="680" y="960" width="40" height="40" fill="#20657c"/><rect x="720" y="960" width="40" height="40" fill="#20647c"/><rect x="760" y="960" width="40" height="40" fill="#20647d"/><rect x="800" y="960" width="40" height="40" fill="#20647d"/><rect x="840" y="960" width="40" height="40" fill="#21637d"/><rect x="880" y="960" width="40" height="40" fill="#21627d"/><rect x="920" y="960" width="40" height="40" fill="#22617e"/><rect x="960" y="960" width="40" height="40" fill="#22607e"/><rect x="1000" y="960" width="40" height="40" fill="#235f7f"/><rect x="1040" y="960" width="40" height="40" fill="#245d7f"/><rect x="1080" y="960" width="40" height="40" fill="#245d80"/><rect x="1120" y="960" width="40" height="40" fill="#255c80"/><rect x="1160" y="960" width="40" height="40" fill="#255c80"/><rect x="1200" y="960" width="40" height="40" fill="#245d80"/><rect x="1240" y="960" width="40" height="40" fill="#245d7f"/><rect x="1280" y="960" width="40" height="40" fill="#245d7f"/><rect x="1320" y="960" width="40" height="40" fill="#235e7f"/><rect x="1360" y="960" width="40" height="40" fill="#235e7f"/><rect x="1400" y="960" width="40" height="40" fill="#235e7e"/><rect x="320" y="1000" width="40" height="40" fill="#1e627b"/><rect x="360" y="1000" width="40" height="40" fill="#1e637b"/><rect x="400" y="1000" width="40" height="40" fill="#1f637b"/><rect x="440" y="1000" width="40" height="40" fill="#1f647b"/><rect x="480" y="1000" width="40" height="40" fill="#1f647b"/><rect x="520" y="1000" width="40" height="40" fill="#1f647b"/><rect x="560" y="1000" width="40" height="40" fill="#1f657b"/><rect x="600" y="1000" width="40" height="40" fill="#1f657b"/><rect x="640" y="1000" width="40" height="40" fill="#1f657b"/><rect x="680" y="1000" width="40" height="40" fill="#20647c"/><rect x="720" y="1000" width="40" height="40" fill="#20647c"/><rect x="760" y="1000" width="40" height="40" fill="#20647c"/><rect x="800" y="1000" width="40" height="40" fill="#20637d"/><rect x="840" y="1000" width="40" height="40" fill="#21637d"/><rect x="880" y="1000" width="40" height="40" fill="#21627d"/><rect x="920" y="1000" width="40" height="40" fill="#22617e"/><rect x="960" y="1000" width="40" height="40" fill="#235f7e"/><rect x="1000" y="1000" width="40" height="40" fill="#235e7f"/><rect x="1040" y="1000" width="40" height="40" fill="#245d7f"/><rect x="1080" y="1000" width="40" height="40" fill="#255c80"/><rect x="1120" y="1000" width="40" height="40" fill="#255c80"/><rect x="1160" y="1000" width="40" height="40" fill="#255c80"/><rect x="1200" y="1000" width="40" height="40" fill="#255c80"/><rect x="1240" y="1000" width="40" height="40" fill="#245d7f"/><rect x="1280" y="1000" width="40" height="40" fill="#245d7f"/><rect x="1320" y="1000" width="40" height="40" fill="#235e7f"/><rect x="1360" y="1000" width="40" height="40" fill="#235e7f"/><rect x="1400" y="1000" width="40" height="40" fill="#235e7e"/><rect x="1440" y="1000" width="40" height="40" fill="#235e7e"/><rect x="1480" y="1000" width="40" height="40" fill="#225f7e"/><rect x="480" y="1040" width="40" height="40" fill="#1f647b"/><rect x="520" y="1040" width="40" height="40" fill="#1f647b"/><rect x="560" y="1040" width="40" height="40" fill="#1f647b"/><rect x="600" y="1040" width="40" height="40" fill="#1f647b"/><rect x="640" y="1040" width="40" height="40" fill="#1f647b"/><rect x="680" y="1040" width="40" height="40" fill="#20647c"/><rect x="720" y="1040" width="40" height="40" fill="#20647c"/><rect x="760" y="1040" width="40" height="40" fill="#20637c"/><rect x="800" y="1040" width="40" height="40" fill="#20637d"/><rect x="840" y="1040" width="40" height="40" fill="#21627d"/><rect x="880" y="1040" width="40" height="40" fill="#21617d"/><rect x="920" y="1040" width="40" height="40" fill="#22607e"/><rect x="960" y="1040" width="40" height="40" fill="#235f7e"/><rect x="1000" y="1040" width="40" height="40" fill="#235e7f"/><rect x="1040" y="1040" width="40" height="40" fill="#245d7f"/><rect x="1080" y="1040" width="40" height="40" fill="#255c80"/><rect x="1120" y="1040" width="40" height="40" fill="#255c80"/><rect x="1160" y="1040" width="40" height="40" fill="#255c80"/><rect x="1200" y="1040" width="40" height="40" fill="#255c80"/><rect x="1240" y="1040" width="40" height="40" fill="#245d7f"/><rect x="1280" y="1040" width="40" height="40" fill="#245d7f"/><rect x="1320" y="1040" width="40" height="40" fill="#235e7f"/><rect x="1360" y="1040" width="40" height="40" fill="#235e7f"/><rect x="1400" y="1040" width="40" height="40" fill="#235e7e"/><rect x="1440" y="1040" width="40" height="40" fill="#235e7e"/><rect x="1480" y="1040" width="40" height="40" fill="#225f7e"/><rect x="1520" y="1040" width="40" height="40" fill="#225f7e"/><rect x="1560" y="1040" width="40" height="40" fill="#225f7e"/><rect x="600" y="1080" width="40" height="40" fill="#1f647b"/><rect x="640" y="1080" width="40" height="40" fill="#20647c"/><rect x="680" y="1080" width="40" height="40" fill="#20647c"/><rect x="720" y="1080" width="40" height="40" fill="#20637c"/><rect x="760" y="1080" width="40" height="40" fill="#20637c"/><rect x="800" y="1080" width="40" height="40" fill="#20637d"/><rect x="840" y="1080" width="40" height="40" fill="#21627d"/><rect x="880" y="1080" width="40" height="40" fill="#21617d"/><rect x="920" y="1080" width="40" height="40" fill="#22607e"/><rect x="960" y="1080" width="40" height="40" fill="#235f7e"/><rect x="1000" y="1080" width="40" height="40" fill="#235e7f"/><rect x="1040" y="1080" width="40" height="40" fill="#245d7f"/><rect x="1080" y="1080" width="40" height="40" fill="#245d80"/><rect x="1120" y="1080" width="40" height="40" fill="#255c80"/><rect x="1160" y="1080" width="40" height="40" fill="#255c80"/><rect x="1200" y="1080" width="40" height="40" fill="#245d80"/><rect x="1240" y="1080" width="40" height="40" fill="#245d7f"/><rect x="1280" y="1080" width="40" height="40" fill="#245d7f"/><rect x="1320" y="1080" width="40" height="40" fill="#235e7f"/><rect x="1360" y="1080" width="40" height="40" fill="#235e7f"/><rect x="1400" y="1080" width="40" height="40" fill="#235e7e"/><rect x="1440" y="1080" width="40" height="40" fill="#225e7e"/><rect x="1480" y="1080" width="40" height="40" fill="#225f7e"/><rect x="1520" y="1080" width="40" height="40" fill="#225f7e"/><rect x="1560" y="1080" width="40" height="40" fill="#225f7e"/><rect x="1600" y="1080" width="40" height="40" fill="#225f7d"/><rect x="720" y="1120" width="40" height="40" fill="#20637c"/><rect x="760" y="1120" width="40" height="40" fill="#20637c"/><rect x="800" y="1120" width="40" height="40" fill="#20627d"/><rect x="840" y="1120" width="40" height="40" fill="#21627d"/><rect x="880" y="1120" width="40" height="40" fill="#21617d"/><rect x="920" y="1120" width="40" height="40" fill="#22607e"/><rect x="960" y="1120" width="40" height="40" fill="#225f7e"/><rect x="1000" y="1120" width="40" height="40" fill="#235f7f"/><rect x="1040" y="1120" width="40" height="40" fill="#245e7f"/><rect x="1080" y="1120" width="40" height="40" fill="#245d7f"/><rect x="1120" y="1120" width="40" height="40" fill="#245d7f"/><rect x="1160" y="1120" width="40" height="40" fill="#245d7f"/><rect x="1200" y="1120" width="40" height="40" fill="#245d7f"/><rect x="1240" y="1120" width="40" height="40" fill="#245d7f"/><rect x="1280" y="1120" width="40" height="40" fill="#245e7f"/><rect x="1320" y="1120" width="40" height="40" fill="#235e7f"/><rect x="1360" y="1120" width="40" height="40" fill="#235e7e"/><rect x="1400" y="1120" width="40" height="40" fill="#235e7e"/><rect x="1440" y="1120" width="40" height="40" fill="#225e7e"/><rect x="1480" y="1120" width="40" height="40" fill="#225f7e"/><rect x="1520" y="1120" width="40" height="40" fill="#225f7e"/><rect x="1560" y="1120" width="40" height="40" fill="#225f7e"/><rect x="1600" y="1120" width="40" height="40" fill="#225f7d"/><rect x="1640" y="1120" width="40" height="40" fill="#215f7d"/><rect x="1680" y="1120" width="40" height="40" fill="#215f7d"/><rect x="840" y="1160" width="40" height="40" fill="#21617d"/><rect x="880" y="1160" width="40" height="40" fill="#21617d"/><rect x="920" y="1160" width="40" height="40" fill="#22607e"/><rect x="960" y="1160" width="40" height="40" fill="#22607e"/><rect x="1000" y="1160" width="40" height="40" fill="#235f7e"/><rect x="1040" y="1160" width="40" height="40" fill="#235e7f"/><rect x="1080" y="1160" width="40" height="40" fill="#235e7f"/><rect x="1120" y="1160" width="40" height="40" fill="#245d7f"/><rect x="1160" y="1160" width="40" height="40" fill="#245d7f"/><rect x="1200" y="1160" width="40" height="40" fill="#245d7f"/><rect x="1240" y="1160" width="40" height="40" fill="#235e7f"/><rect x="1280" y="1160" width="40" height="40" fill="#235e7f"/><rect x="1320" y="1160" width="40" height="40" fill="#235e7f"/><rect x="1360" y="1160" width="40" height="40" fill="#235e7e"/><rect x="1400" y="1160" width="40" height="40" fill="#235e7e"/><rect x="1440" y="1160" width="40" height="40" fill="#225e7e"/><rect x="1480" y="1160" width="40" height="40" fill="#225f7e"/><rect x="1520" y="1160" width="40" height="40" fill="#225f7e"/><rect x="1560" y="1160" width="40" height="40" fill="#225f7e"/><rect x="1600" y="1160" width="40" height="40" fill="#225f7d"/><rect x="1640" y="1160" width="40" height="40" fill="#215f7d"/><rect x="1680" y="1160" width="40" height="40" fill="#215f7d"/><rect x="1720" y="1160" width="40" height="40" fill="#215f7d"/><rect x="1760" y="1160" width="40" height="40" fill="#215f7d"/></g></g><g clip-path="url(#cb1)"><g filter="url(#wb)"><rect x="-80" y="640" width="40" height="40" fill="#185461"/><rect x="-80" y="680" width="40" height="40" fill="#185461"/><rect x="-40" y="680" width="40" height="40" fill="#185461"/><rect x="0" y="680" width="40" height="40" fill="#185461"/><rect x="40" y="680" width="40" height="40" fill="#185562"/><rect x="-80" y="720" width="40" height="40" fill="#185461"/><rect x="-40" y="720" width="40" height="40" fill="#185461"/><rect x="0" y="720" width="40" height="40" fill="#185461"/><rect x="40" y="720" width="40" height="40" fill="#185562"/><rect x="80" y="720" width="40" height="40" fill="#185562"/><rect x="120" y="720" width="40" height="40" fill="#185562"/><rect x="160" y="720" width="40" height="40" fill="#185563"/><rect x="-80" y="760" width="40" height="40" fill="#185460"/><rect x="-40" y="760" width="40" height="40" fill="#185461"/><rect x="0" y="760" width="40" height="40" fill="#185461"/><rect x="40" y="760" width="40" height="40" fill="#185562"/><rect x="80" y="760" width="40" height="40" fill="#185562"/><rect x="120" y="760" width="40" height="40" fill="#185663"/><rect x="160" y="760" width="40" height="40" fill="#185663"/><rect x="200" y="760" width="40" height="40" fill="#185663"/><rect x="240" y="760" width="40" height="40" fill="#195563"/><rect x="280" y="760" width="40" height="40" fill="#195563"/><rect x="-80" y="800" width="40" height="40" fill="#185360"/><rect x="-40" y="800" width="40" height="40" fill="#185460"/><rect x="0" y="800" width="40" height="40" fill="#185461"/><rect x="40" y="800" width="40" height="40" fill="#185562"/><rect x="80" y="800" width="40" height="40" fill="#185663"/><rect x="120" y="800" width="40" height="40" fill="#185663"/><rect x="160" y="800" width="40" height="40" fill="#185663"/><rect x="200" y="800" width="40" height="40" fill="#185663"/><rect x="240" y="800" width="40" height="40" fill="#185563"/><rect x="280" y="800" width="40" height="40" fill="#195563"/><rect x="320" y="800" width="40" height="40" fill="#195564"/><rect x="360" y="800" width="40" height="40" fill="#1a5664"/><rect x="400" y="800" width="40" height="40" fill="#1a5665"/><rect x="-80" y="840" width="40" height="40" fill="#17535f"/><rect x="-40" y="840" width="40" height="40" fill="#175360"/><rect x="0" y="840" width="40" height="40" fill="#175460"/><rect x="40" y="840" width="40" height="40" fill="#185561"/><rect x="80" y="840" width="40" height="40" fill="#185663"/><rect x="120" y="840" width="40" height="40" fill="#185764"/><rect x="160" y="840" width="40" height="40" fill="#185764"/><rect x="200" y="840" width="40" height="40" fill="#185663"/><rect x="240" y="840" width="40" height="40" fill="#185563"/><rect x="280" y="840" width="40" height="40" fill="#195563"/><rect x="320" y="840" width="40" height="40" fill="#195564"/><rect x="360" y="840" width="40" height="40" fill="#1a5664"/><rect x="400" y="840" width="40" height="40" fill="#1b5665"/><rect x="440" y="840" width="40" height="40" fill="#1b5665"/><rect x="480" y="840" width="40" height="40" fill="#1c5766"/><rect x="520" y="840" width="40" height="40" fill="#1c5766"/><rect x="560" y="840" width="40" height="40" fill="#1d5767"/><rect x="-80" y="880" width="40" height="40" fill="#17525f"/><rect x="-40" y="880" width="40" height="40" fill="#17535f"/><rect x="0" y="880" width="40" height="40" fill="#17535f"/><rect x="40" y="880" width="40" height="40" fill="#175460"/><rect x="80" y="880" width="40" height="40" fill="#185662"/><rect x="120" y="880" width="40" height="40" fill="#185865"/><rect x="160" y="880" width="40" height="40" fill="#185865"/><rect x="200" y="880" width="40" height="40" fill="#185663"/><rect x="240" y="880" width="40" height="40" fill="#185563"/><rect x="280" y="880" width="40" height="40" fill="#195563"/><rect x="320" y="880" width="40" height="40" fill="#1a5564"/><rect x="360" y="880" width="40" height="40" fill="#1a5665"/><rect x="400" y="880" width="40" height="40" fill="#1b5666"/><rect x="440" y="880" width="40" height="40" fill="#1b5766"/><rect x="480" y="880" width="40" height="40" fill="#1c5766"/><rect x="520" y="880" width="40" height="40" fill="#1d5767"/><rect x="560" y="880" width="40" height="40" fill="#1e5867"/><rect x="600" y="880" width="40" height="40" fill="#1e5868"/><rect x="640" y="880" width="40" height="40" fill="#1e5868"/><rect x="680" y="880" width="40" height="40" fill="#1e5868"/><rect x="-80" y="920" width="40" height="40" fill="#17515e"/><rect x="-40" y="920" width="40" height="40" fill="#17525e"/><rect x="0" y="920" width="40" height="40" fill="#17525e"/><rect x="40" y="920" width="40" height="40" fill="#17535e"/><rect x="80" y="920" width="40" height="40" fill="#17535e"/><rect x="120" y="920" width="40" height="40" fill="#185561"/><rect x="160" y="920" width="40" height="40" fill="#185662"/><rect x="200" y="920" width="40" height="40" fill="#185562"/><rect x="240" y="920" width="40" height="40" fill="#185462"/><rect x="280" y="920" width="40" height="40" fill="#195463"/><rect x="320" y="920" width="40" height="40" fill="#1a5564"/><rect x="360" y="920" width="40" height="40" fill="#1b5666"/><rect x="400" y="920" width="40" height="40" fill="#1b5766"/><rect x="440" y="920" width="40" height="40" fill="#1c5766"/><rect x="480" y="920" width="40" height="40" fill="#1c5767"/><rect x="520" y="920" width="40" height="40" fill="#1d5867"/><rect x="560" y="920" width="40" height="40" fill="#1e5868"/><rect x="600" y="920" width="40" height="40" fill="#1f5868"/><rect x="640" y="920" width="40" height="40" fill="#1f5868"/><rect x="680" y="920" width="40" height="40" fill="#1f5868"/><rect x="720" y="920" width="40" height="40" fill="#1f5768"/><rect x="760" y="920" width="40" height="40" fill="#1f5768"/><rect x="800" y="920" width="40" height="40" fill="#1e5768"/><rect x="-80" y="960" width="40" height="40" fill="#16505c"/><rect x="-40" y="960" width="40" height="40" fill="#16505c"/><rect x="0" y="960" width="40" height="40" fill="#17515d"/><rect x="40" y="960" width="40" height="40" fill="#17525d"/><rect x="80" y="960" width="40" height="40" fill="#17525d"/><rect x="120" y="960" width="40" height="40" fill="#17535e"/><rect x="160" y="960" width="40" height="40" fill="#175460"/><rect x="200" y="960" width="40" height="40" fill="#175361"/><rect x="240" y="960" width="40" height="40" fill="#175261"/><rect x="280" y="960" width="40" height="40" fill="#185362"/><rect x="320" y="960" width="40" height="40" fill="#1a5565"/><rect x="360" y="960" width="40" height="40" fill="#1b5767"/><rect x="400" y="960" width="40" height="40" fill="#1c5767"/><rect x="440" y="960" width="40" height="40" fill="#1c5767"/><rect x="480" y="960" width="40" height="40" fill="#1c5767"/><rect x="520" y="960" width="40" height="40" fill="#1e5868"/><rect x="560" y="960" width="40" height="40" fill="#1f5969"/><rect x="600" y="960" width="40" height="40" fill="#205969"/><rect x="640" y="960" width="40" height="40" fill="#205969"/><rect x="680" y="960" width="40" height="40" fill="#1f5869"/><rect x="720" y="960" width="40" height="40" fill="#1f5768"/><rect x="760" y="960" width="40" height="40" fill="#1f5768"/><rect x="800" y="960" width="40" height="40" fill="#1f5768"/><rect x="840" y="960" width="40" height="40" fill="#1f5668"/><rect x="880" y="960" width="40" height="40" fill="#1e5668"/><rect x="920" y="960" width="40" height="40" fill="#1e5667"/><rect x="-80" y="1000" width="40" height="40" fill="#164f5b"/><rect x="-40" y="1000" width="40" height="40" fill="#164e5a"/><rect x="0" y="1000" width="40" height="40" fill="#164f5b"/><rect x="40" y="1000" width="40" height="40" fill="#17515c"/><rect x="80" y="1000" width="40" height="40" fill="#17525d"/><rect x="120" y="1000" width="40" height="40" fill="#17525e"/><rect x="160" y="1000" width="40" height="40" fill="#175260"/><rect x="200" y="1000" width="40" height="40" fill="#175160"/><rect x="240" y="1000" width="40" height="40" fill="#165160"/><rect x="280" y="1000" width="40" height="40" fill="#175261"/><rect x="320" y="1000" width="40" height="40" fill="#1a5565"/><rect x="360" y="1000" width="40" height="40" fill="#1c5767"/><rect x="400" y="1000" width="40" height="40" fill="#1c5868"/><rect x="440" y="1000" width="40" height="40" fill="#1c5767"/><rect x="480" y="1000" width="40" height="40" fill="#1d5767"/><rect x="520" y="1000" width="40" height="40" fill="#1e5868"/><rect x="560" y="1000" width="40" height="40" fill="#205969"/><rect x="600" y="1000" width="40" height="40" fill="#215a6a"/><rect x="640" y="1000" width="40" height="40" fill="#215a6a"/><rect x="680" y="1000" width="40" height="40" fill="#205969"/><rect x="720" y="1000" width="40" height="40" fill="#1f5768"/><rect x="760" y="1000" width="40" height="40" fill="#1f5768"/><rect x="800" y="1000" width="40" height="40" fill="#1f5668"/><rect x="840" y="1000" width="40" height="40" fill="#1f5668"/><rect x="880" y="1000" width="40" height="40" fill="#1f5668"/><rect x="920" y="1000" width="40" height="40" fill="#1e5667"/><rect x="960" y="1000" width="40" height="40" fill="#1e5667"/><rect x="1000" y="1000" width="40" height="40" fill="#1e5667"/><rect x="1040" y="1000" width="40" height="40" fill="#1e5667"/><rect x="-80" y="1040" width="40" height="40" fill="#164e5a"/><rect x="-40" y="1040" width="40" height="40" fill="#154d59"/><rect x="0" y="1040" width="40" height="40" fill="#154d59"/><rect x="40" y="1040" width="40" height="40" fill="#164f5b"/><rect x="80" y="1040" width="40" height="40" fill="#17515d"/><rect x="120" y="1040" width="40" height="40" fill="#17525f"/><rect x="160" y="1040" width="40" height="40" fill="#175260"/><rect x="200" y="1040" width="40" height="40" fill="#175160"/><rect x="240" y="1040" width="40" height="40" fill="#165160"/><rect x="280" y="1040" width="40" height="40" fill="#175261"/><rect x="320" y="1040" width="40" height="40" fill="#195464"/><rect x="360" y="1040" width="40" height="40" fill="#1b5666"/><rect x="400" y="1040" width="40" height="40" fill="#1b5767"/><rect x="440" y="1040" width="40" height="40" fill="#1c5767"/><rect x="480" y="1040" width="40" height="40" fill="#1d5767"/><rect x="520" y="1040" width="40" height="40" fill="#1e5868"/><rect x="560" y="1040" width="40" height="40" fill="#205969"/><rect x="600" y="1040" width="40" height="40" fill="#215a6a"/><rect x="640" y="1040" width="40" height="40" fill="#20596a"/><rect x="680" y="1040" width="40" height="40" fill="#205869"/><rect x="720" y="1040" width="40" height="40" fill="#1f5768"/><rect x="760" y="1040" width="40" height="40" fill="#1f5668"/><rect x="800" y="1040" width="40" height="40" fill="#1f5668"/><rect x="840" y="1040" width="40" height="40" fill="#1f5668"/><rect x="880" y="1040" width="40" height="40" fill="#1f5668"/><rect x="920" y="1040" width="40" height="40" fill="#1e5667"/><rect x="960" y="1040" width="40" height="40" fill="#1e5667"/><rect x="1000" y="1040" width="40" height="40" fill="#1e5667"/><rect x="1040" y="1040" width="40" height="40" fill="#1e5667"/><rect x="1080" y="1040" width="40" height="40" fill="#1d5667"/><rect x="1120" y="1040" width="40" height="40" fill="#1d5666"/><rect x="1160" y="1040" width="40" height="40" fill="#1d5666"/><rect x="-80" y="1080" width="40" height="40" fill="#164e5a"/><rect x="-40" y="1080" width="40" height="40" fill="#154d59"/><rect x="0" y="1080" width="40" height="40" fill="#154d59"/><rect x="40" y="1080" width="40" height="40" fill="#164e5b"/><rect x="80" y="1080" width="40" height="40" fill="#17505d"/><rect x="120" y="1080" width="40" height="40" fill="#17515f"/><rect x="160" y="1080" width="40" height="40" fill="#175260"/><rect x="200" y="1080" width="40" height="40" fill="#175260"/><rect x="240" y="1080" width="40" height="40" fill="#175261"/><rect x="280" y="1080" width="40" height="40" fill="#185262"/><rect x="320" y="1080" width="40" height="40" fill="#195463"/><rect x="360" y="1080" width="40" height="40" fill="#1a5565"/><rect x="400" y="1080" width="40" height="40" fill="#1b5666"/><rect x="440" y="1080" width="40" height="40" fill="#1c5766"/><rect x="480" y="1080" width="40" height="40" fill="#1d5767"/><rect x="520" y="1080" width="40" height="40" fill="#1e5868"/><rect x="560" y="1080" width="40" height="40" fill="#1f5968"/><rect x="600" y="1080" width="40" height="40" fill="#205969"/><rect x="640" y="1080" width="40" height="40" fill="#205969"/><rect x="680" y="1080" width="40" height="40" fill="#1f5868"/><rect x="720" y="1080" width="40" height="40" fill="#1f5768"/><rect x="760" y="1080" width="40" height="40" fill="#1f5668"/><rect x="800" y="1080" width="40" height="40" fill="#1f5668"/><rect x="840" y="1080" width="40" height="40" fill="#1f5668"/><rect x="880" y="1080" width="40" height="40" fill="#1f5668"/><rect x="920" y="1080" width="40" height="40" fill="#1e5667"/><rect x="960" y="1080" width="40" height="40" fill="#1e5667"/><rect x="1000" y="1080" width="40" height="40" fill="#1e5667"/><rect x="1040" y="1080" width="40" height="40" fill="#1e5667"/><rect x="1080" y="1080" width="40" height="40" fill="#1d5667"/><rect x="1120" y="1080" width="40" height="40" fill="#1d5666"/><rect x="1160" y="1080" width="40" height="40" fill="#1d5666"/><rect x="1200" y="1080" width="40" height="40" fill="#1d5666"/><rect x="1240" y="1080" width="40" height="40" fill="#1d5666"/><rect x="1280" y="1080" width="40" height="40" fill="#1d5666"/><rect x="1320" y="1080" width="40" height="40" fill="#1d5666"/><rect x="-80" y="1120" width="40" height="40" fill="#164e5a"/><rect x="-40" y="1120" width="40" height="40" fill="#164e5a"/><rect x="0" y="1120" width="40" height="40" fill="#164e5a"/><rect x="40" y="1120" width="40" height="40" fill="#164f5b"/><rect x="80" y="1120" width="40" height="40" fill="#17505d"/><rect x="120" y="1120" width="40" height="40" fill="#17515f"/><rect x="160" y="1120" width="40" height="40" fill="#175260"/><rect x="200" y="1120" width="40" height="40" fill="#175261"/><rect x="240" y="1120" width="40" height="40" fill="#185261"/><rect x="280" y="1120" width="40" height="40" fill="#185362"/><rect x="320" y="1120" width="40" height="40" fill="#195463"/><rect x="360" y="1120" width="40" height="40" fill="#1a5564"/><rect x="400" y="1120" width="40" height="40" fill="#1b5665"/><rect x="440" y="1120" width="40" height="40" fill="#1b5666"/><rect x="480" y="1120" width="40" height="40" fill="#1c5766"/><rect x="520" y="1120" width="40" height="40" fill="#1d5767"/><rect x="560" y="1120" width="40" height="40" fill="#1e5868"/><rect x="600" y="1120" width="40" height="40" fill="#1f5868"/><rect x="640" y="1120" width="40" height="40" fill="#1f5868"/><rect x="680" y="1120" width="40" height="40" fill="#1f5768"/><rect x="720" y="1120" width="40" height="40" fill="#1f5768"/><rect x="760" y="1120" width="40" height="40" fill="#1f5668"/><rect x="800" y="1120" width="40" height="40" fill="#1f5668"/><rect x="840" y="1120" width="40" height="40" fill="#1f5668"/><rect x="880" y="1120" width="40" height="40" fill="#1f5668"/><rect x="920" y="1120" width="40" height="40" fill="#1e5667"/><rect x="960" y="1120" width="40" height="40" fill="#1e5667"/><rect x="1000" y="1120" width="40" height="40" fill="#1e5667"/><rect x="1040" y="1120" width="40" height="40" fill="#1e5667"/><rect x="1080" y="1120" width="40" height="40" fill="#1d5667"/><rect x="1120" y="1120" width="40" height="40" fill="#1d5666"/><rect x="1160" y="1120" width="40" height="40" fill="#1d5666"/><rect x="1200" y="1120" width="40" height="40" fill="#1d5666"/><rect x="1240" y="1120" width="40" height="40" fill="#1d5666"/><rect x="1280" y="1120" width="40" height="40" fill="#1d5666"/><rect x="1320" y="1120" width="40" height="40" fill="#1d5666"/><rect x="1360" y="1120" width="40" height="40" fill="#1c5666"/><rect x="1400" y="1120" width="40" height="40" fill="#1c5666"/><rect x="1440" y="1120" width="40" height="40" fill="#1c5665"/><rect x="-80" y="1160" width="40" height="40" fill="#164f5b"/><rect x="-40" y="1160" width="40" height="40" fill="#164f5b"/><rect x="0" y="1160" width="40" height="40" fill="#164f5b"/><rect x="40" y="1160" width="40" height="40" fill="#16505c"/><rect x="80" y="1160" width="40" height="40" fill="#17515e"/><rect x="120" y="1160" width="40" height="40" fill="#17515f"/><rect x="160" y="1160" width="40" height="40" fill="#185260"/><rect x="200" y="1160" width="40" height="40" fill="#185261"/><rect x="240" y="1160" width="40" height="40" fill="#185361"/><rect x="280" y="1160" width="40" height="40" fill="#195362"/><rect x="320" y="1160" width="40" height="40" fill="#195463"/><rect x="360" y="1160" width="40" height="40" fill="#1a5564"/><rect x="400" y="1160" width="40" height="40" fill="#1b5565"/><rect x="440" y="1160" width="40" height="40" fill="#1b5665"/><rect x="480" y="1160" width="40" height="40" fill="#1c5666"/><rect x="520" y="1160" width="40" height="40" fill="#1d5767"/><rect x="560" y="1160" width="40" height="40" fill="#1e5767"/><rect x="600" y="1160" width="40" height="40" fill="#1e5768"/><rect x="640" y="1160" width="40" height="40" fill="#1e5768"/><rect x="680" y="1160" width="40" height="40" fill="#1f5768"/><rect x="720" y="1160" width="40" height="40" fill="#1f5768"/><rect x="760" y="1160" width="40" height="40" fill="#1f5668"/><rect x="800" y="1160" width="40" height="40" fill="#1f5668"/><rect x="840" y="1160" width="40" height="40" fill="#1f5668"/><rect x="880" y="1160" width="40" height="40" fill="#1e5667"/><rect x="920" y="1160" width="40" height="40" fill="#1e5667"/><rect x="960" y="1160" width="40" height="40" fill="#1e5667"/><rect x="1000" y="1160" width="40" height="40" fill="#1e5667"/><rect x="1040" y="1160" width="40" height="40" fill="#1e5667"/><rect x="1080" y="1160" width="40" height="40" fill="#1d5667"/><rect x="1120" y="1160" width="40" height="40" fill="#1d5666"/><rect x="1160" y="1160" width="40" height="40" fill="#1d5666"/><rect x="1200" y="1160" width="40" height="40" fill="#1d5666"/><rect x="1240" y="1160" width="40" height="40" fill="#1d5666"/><rect x="1280" y="1160" width="40" height="40" fill="#1d5666"/><rect x="1320" y="1160" width="40" height="40" fill="#1d5666"/><rect x="1360" y="1160" width="40" height="40" fill="#1c5666"/><rect x="1400" y="1160" width="40" height="40" fill="#1c5665"/><rect x="1440" y="1160" width="40" height="40" fill="#1c5665"/><rect x="1480" y="1160" width="40" height="40" fill="#1c5665"/><rect x="1520" y="1160" width="40" height="40" fill="#1c5665"/><rect x="1560" y="1160" width="40" height="40" fill="#1c5665"/></g></g><path d="M1716,975 L1716,610 L1724,604 L1732,625 L1742,640 L1738,660 L1752,668 L1760,700 L1770,720 L1790,745 L1805,770 L1820,762 L1835,748 L1850,760 L1866,742 L1880,740 L1895,728 L1910,724 L1920,715 L1920,975Z" fill="#0a2040" fill-opacity=".12"/><defs><filter id="hb" x="-50%" y="-50%" width="200%" height="200%"><feGaussianBlur stdDeviation="10"/></filter><clipPath id="sD"><polygon points="1068.8,-300.0 2300.0,-300.0 2300.0,1500.0 2006.2,1500.0"/></clipPath><clipPath id="sA"><polygon points="222.0,-300.0 2300.0,-300.0 2300.0,1778.0"/></clipPath><clipPath id="sF"><polygon points="1583.0,-300.0 2300.0,-300.0 2300.0,1500.0 1991.1,1500.0"/></clipPath></defs><g clip-path="url(#sD)"><line x1="1199.0" y1="-50" x2="1589.6" y2="700" stroke="#3ec4e0" stroke-width="14" stroke-opacity=".16" filter="url(#hb)"/></g><g clip-path="url(#sA)"><line x1="472" y1="-50" x2="1100" y2="578" stroke="#3aa0d8" stroke-width="12" stroke-opacity=".10" filter="url(#hb)"/></g><g clip-path="url(#sF)"><line x1="1737.2" y1="380" x2="1827.9" y2="780" stroke="#3a90d0" stroke-width="12" stroke-opacity=".12" filter="url(#hb)"/></g><defs><linearGradient id="brm" x1="0" y1="930" x2="0" y2="975" gradientUnits="userSpaceOnUse"><stop offset="0" stop-color="#fff" stop-opacity="0"/><stop offset="1" stop-color="#fff" stop-opacity="1"/></linearGradient><mask id="brmask" maskUnits="userSpaceOnUse" x="1000" y="900" width="920" height="180"><rect x="1000" y="900" width="920" height="180" fill="url(#brm)"/></mask></defs><g mask="url(#brmask)"><g filter="url(#wb)"><rect x="1040" y="880" width="40" height="40" fill="#22577c"/><rect x="1080" y="880" width="40" height="40" fill="#23587c"/><rect x="1120" y="880" width="40" height="40" fill="#23587c"/><rect x="1160" y="880" width="40" height="40" fill="#22577c"/><rect x="1200" y="880" width="40" height="40" fill="#22567c"/><rect x="1240" y="880" width="40" height="40" fill="#22567c"/><rect x="1280" y="880" width="40" height="40" fill="#21557b"/><rect x="1320" y="880" width="40" height="40" fill="#205379"/><rect x="1360" y="880" width="40" height="40" fill="#1f5077"/><rect x="1400" y="880" width="40" height="40" fill="#1e4c74"/><rect x="1440" y="880" width="40" height="40" fill="#1d4a72"/><rect x="1480" y="880" width="40" height="40" fill="#1c4870"/><rect x="1520" y="880" width="40" height="40" fill="#1b466e"/><rect x="1560" y="880" width="40" height="40" fill="#1a436c"/><rect x="1600" y="880" width="40" height="40" fill="#19416a"/><rect x="1640" y="880" width="40" height="40" fill="#183f68"/><rect x="1680" y="880" width="40" height="40" fill="#173d66"/><rect x="1720" y="880" width="40" height="40" fill="#173c65"/><rect x="1760" y="880" width="40" height="40" fill="#173b65"/><rect x="1800" y="880" width="40" height="40" fill="#173b65"/><rect x="1840" y="880" width="40" height="40" fill="#173a65"/><rect x="1880" y="880" width="40" height="40" fill="#173a66"/><rect x="1920" y="880" width="40" height="40" fill="#173a66"/><rect x="1040" y="920" width="40" height="40" fill="#23597c"/><rect x="1080" y="920" width="40" height="40" fill="#23597d"/><rect x="1120" y="920" width="40" height="40" fill="#23597d"/><rect x="1160" y="920" width="40" height="40" fill="#23597d"/><rect x="1200" y="920" width="40" height="40" fill="#23587d"/><rect x="1240" y="920" width="40" height="40" fill="#23587e"/><rect x="1280" y="920" width="40" height="40" fill="#22577e"/><rect x="1320" y="920" width="40" height="40" fill="#22557c"/><rect x="1360" y="920" width="40" height="40" fill="#205178"/><rect x="1400" y="920" width="40" height="40" fill="#1e4d74"/><rect x="1440" y="920" width="40" height="40" fill="#1d4a72"/><rect x="1480" y="920" width="40" height="40" fill="#1c4870"/><rect x="1520" y="920" width="40" height="40" fill="#1b466e"/><rect x="1560" y="920" width="40" height="40" fill="#1a436c"/><rect x="1600" y="920" width="40" height="40" fill="#19416a"/><rect x="1640" y="920" width="40" height="40" fill="#183f67"/><rect x="1680" y="920" width="40" height="40" fill="#173c64"/><rect x="1720" y="920" width="40" height="40" fill="#163b63"/><rect x="1760" y="920" width="40" height="40" fill="#173a64"/><rect x="1800" y="920" width="40" height="40" fill="#173a64"/><rect x="1840" y="920" width="40" height="40" fill="#173a65"/><rect x="1880" y="920" width="40" height="40" fill="#173a65"/><rect x="1920" y="920" width="40" height="40" fill="#173a65"/><rect x="1040" y="960" width="40" height="40" fill="#23597d"/><rect x="1080" y="960" width="40" height="40" fill="#235a7d"/><rect x="1120" y="960" width="40" height="40" fill="#245a7e"/><rect x="1160" y="960" width="40" height="40" fill="#245a7e"/><rect x="1200" y="960" width="40" height="40" fill="#23597e"/><rect x="1240" y="960" width="40" height="40" fill="#235980"/><rect x="1280" y="960" width="40" height="40" fill="#235a81"/><rect x="1320" y="960" width="40" height="40" fill="#23587e"/><rect x="1360" y="960" width="40" height="40" fill="#20527a"/><rect x="1400" y="960" width="40" height="40" fill="#1e4d75"/><rect x="1440" y="960" width="40" height="40" fill="#1d4a72"/><rect x="1480" y="960" width="40" height="40" fill="#1d4971"/><rect x="1520" y="960" width="40" height="40" fill="#1b476f"/><rect x="1560" y="960" width="40" height="40" fill="#19436c"/><rect x="1600" y="960" width="40" height="40" fill="#18426b"/><rect x="1640" y="960" width="40" height="40" fill="#183f68"/><rect x="1680" y="960" width="40" height="40" fill="#173b64"/><rect x="1720" y="960" width="40" height="40" fill="#163a63"/><rect x="1760" y="960" width="40" height="40" fill="#163963"/><rect x="1800" y="960" width="40" height="40" fill="#163963"/><rect x="1840" y="960" width="40" height="40" fill="#173963"/><rect x="1880" y="960" width="40" height="40" fill="#173963"/><rect x="1920" y="960" width="40" height="40" fill="#173964"/><rect x="1040" y="1000" width="40" height="40" fill="#235a7d"/><rect x="1080" y="1000" width="40" height="40" fill="#235a7d"/><rect x="1120" y="1000" width="40" height="40" fill="#255b7f"/><rect x="1160" y="1000" width="40" height="40" fill="#245b7f"/><rect x="1200" y="1000" width="40" height="40" fill="#24597f"/><rect x="1240" y="1000" width="40" height="40" fill="#235a80"/><rect x="1280" y="1000" width="40" height="40" fill="#245a81"/><rect x="1320" y="1000" width="40" height="40" fill="#23587f"/><rect x="1360" y="1000" width="40" height="40" fill="#21537a"/><rect x="1400" y="1000" width="40" height="40" fill="#1e4d75"/><rect x="1440" y="1000" width="40" height="40" fill="#1d4a72"/><rect x="1480" y="1000" width="40" height="40" fill="#1d4a72"/><rect x="1520" y="1000" width="40" height="40" fill="#1c4870"/><rect x="1560" y="1000" width="40" height="40" fill="#19436c"/><rect x="1600" y="1000" width="40" height="40" fill="#18426b"/><rect x="1640" y="1000" width="40" height="40" fill="#184069"/><rect x="1680" y="1000" width="40" height="40" fill="#173c65"/><rect x="1720" y="1000" width="40" height="40" fill="#163a63"/><rect x="1760" y="1000" width="40" height="40" fill="#163962"/><rect x="1800" y="1000" width="40" height="40" fill="#163862"/><rect x="1840" y="1000" width="40" height="40" fill="#163761"/><rect x="1880" y="1000" width="40" height="40" fill="#163761"/><rect x="1920" y="1000" width="40" height="40" fill="#173862"/><rect x="1040" y="1040" width="40" height="40" fill="#235a7c"/><rect x="1080" y="1040" width="40" height="40" fill="#235a7c"/><rect x="1120" y="1040" width="40" height="40" fill="#245b7e"/><rect x="1160" y="1040" width="40" height="40" fill="#245b7f"/><rect x="1200" y="1040" width="40" height="40" fill="#23597e"/><rect x="1240" y="1040" width="40" height="40" fill="#23597f"/><rect x="1280" y="1040" width="40" height="40" fill="#23597f"/><rect x="1320" y="1040" width="40" height="40" fill="#22567d"/><rect x="1360" y="1040" width="40" height="40" fill="#205279"/><rect x="1400" y="1040" width="40" height="40" fill="#1e4d75"/><rect x="1440" y="1040" width="40" height="40" fill="#1d4a72"/><rect x="1480" y="1040" width="40" height="40" fill="#1c4971"/><rect x="1520" y="1040" width="40" height="40" fill="#1b476f"/><rect x="1560" y="1040" width="40" height="40" fill="#1a446c"/><rect x="1600" y="1040" width="40" height="40" fill="#19426b"/><rect x="1640" y="1040" width="40" height="40" fill="#184069"/><rect x="1680" y="1040" width="40" height="40" fill="#173d66"/><rect x="1720" y="1040" width="40" height="40" fill="#173b64"/><rect x="1760" y="1040" width="40" height="40" fill="#173a63"/><rect x="1800" y="1040" width="40" height="40" fill="#163962"/><rect x="1840" y="1040" width="40" height="40" fill="#163761"/><rect x="1880" y="1040" width="40" height="40" fill="#163761"/><rect x="1920" y="1040" width="40" height="40" fill="#163862"/><rect x="1040" y="1080" width="40" height="40" fill="#23597c"/><rect x="1080" y="1080" width="40" height="40" fill="#235a7d"/><rect x="1120" y="1080" width="40" height="40" fill="#235a7d"/><rect x="1160" y="1080" width="40" height="40" fill="#23597d"/><rect x="1200" y="1080" width="40" height="40" fill="#23587d"/><rect x="1240" y="1080" width="40" height="40" fill="#22577d"/><rect x="1280" y="1080" width="40" height="40" fill="#22567d"/><rect x="1320" y="1080" width="40" height="40" fill="#21547b"/><rect x="1360" y="1080" width="40" height="40" fill="#205178"/><rect x="1400" y="1080" width="40" height="40" fill="#1e4d75"/><rect x="1440" y="1080" width="40" height="40" fill="#1d4a72"/><rect x="1480" y="1080" width="40" height="40" fill="#1c4870"/><rect x="1520" y="1080" width="40" height="40" fill="#1b466e"/><rect x="1560" y="1080" width="40" height="40" fill="#1a446c"/><rect x="1600" y="1080" width="40" height="40" fill="#19426b"/><rect x="1640" y="1080" width="40" height="40" fill="#184069"/><rect x="1680" y="1080" width="40" height="40" fill="#183e67"/><rect x="1720" y="1080" width="40" height="40" fill="#173c65"/><rect x="1760" y="1080" width="40" height="40" fill="#173b64"/><rect x="1800" y="1080" width="40" height="40" fill="#173963"/><rect x="1840" y="1080" width="40" height="40" fill="#173862"/><rect x="1880" y="1080" width="40" height="40" fill="#173862"/><rect x="1920" y="1080" width="40" height="40" fill="#173963"/></g></g><g opacity=".17"><path d="M361.8,852.0 L364.2,852.0 L365.5,1100.0 L360.5,1100.0Z M363.0,856.4 L360.2,857.3 L358.4,858.0 L356.9,855.2 L358.4,856.6 L360.2,853.9 L363.0,852.8Z M359.2,856.2 a1.0,0.7 0 1,1 2.0,0 a1.0,0.7 0 1,1 -2.0,0Z M363.0,852.8 L367.6,853.6 L370.7,855.7 L372.2,854.3 L370.7,857.1 L367.6,856.9 L363.0,856.4Z M369.7,857.6 a1.0,0.7 0 1,1 2.0,0 a1.0,0.7 0 1,1 -2.0,0Z M363.0,864.0 L359.9,865.1 L357.8,866.1 L356.3,863.3 L357.8,864.7 L359.9,861.5 L363.0,860.2Z M359.3,866.3 a1.0,0.7 0 1,1 2.0,0 a1.0,0.7 0 1,1 -2.0,0Z M363.0,860.3 L368.5,861.5 L372.1,864.5 L373.6,863.1 L372.1,866.0 L368.5,865.0 L363.0,863.9Z M362.2,866.1 a1.1,0.8 0 1,1 2.2,0 a1.1,0.8 0 1,1 -2.2,0Z M363.0,873.1 L356.4,874.8 L352.0,876.7 L350.5,873.9 L352.0,875.3 L356.4,871.2 L363.0,869.4Z M353.0,875.8 a1.2,0.8 0 1,1 2.4,0 a1.2,0.8 0 1,1 -2.4,0Z M363.0,869.4 L366.6,870.2 L369.0,872.4 L370.5,871.0 L369.0,873.8 L366.6,873.6 L363.0,873.1Z M367.7,873.5 a1.1,0.7 0 1,1 2.1,0 a1.1,0.7 0 1,1 -2.1,0Z M363.0,879.8 L357.3,880.7 L353.5,881.4 L352.0,878.6 L353.5,879.9 L357.3,877.0 L363.0,875.9Z M356.2,882.3 a1.3,0.9 0 1,1 2.6,0 a1.3,0.9 0 1,1 -2.6,0Z M363.0,875.8 L371.3,877.9 L376.8,882.4 L378.3,881.1 L376.8,884.0 L371.3,881.8 L363.0,879.8Z M364.0,885.2 a1.3,0.9 0 1,1 2.5,0 a1.3,0.9 0 1,1 -2.5,0Z M363.0,887.0 L354.5,887.7 L348.9,888.1 L347.4,885.2 L348.9,886.5 L354.5,883.8 L363.0,882.7Z M353.6,885.2 a1.3,0.9 0 1,1 2.7,0 a1.3,0.9 0 1,1 -2.7,0Z M363.0,882.8 L373.2,883.6 L380.0,885.9 L381.5,884.7 L380.0,887.6 L373.2,887.5 L363.0,887.0Z M368.7,885.4 a1.3,0.9 0 1,1 2.6,0 a1.3,0.9 0 1,1 -2.6,0Z M363.0,895.7 L358.1,897.3 L354.8,899.2 L353.3,896.4 L354.8,897.8 L358.1,893.8 L363.0,892.1Z M355.6,897.6 a1.5,1.0 0 1,1 3.0,0 a1.5,1.0 0 1,1 -3.0,0Z M363.0,892.0 L371.2,894.4 L376.7,899.5 L378.2,898.1 L376.7,901.0 L371.2,898.2 L363.0,895.9Z M363.0,897.5 a1.1,0.8 0 1,1 2.2,0 a1.1,0.8 0 1,1 -2.2,0Z M363.0,901.6 L353.2,902.4 L346.7,903.1 L345.2,900.3 L346.7,901.7 L353.2,899.0 L363.0,897.9Z M347.4,903.0 a1.5,1.1 0 1,1 3.0,0 a1.5,1.1 0 1,1 -3.0,0Z M363.0,897.7 L370.9,899.3 L376.2,903.0 L377.7,901.7 L376.2,904.7 L370.9,903.3 L363.0,901.9Z M370.2,903.6 a1.4,0.9 0 1,1 2.7,0 a1.4,0.9 0 1,1 -2.7,0Z M363.0,911.8 L352.9,913.2 L346.2,914.6 L344.7,911.5 L346.2,912.8 L352.9,908.9 L363.0,907.2Z M357.7,913.1 a1.4,0.9 0 1,1 2.7,0 a1.4,0.9 0 1,1 -2.7,0Z M363.0,907.3 L373.4,908.2 L380.4,910.7 L381.9,909.4 L380.4,912.3 L373.4,912.1 L363.0,911.5Z M371.7,910.6 a1.4,1.0 0 1,1 2.9,0 a1.4,1.0 0 1,1 -2.9,0Z M363.0,915.2 L351.4,916.7 L343.7,918.3 L342.2,915.3 L343.7,916.5 L351.4,912.4 L363.0,910.6Z M355.2,918.0 a1.0,0.7 0 1,1 2.0,0 a1.0,0.7 0 1,1 -2.0,0Z M363.0,910.5 L369.4,912.6 L373.7,917.5 L375.2,916.4 L373.7,919.5 L369.4,917.4 L363.0,915.5Z M364.5,916.8 a1.2,0.9 0 1,1 2.5,0 a1.2,0.9 0 1,1 -2.5,0Z M363.0,920.7 L353.7,922.1 L347.6,923.5 L346.1,920.5 L347.6,921.7 L353.7,917.8 L363.0,916.2Z M357.3,921.8 a1.0,0.7 0 1,1 2.0,0 a1.0,0.7 0 1,1 -2.0,0Z M363.0,916.3 L374.7,918.7 L382.6,923.8 L384.1,922.5 L382.6,925.4 L374.7,922.7 L363.0,920.4Z M366.2,923.9 a1.1,0.8 0 1,1 2.3,0 a1.1,0.8 0 1,1 -2.3,0Z M363.0,926.5 L349.2,927.4 L339.9,928.1 L338.4,925.2 L339.9,926.5 L349.2,923.6 L363.0,922.3Z M353.6,927.9 a1.7,1.2 0 1,1 3.5,0 a1.7,1.2 0 1,1 -3.5,0Z M357.3,926.8 a1.8,1.2 0 1,1 3.5,0 a1.8,1.2 0 1,1 -3.5,0Z M363.0,922.5 L374.3,923.9 L381.8,927.3 L383.3,925.9 L381.8,928.7 L374.3,927.5 L363.0,926.3Z M371.2,926.9 a1.7,1.2 0 1,1 3.4,0 a1.7,1.2 0 1,1 -3.4,0Z M364.9,927.3 a1.6,1.1 0 1,1 3.1,0 a1.6,1.1 0 1,1 -3.1,0Z M363.0,935.1 L351.9,936.2 L344.5,937.1 L343.0,934.2 L344.5,935.5 L351.9,932.3 L363.0,931.0Z M346.9,934.4 a1.4,1.0 0 1,1 2.8,0 a1.4,1.0 0 1,1 -2.8,0Z M354.1,936.7 a1.2,0.8 0 1,1 2.3,0 a1.2,0.8 0 1,1 -2.3,0Z M363.0,930.6 L370.3,933.7 L375.1,940.3 L376.6,939.2 L375.1,942.3 L370.3,938.8 L363.0,935.9Z M373.0,939.0 a1.9,1.3 0 1,1 3.8,0 a1.9,1.3 0 1,1 -3.8,0Z M364.0,941.4 a1.6,1.1 0 1,1 3.3,0 a1.6,1.1 0 1,1 -3.3,0Z M363.0,941.7 L351.9,943.4 L344.5,945.2 L343.0,942.3 L344.5,943.7 L351.9,939.5 L363.0,937.6Z M359.9,943.0 a1.8,1.3 0 1,1 3.7,0 a1.8,1.3 0 1,1 -3.7,0Z M360.2,945.9 a2.0,1.4 0 1,1 3.9,0 a2.0,1.4 0 1,1 -3.9,0Z M363.0,937.4 L381.3,940.5 L393.5,947.1 L395.0,945.9 L393.5,949.0 L381.3,945.2 L363.0,942.2Z M362.1,946.1 a1.3,0.9 0 1,1 2.6,0 a1.3,0.9 0 1,1 -2.6,0Z M381.2,944.9 a2.0,1.4 0 1,1 4.0,0 a2.0,1.4 0 1,1 -4.0,0Z M363.0,950.0 L350.6,951.4 L342.3,952.5 L340.8,949.3 L342.3,950.3 L350.6,946.2 L363.0,944.4Z M351.9,951.2 a1.2,0.9 0 1,1 2.4,0 a1.2,0.9 0 1,1 -2.4,0Z M350.0,950.9 a1.9,1.3 0 1,1 3.8,0 a1.9,1.3 0 1,1 -3.8,0Z M363.0,944.5 L382.8,947.5 L396.0,954.0 L397.5,952.9 L396.0,956.2 L382.8,952.8 L363.0,949.9Z M362.2,954.3 a1.1,0.7 0 1,1 2.1,0 a1.1,0.7 0 1,1 -2.1,0Z M370.5,950.2 a1.5,1.0 0 1,1 3.0,0 a1.5,1.0 0 1,1 -3.0,0Z M363.0,955.1 L344.1,956.0 L331.6,956.9 L330.1,954.0 L331.6,955.4 L344.1,952.6 L363.0,951.4Z M356.8,953.2 a2.2,1.5 0 1,1 4.4,0 a2.2,1.5 0 1,1 -4.4,0Z M334.8,954.4 a1.4,1.0 0 1,1 2.8,0 a1.4,1.0 0 1,1 -2.8,0Z M363.0,950.9 L375.7,952.9 L384.2,957.6 L385.7,956.4 L384.2,959.6 L375.7,957.8 L363.0,956.0Z M374.0,955.3 a1.4,1.0 0 1,1 2.8,0 a1.4,1.0 0 1,1 -2.8,0Z M364.2,958.0 a1.5,1.0 0 1,1 2.9,0 a1.5,1.0 0 1,1 -2.9,0Z M363.0,959.6 L351.8,961.5 L344.3,963.4 L342.8,960.3 L344.3,961.4 L351.8,956.6 L363.0,954.4Z M346.6,960.9 a1.8,1.2 0 1,1 3.6,0 a1.8,1.2 0 1,1 -3.6,0Z M353.1,959.9 a1.9,1.3 0 1,1 3.8,0 a1.9,1.3 0 1,1 -3.8,0Z M363.0,954.6 L377.5,957.5 L387.2,963.7 L388.7,962.5 L387.2,965.6 L377.5,962.1 L363.0,959.3Z M367.8,962.7 a1.1,0.8 0 1,1 2.2,0 a1.1,0.8 0 1,1 -2.2,0Z M371.1,962.4 a2.2,1.5 0 1,1 4.3,0 a2.2,1.5 0 1,1 -4.3,0Z M363.0,964.6 L341.1,967.9 L326.4,972.1 L324.9,969.1 L326.4,970.4 L341.1,963.6 L363.0,960.3Z M344.2,965.4 a1.9,1.3 0 1,1 3.7,0 a1.9,1.3 0 1,1 -3.7,0Z M328.6,971.2 a2.0,1.4 0 1,1 3.9,0 a2.0,1.4 0 1,1 -3.9,0Z M363.0,960.1 L380.2,961.6 L391.6,965.3 L393.1,964.1 L391.6,967.3 L380.2,966.4 L363.0,965.2Z M362.1,964.7 a1.1,0.7 0 1,1 2.1,0 a1.1,0.7 0 1,1 -2.1,0Z M364.4,964.8 a1.2,0.9 0 1,1 2.5,0 a1.2,0.9 0 1,1 -2.5,0Z M363.0,968.9 L341.4,970.0 L327.0,970.8 L325.5,967.5 L327.0,968.5 L341.4,964.6 L363.0,963.0Z M336.9,971.6 a1.8,1.3 0 1,1 3.6,0 a1.8,1.3 0 1,1 -3.6,0Z M332.5,967.4 a1.7,1.2 0 1,1 3.4,0 a1.7,1.2 0 1,1 -3.4,0Z M363.0,963.1 L382.8,964.6 L396.0,968.5 L397.5,967.4 L396.0,970.7 L382.8,969.9 L363.0,968.7Z M392.0,966.2 a1.8,1.2 0 1,1 3.5,0 a1.8,1.2 0 1,1 -3.5,0Z M389.0,966.6 a1.3,0.9 0 1,1 2.7,0 a1.3,0.9 0 1,1 -2.7,0Z M363.0,975.4 L341.6,977.6 L327.4,980.1 L325.9,977.1 L327.4,978.3 L341.6,973.1 L363.0,970.7Z M347.7,975.9 a1.1,0.8 0 1,1 2.2,0 a1.1,0.8 0 1,1 -2.2,0Z M343.1,980.1 a2.1,1.5 0 1,1 4.2,0 a2.1,1.5 0 1,1 -4.2,0Z M363.0,970.3 L375.3,973.5 L383.5,980.4 L385.0,979.3 L383.5,982.6 L375.3,979.1 L363.0,976.1Z M374.9,978.4 a1.9,1.4 0 1,1 3.9,0 a1.9,1.4 0 1,1 -3.9,0Z M379.3,973.9 a2.1,1.5 0 1,1 4.2,0 a2.1,1.5 0 1,1 -4.2,0Z M363.0,985.6 L344.1,987.9 L331.5,990.5 L330.0,987.2 L331.5,988.2 L344.1,982.4 L363.0,979.7Z M355.2,984.3 a1.9,1.3 0 1,1 3.8,0 a1.9,1.3 0 1,1 -3.8,0Z M350.6,985.5 a2.5,1.7 0 1,1 5.0,0 a2.5,1.7 0 1,1 -5.0,0Z M363.0,980.0 L378.3,983.4 L388.5,990.5 L390.0,989.3 L388.5,992.4 L378.3,988.2 L363.0,984.9Z M383.4,988.1 a1.3,0.9 0 1,1 2.7,0 a1.3,0.9 0 1,1 -2.7,0Z M362.3,987.4 a1.3,0.9 0 1,1 2.5,0 a1.3,0.9 0 1,1 -2.5,0Z M363.0,989.9 L346.7,993.6 L335.9,998.5 L334.4,995.6 L335.9,997.0 L346.7,989.5 L363.0,985.8Z M334.4,994.0 a1.8,1.2 0 1,1 3.5,0 a1.8,1.2 0 1,1 -3.5,0Z M338.6,997.4 a1.8,1.2 0 1,1 3.6,0 a1.8,1.2 0 1,1 -3.6,0Z M363.0,985.6 L386.0,989.4 L401.3,997.5 L402.8,996.3 L401.3,999.4 L386.0,994.4 L363.0,990.5Z M389.7,999.3 a1.4,1.0 0 1,1 2.7,0 a1.4,1.0 0 1,1 -2.7,0Z M369.4,997.2 a2.6,1.8 0 1,1 5.1,0 a2.6,1.8 0 1,1 -5.1,0Z M363.0,999.2 L347.3,1001.0 L336.8,1003.1 L335.3,1000.1 L336.8,1001.3 L347.3,996.7 L363.0,994.7Z M355.5,1002.9 a2.6,1.8 0 1,1 5.1,0 a2.6,1.8 0 1,1 -5.1,0Z M354.6,1002.2 a1.7,1.2 0 1,1 3.5,0 a1.7,1.2 0 1,1 -3.5,0Z M341.4,997.0 a2.4,1.7 0 1,1 4.9,0 a2.4,1.7 0 1,1 -4.9,0Z M363.0,994.3 L379.6,996.9 L390.7,1002.6 L392.2,1001.5 L390.7,1004.7 L379.6,1002.2 L363.0,999.9Z M380.0,997.2 a1.8,1.2 0 1,1 3.5,0 a1.8,1.2 0 1,1 -3.5,0Z M373.8,999.5 a2.7,1.9 0 1,1 5.3,0 a2.7,1.9 0 1,1 -5.3,0Z M372.4,1000.5 a1.5,1.0 0 1,1 3.0,0 a1.5,1.0 0 1,1 -3.0,0Z M363.0,1008.5 L349.0,1012.6 L339.6,1017.6 L338.1,1014.1 L339.6,1014.9 L349.0,1005.8 L363.0,1001.5Z M358.3,1016.5 a2.4,1.7 0 1,1 4.8,0 a2.4,1.7 0 1,1 -4.8,0Z M343.1,1009.5 a2.2,1.5 0 1,1 4.4,0 a2.2,1.5 0 1,1 -4.4,0Z M341.4,1009.3 a2.8,1.9 0 1,1 5.5,0 a2.8,1.9 0 1,1 -5.5,0Z M363.0,1002.5 L387.4,1005.7 L403.7,1012.3 L405.2,1011.0 L403.7,1013.9 L387.4,1009.7 L363.0,1006.5Z M380.9,1009.2 a2.2,1.6 0 1,1 4.5,0 a2.2,1.6 0 1,1 -4.5,0Z M383.9,1007.4 a2.2,1.5 0 1,1 4.3,0 a2.2,1.5 0 1,1 -4.3,0Z M369.1,1013.9 a1.2,0.9 0 1,1 2.4,0 a1.2,0.9 0 1,1 -2.4,0Z M363.0,1017.6 L347.7,1020.0 L337.4,1022.4 L335.9,1019.0 L337.4,1019.9 L347.7,1013.9 L363.0,1011.2Z M345.8,1019.5 a1.9,1.3 0 1,1 3.8,0 a1.9,1.3 0 1,1 -3.8,0Z M352.6,1014.9 a2.4,1.7 0 1,1 4.8,0 a2.4,1.7 0 1,1 -4.8,0Z M342.0,1019.7 a1.7,1.2 0 1,1 3.4,0 a1.7,1.2 0 1,1 -3.4,0Z M363.0,1011.0 L380.8,1013.9 L392.6,1020.3 L394.1,1019.5 L392.6,1023.0 L380.8,1020.5 L363.0,1018.0Z M361.8,1018.2 a2.5,1.7 0 1,1 5.0,0 a2.5,1.7 0 1,1 -5.0,0Z M371.4,1017.3 a2.1,1.4 0 1,1 4.1,0 a2.1,1.4 0 1,1 -4.1,0Z M384.6,1018.8 a1.2,0.9 0 1,1 2.4,0 a1.2,0.9 0 1,1 -2.4,0Z M363.0,1022.7 L348.1,1024.3 L338.2,1025.5 L336.7,1022.0 L338.2,1022.9 L348.1,1018.0 L363.0,1016.0Z M343.1,1019.9 a1.8,1.3 0 1,1 3.7,0 a1.8,1.3 0 1,1 -3.7,0Z M342.4,1025.2 a2.2,1.5 0 1,1 4.4,0 a2.2,1.5 0 1,1 -4.4,0Z M357.3,1021.1 a2.1,1.4 0 1,1 4.1,0 a2.1,1.4 0 1,1 -4.1,0Z M363.0,1016.7 L387.3,1019.0 L403.5,1024.1 L405.0,1022.8 L403.5,1025.9 L387.3,1023.4 L363.0,1021.3Z M391.9,1020.9 a2.8,1.9 0 1,1 5.6,0 a2.8,1.9 0 1,1 -5.6,0Z M399.3,1022.4 a2.2,1.5 0 1,1 4.3,0 a2.2,1.5 0 1,1 -4.3,0Z M387.1,1026.7 a1.6,1.1 0 1,1 3.2,0 a1.6,1.1 0 1,1 -3.2,0Z M363.0,1031.7 L339.4,1035.3 L323.6,1039.5 L322.1,1036.0 L323.6,1036.9 L339.4,1028.8 L363.0,1025.0Z M360.9,1037.5 a2.0,1.4 0 1,1 4.1,0 a2.0,1.4 0 1,1 -4.1,0Z M340.2,1032.8 a2.1,1.5 0 1,1 4.2,0 a2.1,1.5 0 1,1 -4.2,0Z M359.6,1034.6 a1.9,1.4 0 1,1 3.9,0 a1.9,1.4 0 1,1 -3.9,0Z M363.0,1024.8 L388.4,1029.8 L405.3,1040.2 L406.8,1039.5 L405.3,1043.1 L388.4,1037.1 L363.0,1032.2Z M367.6,1040.4 a1.1,0.8 0 1,1 2.2,0 a1.1,0.8 0 1,1 -2.2,0Z M376.1,1030.8 a2.1,1.5 0 1,1 4.3,0 a2.1,1.5 0 1,1 -4.3,0Z M399.9,1034.5 a2.5,1.7 0 1,1 4.9,0 a2.5,1.7 0 1,1 -4.9,0Z M363.0,1036.3 L330.9,1039.8 L309.5,1043.8 L308.0,1040.1 L309.5,1040.8 L330.9,1032.5 L363.0,1028.7Z M321.9,1040.3 a2.7,1.9 0 1,1 5.5,0 a2.7,1.9 0 1,1 -5.5,0Z M310.5,1041.9 a2.6,1.8 0 1,1 5.3,0 a2.6,1.8 0 1,1 -5.3,0Z M335.9,1032.5 a1.2,0.8 0 1,1 2.3,0 a1.2,0.8 0 1,1 -2.3,0Z M363.0,1029.3 L381.0,1031.6 L393.1,1036.8 L394.6,1035.7 L393.1,1039.0 L381.0,1037.0 L363.0,1035.0Z M381.6,1036.0 a2.4,1.7 0 1,1 4.8,0 a2.4,1.7 0 1,1 -4.8,0Z M370.3,1036.5 a1.9,1.3 0 1,1 3.7,0 a1.9,1.3 0 1,1 -3.7,0Z M366.6,1039.2 a1.8,1.3 0 1,1 3.6,0 a1.8,1.3 0 1,1 -3.6,0Z M363.0,1039.9 L337.2,1043.8 L320.1,1048.9 L318.6,1045.9 L320.1,1047.1 L337.2,1039.1 L363.0,1035.3Z M361.6,1041.5 a1.3,0.9 0 1,1 2.6,0 a1.3,0.9 0 1,1 -2.6,0Z M341.9,1039.6 a1.4,1.0 0 1,1 2.8,0 a1.4,1.0 0 1,1 -2.8,0Z M344.4,1038.7 a1.2,0.9 0 1,1 2.5,0 a1.2,0.9 0 1,1 -2.5,0Z M363.0,1035.5 L380.8,1039.0 L392.7,1046.2 L394.2,1044.8 L392.7,1047.7 L380.8,1043.0 L363.0,1039.4Z M361.1,1042.5 a2.6,1.8 0 1,1 5.1,0 a2.6,1.8 0 1,1 -5.1,0Z M363.5,1042.0 a1.1,0.7 0 1,1 2.1,0 a1.1,0.7 0 1,1 -2.1,0Z M389.6,1039.3 a2.1,1.4 0 1,1 4.1,0 a2.1,1.4 0 1,1 -4.1,0Z M363.0,1043.7 L334.7,1046.7 L315.8,1050.6 L314.3,1047.6 L315.8,1048.9 L334.7,1042.6 L363.0,1039.6Z M357.8,1048.1 a2.8,2.0 0 1,1 5.6,0 a2.8,2.0 0 1,1 -5.6,0Z M339.5,1050.0 a1.6,1.1 0 1,1 3.1,0 a1.6,1.1 0 1,1 -3.1,0Z M348.7,1049.9 a1.8,1.2 0 1,1 3.6,0 a1.8,1.2 0 1,1 -3.6,0Z M363.0,1038.3 L379.5,1042.5 L390.5,1051.8 L392.0,1051.1 L390.5,1054.9 L379.5,1050.3 L363.0,1046.3Z M378.1,1041.1 a1.2,0.8 0 1,1 2.4,0 a1.2,0.8 0 1,1 -2.4,0Z M365.2,1041.6 a2.5,1.7 0 1,1 5.0,0 a2.5,1.7 0 1,1 -5.0,0Z M385.7,1046.3 a2.1,1.5 0 1,1 4.2,0 a2.1,1.5 0 1,1 -4.2,0Z M363.0,1052.1 L326.7,1057.8 L302.4,1065.7 L300.9,1062.8 L302.4,1064.2 L326.7,1053.7 L363.0,1048.3Z M343.3,1061.7 a1.2,0.8 0 1,1 2.4,0 a1.2,0.8 0 1,1 -2.4,0Z M343.3,1062.9 a1.9,1.3 0 1,1 3.9,0 a1.9,1.3 0 1,1 -3.9,0Z M341.3,1062.7 a1.4,1.0 0 1,1 2.8,0 a1.4,1.0 0 1,1 -2.8,0Z M363.0,1047.0 L395.2,1051.6 L416.7,1061.4 L418.2,1060.7 L416.7,1064.3 L395.2,1059.0 L363.0,1054.6Z M390.7,1062.7 a2.0,1.4 0 1,1 4.0,0 a2.0,1.4 0 1,1 -4.0,0Z M373.7,1061.2 a1.6,1.1 0 1,1 3.3,0 a1.6,1.1 0 1,1 -3.3,0Z M369.4,1060.8 a2.7,1.9 0 1,1 5.4,0 a2.7,1.9 0 1,1 -5.4,0Z M363.0,1060.0 L336.0,1062.1 L318.0,1063.9 L316.5,1060.4 L318.0,1061.2 L336.0,1055.4 L363.0,1052.9Z M359.3,1060.9 a2.7,1.9 0 1,1 5.3,0 a2.7,1.9 0 1,1 -5.3,0Z M356.1,1059.5 a2.6,1.8 0 1,1 5.1,0 a2.6,1.8 0 1,1 -5.1,0Z M320.3,1062.8 a3.2,2.2 0 1,1 6.4,0 a3.2,2.2 0 1,1 -6.4,0Z M363.0,1053.5 L395.8,1056.6 L417.7,1063.4 L419.2,1062.3 L417.7,1065.5 L395.8,1061.9 L363.0,1058.9Z M365.7,1061.8 a1.3,0.9 0 1,1 2.5,0 a1.3,0.9 0 1,1 -2.5,0Z M391.6,1056.5 a2.6,1.8 0 1,1 5.2,0 a2.6,1.8 0 1,1 -5.2,0Z M373.6,1056.2 a2.6,1.8 0 1,1 5.1,0 a2.6,1.8 0 1,1 -5.1,0Z M453.8,938.0 L456.2,938.0 L457.5,1100.0 L452.5,1100.0Z M455.0,942.4 L452.4,943.6 L450.7,944.7 L449.2,941.9 L450.7,943.3 L452.4,940.1 L455.0,938.8Z M450.0,945.6 a1.0,0.7 0 1,1 2.0,0 a1.0,0.7 0 1,1 -2.0,0Z M455.0,938.8 L457.3,940.4 L458.8,943.9 L460.3,942.5 L458.8,945.3 L457.3,943.8 L455.0,942.4Z M457.4,941.9 a1.0,0.7 0 1,1 2.0,0 a1.0,0.7 0 1,1 -2.0,0Z M455.0,949.3 L451.6,949.6 L449.4,949.5 L447.9,946.6 L449.4,948.0 L451.6,946.2 L455.0,945.6Z M452.4,950.8 a1.0,0.7 0 1,1 2.1,0 a1.0,0.7 0 1,1 -2.1,0Z M455.0,945.5 L459.0,946.3 L461.7,948.5 L463.2,947.1 L461.7,949.9 L459.0,949.8 L455.0,949.4Z M454.8,949.4 a1.0,0.7 0 1,1 2.1,0 a1.0,0.7 0 1,1 -2.1,0Z M455.0,953.8 L449.7,955.5 L446.2,957.5 L444.7,954.6 L446.2,956.0 L449.7,951.9 L455.0,950.1Z M445.4,956.2 a1.1,0.7 0 1,1 2.1,0 a1.1,0.7 0 1,1 -2.1,0Z M455.0,949.9 L460.2,951.6 L463.6,955.2 L465.1,953.9 L463.6,956.8 L460.2,955.5 L455.0,954.1Z M461.7,953.8 a1.0,0.7 0 1,1 2.1,0 a1.0,0.7 0 1,1 -2.1,0Z M455.0,958.0 L452.4,958.9 L450.6,959.5 L449.1,956.6 L450.6,958.0 L452.4,955.2 L455.0,954.0Z M453.9,958.6 a1.1,0.8 0 1,1 2.2,0 a1.1,0.8 0 1,1 -2.2,0Z M455.0,954.1 L460.4,955.5 L464.0,958.8 L465.5,957.4 L464.0,960.2 L460.4,959.1 L455.0,957.9Z M458.0,958.4 a1.3,0.9 0 1,1 2.7,0 a1.3,0.9 0 1,1 -2.7,0Z M455.0,960.9 L449.4,962.8 L445.6,965.1 L444.1,962.3 L445.6,963.7 L449.4,959.3 L455.0,957.3Z M446.6,962.4 a1.0,0.7 0 1,1 2.0,0 a1.0,0.7 0 1,1 -2.0,0Z M455.0,957.0 L457.8,958.1 L459.7,960.7 L461.2,959.5 L459.7,962.4 L457.8,962.1 L455.0,961.4Z M454.5,963.5 a1.4,1.0 0 1,1 2.8,0 a1.4,1.0 0 1,1 -2.8,0Z M455.0,966.9 L450.4,968.3 L447.3,969.7 L445.8,966.7 L447.3,968.0 L450.4,964.1 L455.0,962.4Z M452.7,969.9 a1.5,1.0 0 1,1 2.9,0 a1.5,1.0 0 1,1 -2.9,0Z M455.0,962.7 L458.2,965.1 L460.3,970.1 L461.8,968.7 L460.3,971.5 L458.2,968.7 L455.0,966.4Z M455.6,970.8 a1.2,0.8 0 1,1 2.4,0 a1.2,0.8 0 1,1 -2.4,0Z M455.0,976.1 L448.3,977.4 L443.8,978.6 L442.3,975.7 L443.8,977.0 L448.3,973.5 L455.0,972.0Z M451.5,974.2 a1.5,1.0 0 1,1 3.0,0 a1.5,1.0 0 1,1 -3.0,0Z M455.0,972.2 L464.3,973.4 L470.5,976.3 L472.0,974.9 L470.5,977.7 L464.3,976.8 L455.0,975.8Z M469.1,976.5 a1.2,0.8 0 1,1 2.3,0 a1.2,0.8 0 1,1 -2.3,0Z M455.0,983.4 L445.5,985.2 L439.2,987.0 L437.7,984.1 L439.2,985.3 L445.5,981.0 L455.0,979.1Z M452.7,985.7 a1.4,1.0 0 1,1 2.9,0 a1.4,1.0 0 1,1 -2.9,0Z M439.9,983.4 a1.8,1.3 0 1,1 3.7,0 a1.8,1.3 0 1,1 -3.7,0Z M455.0,979.3 L463.2,981.9 L468.7,987.4 L470.2,986.0 L468.7,988.8 L463.2,985.6 L455.0,983.1Z M459.7,984.2 a1.3,0.9 0 1,1 2.5,0 a1.3,0.9 0 1,1 -2.5,0Z M459.4,990.5 a1.9,1.3 0 1,1 3.7,0 a1.9,1.3 0 1,1 -3.7,0Z M455.0,989.7 L446.9,992.3 L441.6,995.3 L440.1,992.3 L441.6,993.6 L446.9,987.9 L455.0,985.2Z M449.7,990.2 a1.4,1.0 0 1,1 2.8,0 a1.4,1.0 0 1,1 -2.8,0Z M440.2,995.9 a1.5,1.0 0 1,1 3.0,0 a1.5,1.0 0 1,1 -3.0,0Z M455.0,985.3 L462.0,986.6 L466.7,989.7 L468.2,988.4 L466.7,991.3 L462.0,990.5 L455.0,989.5Z M462.3,991.0 a1.8,1.2 0 1,1 3.6,0 a1.8,1.2 0 1,1 -3.6,0Z M462.3,991.2 a1.8,1.2 0 1,1 3.5,0 a1.8,1.2 0 1,1 -3.5,0Z M455.0,995.4 L444.6,996.9 L437.6,998.4 L436.1,995.4 L437.6,996.6 L444.6,992.5 L455.0,990.7Z M439.6,996.7 a2.1,1.4 0 1,1 4.1,0 a2.1,1.4 0 1,1 -4.1,0Z M442.1,995.3 a1.6,1.1 0 1,1 3.2,0 a1.6,1.1 0 1,1 -3.2,0Z M455.0,990.7 L461.9,993.4 L466.5,999.2 L468.0,997.9 L466.5,1001.0 L461.9,997.9 L455.0,995.3Z M463.0,999.6 a1.4,1.0 0 1,1 2.8,0 a1.4,1.0 0 1,1 -2.8,0Z M461.0,1000.4 a1.4,1.0 0 1,1 2.8,0 a1.4,1.0 0 1,1 -2.8,0Z M455.0,1005.2 L441.8,1008.0 L433.1,1011.0 L431.6,1007.6 L433.1,1008.6 L441.8,1002.1 L455.0,999.1Z M432.8,1007.1 a1.2,0.9 0 1,1 2.4,0 a1.2,0.9 0 1,1 -2.4,0Z M434.7,1010.5 a1.9,1.3 0 1,1 3.8,0 a1.9,1.3 0 1,1 -3.8,0Z M455.0,999.8 L466.9,1002.9 L474.8,1009.3 L476.3,1007.9 L474.8,1010.8 L466.9,1006.9 L455.0,1003.9Z M468.9,1008.3 a1.5,1.1 0 1,1 3.1,0 a1.5,1.1 0 1,1 -3.1,0Z M465.4,1009.9 a1.9,1.4 0 1,1 3.9,0 a1.9,1.4 0 1,1 -3.9,0Z M455.0,1007.9 L447.7,1010.1 L442.9,1012.5 L441.4,1009.3 L442.9,1010.4 L447.7,1005.0 L455.0,1002.6Z M451.3,1011.0 a1.1,0.7 0 1,1 2.1,0 a1.1,0.7 0 1,1 -2.1,0Z M448.1,1006.1 a1.2,0.8 0 1,1 2.4,0 a1.2,0.8 0 1,1 -2.4,0Z M455.0,1003.0 L463.7,1004.7 L469.5,1008.7 L471.0,1007.4 L469.5,1010.3 L463.7,1008.6 L455.0,1007.1Z M453.7,1007.8 a1.8,1.3 0 1,1 3.7,0 a1.8,1.3 0 1,1 -3.7,0Z M462.5,1008.2 a1.0,0.7 0 1,1 2.0,0 a1.0,0.7 0 1,1 -2.0,0Z M455.0,1012.8 L446.1,1015.2 L440.1,1018.1 L438.6,1015.2 L440.1,1016.6 L446.1,1011.3 L455.0,1008.9Z M440.7,1012.9 a1.9,1.3 0 1,1 3.8,0 a1.9,1.3 0 1,1 -3.8,0Z M451.7,1015.0 a1.9,1.3 0 1,1 3.7,0 a1.9,1.3 0 1,1 -3.7,0Z M455.0,1008.6 L470.5,1012.1 L480.9,1019.6 L482.4,1018.4 L480.9,1021.5 L470.5,1017.0 L455.0,1013.4Z M474.8,1017.8 a1.2,0.8 0 1,1 2.4,0 a1.2,0.8 0 1,1 -2.4,0Z M468.0,1018.8 a2.4,1.7 0 1,1 4.9,0 a2.4,1.7 0 1,1 -4.9,0Z M455.0,1019.8 L444.6,1024.0 L437.6,1029.7 L436.1,1026.9 L437.6,1028.3 L444.6,1020.2 L455.0,1016.2Z M451.9,1025.8 a1.2,0.9 0 1,1 2.5,0 a1.2,0.9 0 1,1 -2.5,0Z M442.4,1028.8 a1.7,1.2 0 1,1 3.4,0 a1.7,1.2 0 1,1 -3.4,0Z M455.0,1015.2 L464.1,1017.5 L470.2,1022.8 L471.7,1021.9 L470.2,1025.4 L464.1,1023.8 L455.0,1022.0Z M458.8,1026.4 a2.0,1.4 0 1,1 3.9,0 a2.0,1.4 0 1,1 -3.9,0Z M457.3,1025.3 a1.7,1.2 0 1,1 3.4,0 a1.7,1.2 0 1,1 -3.4,0Z M455.0,1025.7 L437.0,1028.6 L425.0,1032.2 L423.5,1029.2 L425.0,1030.4 L437.0,1024.1 L455.0,1021.1Z M438.9,1025.6 a1.8,1.2 0 1,1 3.5,0 a1.8,1.2 0 1,1 -3.5,0Z M445.2,1031.8 a1.0,0.7 0 1,1 2.0,0 a1.0,0.7 0 1,1 -2.0,0Z M436.7,1027.8 a2.4,1.6 0 1,1 4.7,0 a2.4,1.6 0 1,1 -4.7,0Z M455.0,1021.3 L464.8,1023.6 L471.4,1028.6 L472.9,1027.2 L471.4,1030.2 L464.8,1027.6 L455.0,1025.4Z M469.4,1026.4 a1.8,1.3 0 1,1 3.6,0 a1.8,1.3 0 1,1 -3.6,0Z M464.3,1028.9 a1.2,0.8 0 1,1 2.4,0 a1.2,0.8 0 1,1 -2.4,0Z M465.9,1026.3 a1.6,1.1 0 1,1 3.2,0 a1.6,1.1 0 1,1 -3.2,0Z M455.0,1031.0 L441.4,1033.9 L432.3,1037.4 L430.8,1034.3 L432.3,1035.5 L441.4,1029.1 L455.0,1026.1Z M436.6,1032.9 a1.5,1.0 0 1,1 2.9,0 a1.5,1.0 0 1,1 -2.9,0Z M442.7,1038.3 a2.0,1.4 0 1,1 4.0,0 a2.0,1.4 0 1,1 -4.0,0Z M452.6,1035.7 a2.1,1.4 0 1,1 4.1,0 a2.1,1.4 0 1,1 -4.1,0Z M455.0,1026.0 L470.7,1029.5 L481.1,1036.9 L482.6,1035.8 L481.1,1039.0 L470.7,1034.8 L455.0,1031.3Z M476.3,1032.8 a2.6,1.8 0 1,1 5.1,0 a2.6,1.8 0 1,1 -5.1,0Z M459.0,1033.2 a1.1,0.8 0 1,1 2.2,0 a1.1,0.8 0 1,1 -2.2,0Z M475.3,1036.0 a1.5,1.1 0 1,1 3.1,0 a1.5,1.1 0 1,1 -3.1,0Z M455.0,1039.9 L435.5,1041.7 L422.6,1043.5 L421.1,1040.3 L422.6,1041.4 L435.5,1036.5 L455.0,1034.4Z M435.9,1040.2 a1.3,0.9 0 1,1 2.6,0 a1.3,0.9 0 1,1 -2.6,0Z M434.5,1041.4 a1.5,1.0 0 1,1 2.9,0 a1.5,1.0 0 1,1 -2.9,0Z M427.4,1043.0 a1.1,0.7 0 1,1 2.1,0 a1.1,0.7 0 1,1 -2.1,0Z M455.0,1033.7 L472.1,1038.6 L483.5,1048.9 L485.0,1048.2 L483.5,1051.9 L472.1,1046.1 L455.0,1041.3Z M473.5,1039.4 a1.4,1.0 0 1,1 2.9,0 a1.4,1.0 0 1,1 -2.9,0Z M472.1,1051.6 a1.3,0.9 0 1,1 2.5,0 a1.3,0.9 0 1,1 -2.5,0Z M461.1,1049.5 a2.2,1.6 0 1,1 4.5,0 a2.2,1.6 0 1,1 -4.5,0Z M455.0,1044.6 L444.4,1048.6 L437.4,1054.0 L435.9,1051.1 L437.4,1052.5 L444.4,1044.7 L455.0,1040.9Z M452.0,1046.5 a1.1,0.8 0 1,1 2.2,0 a1.1,0.8 0 1,1 -2.2,0Z M443.6,1052.9 a1.3,0.9 0 1,1 2.6,0 a1.3,0.9 0 1,1 -2.6,0Z M445.3,1047.4 a2.0,1.4 0 1,1 4.1,0 a2.0,1.4 0 1,1 -4.1,0Z M455.0,1040.8 L475.8,1043.8 L489.7,1050.1 L491.2,1048.7 L489.7,1051.6 L475.8,1047.7 L455.0,1044.7Z M477.1,1045.3 a2.1,1.5 0 1,1 4.2,0 a2.1,1.5 0 1,1 -4.2,0Z M485.0,1048.7 a1.6,1.1 0 1,1 3.1,0 a1.6,1.1 0 1,1 -3.1,0Z M472.0,1046.6 a2.1,1.5 0 1,1 4.2,0 a2.1,1.5 0 1,1 -4.2,0Z M455.0,1050.6 L443.1,1053.4 L435.1,1056.4 L433.6,1052.8 L435.1,1053.7 L443.1,1046.8 L455.0,1043.8Z M450.2,1054.3 a1.2,0.8 0 1,1 2.4,0 a1.2,0.8 0 1,1 -2.4,0Z M439.4,1047.2 a2.3,1.6 0 1,1 4.6,0 a2.3,1.6 0 1,1 -4.6,0Z M448.5,1055.2 a1.7,1.2 0 1,1 3.4,0 a1.7,1.2 0 1,1 -3.4,0Z M455.0,1043.8 L474.6,1045.6 L487.6,1050.3 L489.1,1049.4 L487.6,1052.9 L474.6,1052.0 L455.0,1050.6Z M454.2,1049.7 a2.5,1.8 0 1,1 5.0,0 a2.5,1.8 0 1,1 -5.0,0Z M459.8,1049.6 a2.5,1.7 0 1,1 4.9,0 a2.5,1.7 0 1,1 -4.9,0Z M480.0,1048.7 a1.8,1.2 0 1,1 3.6,0 a1.8,1.2 0 1,1 -3.6,0Z M455.0,1054.2 L441.2,1058.2 L432.1,1063.4 L430.6,1060.3 L432.1,1061.4 L441.2,1053.0 L455.0,1049.0Z M443.7,1054.8 a2.5,1.7 0 1,1 5.0,0 a2.5,1.7 0 1,1 -5.0,0Z M434.3,1058.3 a2.2,1.5 0 1,1 4.4,0 a2.2,1.5 0 1,1 -4.4,0Z M439.5,1059.6 a1.9,1.3 0 1,1 3.8,0 a1.9,1.3 0 1,1 -3.8,0Z M455.0,1049.2 L465.4,1051.1 L472.4,1055.5 L473.9,1054.2 L472.4,1057.2 L465.4,1055.4 L455.0,1053.7Z M452.9,1057.1 a2.8,1.9 0 1,1 5.5,0 a2.8,1.9 0 1,1 -5.5,0Z M452.6,1056.0 a2.4,1.7 0 1,1 4.9,0 a2.4,1.7 0 1,1 -4.9,0Z M461.1,1053.6 a1.4,1.0 0 1,1 2.7,0 a1.4,1.0 0 1,1 -2.7,0Z M455.0,1060.0 L440.2,1062.9 L430.3,1066.0 L428.8,1062.3 L430.3,1062.9 L440.2,1055.5 L455.0,1052.2Z M449.9,1058.0 a1.4,1.0 0 1,1 2.8,0 a1.4,1.0 0 1,1 -2.8,0Z M446.8,1058.5 a1.1,0.8 0 1,1 2.2,0 a1.1,0.8 0 1,1 -2.2,0Z M429.5,1061.1 a2.6,1.9 0 1,1 5.3,0 a2.6,1.9 0 1,1 -5.3,0Z M455.0,1052.1 L474.2,1055.7 L486.9,1063.8 L488.4,1063.2 L486.9,1067.0 L474.2,1063.5 L455.0,1060.3Z M456.2,1062.6 a2.6,1.8 0 1,1 5.2,0 a2.6,1.8 0 1,1 -5.2,0Z M477.2,1057.1 a1.1,0.7 0 1,1 2.1,0 a1.1,0.7 0 1,1 -2.1,0Z M459.0,1056.8 a3.3,2.3 0 1,1 6.7,0 a3.3,2.3 0 1,1 -6.7,0Z M296.8,985.0 L299.2,985.0 L300.5,1100.0 L295.5,1100.0Z M298.0,989.4 L296.7,990.1 L295.8,990.6 L294.3,987.8 L295.8,989.2 L296.7,986.8 L298.0,985.8Z M295.0,988.5 a1.1,0.7 0 1,1 2.1,0 a1.1,0.7 0 1,1 -2.1,0Z M298.0,985.8 L298.9,987.0 L299.5,989.8 L301.0,988.4 L299.5,991.2 L298.9,990.4 L298.0,989.5Z M297.0,990.4 a1.0,0.7 0 1,1 2.1,0 a1.0,0.7 0 1,1 -2.1,0Z M298.0,997.5 L296.4,998.3 L295.3,998.9 L293.8,996.1 L295.3,997.5 L296.4,994.9 L298.0,993.9Z M295.4,999.6 a1.3,0.9 0 1,1 2.5,0 a1.3,0.9 0 1,1 -2.5,0Z M298.0,993.9 L300.1,995.6 L301.4,999.5 L302.9,998.2 L301.4,1001.0 L300.1,999.1 L298.0,997.5Z M297.9,1000.7 a1.1,0.8 0 1,1 2.3,0 a1.1,0.8 0 1,1 -2.3,0Z M298.0,1001.3 L295.9,1002.1 L294.4,1002.7 L292.9,999.9 L294.4,1001.2 L295.9,998.5 L298.0,997.4Z M293.7,1002.0 a1.4,1.0 0 1,1 2.8,0 a1.4,1.0 0 1,1 -2.8,0Z M298.0,997.3 L299.6,998.7 L300.7,1001.9 L302.2,1000.6 L300.7,1003.5 L299.6,1002.5 L298.0,1001.4Z M297.0,1003.1 a1.1,0.7 0 1,1 2.1,0 a1.1,0.7 0 1,1 -2.1,0Z M298.0,1009.1 L295.7,1010.8 L294.1,1012.6 L292.6,1009.5 L294.1,1010.7 L295.7,1006.2 L298.0,1004.2Z M295.8,1006.2 a1.4,1.0 0 1,1 2.8,0 a1.4,1.0 0 1,1 -2.8,0Z M298.0,1004.4 L300.0,1005.5 L301.4,1008.2 L302.9,1006.9 L301.4,1009.9 L300.0,1009.5 L298.0,1008.7Z M299.7,1008.3 a1.4,1.0 0 1,1 2.9,0 a1.4,1.0 0 1,1 -2.9,0Z M298.0,1012.6 L293.8,1013.6 L291.0,1014.3 L289.5,1011.3 L291.0,1012.5 L293.8,1009.3 L298.0,1008.0Z M289.8,1011.4 a1.5,1.0 0 1,1 3.0,0 a1.5,1.0 0 1,1 -3.0,0Z M298.0,1007.8 L300.7,1009.3 L302.5,1013.0 L304.0,1011.8 L302.5,1015.0 L300.7,1014.2 L298.0,1013.0Z M300.7,1012.2 a1.8,1.2 0 1,1 3.6,0 a1.8,1.2 0 1,1 -3.6,0Z M298.0,1017.1 L293.1,1017.9 L289.9,1018.5 L288.4,1015.5 L289.9,1016.8 L293.1,1013.9 L298.0,1012.7Z M291.4,1018.5 a1.1,0.8 0 1,1 2.2,0 a1.1,0.8 0 1,1 -2.2,0Z M293.7,1018.8 a1.4,1.0 0 1,1 2.9,0 a1.4,1.0 0 1,1 -2.9,0Z M298.0,1012.6 L302.1,1015.8 L304.8,1022.5 L306.3,1021.3 L304.8,1024.3 L302.1,1020.4 L298.0,1017.3Z M296.7,1022.4 a1.4,1.0 0 1,1 2.8,0 a1.4,1.0 0 1,1 -2.8,0Z M298.4,1019.2 a1.1,0.8 0 1,1 2.2,0 a1.1,0.8 0 1,1 -2.2,0Z M298.0,1024.0 L294.6,1027.2 L292.3,1031.3 L290.8,1028.4 L292.3,1029.8 L294.6,1023.5 L298.0,1020.4Z M291.7,1030.2 a1.9,1.3 0 1,1 3.7,0 a1.9,1.3 0 1,1 -3.7,0Z M295.3,1029.4 a1.3,0.9 0 1,1 2.6,0 a1.3,0.9 0 1,1 -2.6,0Z M298.0,1020.1 L305.4,1022.3 L310.4,1027.1 L311.9,1025.8 L310.4,1028.8 L305.4,1026.6 L298.0,1024.6Z M307.4,1025.9 a1.2,0.8 0 1,1 2.4,0 a1.2,0.8 0 1,1 -2.4,0Z M306.2,1023.3 a2.2,1.5 0 1,1 4.4,0 a2.2,1.5 0 1,1 -4.4,0Z M298.0,1029.3 L290.0,1033.1 L284.7,1037.9 L283.2,1034.7 L284.7,1035.8 L290.0,1027.9 L298.0,1024.0Z M296.3,1027.1 a1.5,1.1 0 1,1 3.1,0 a1.5,1.1 0 1,1 -3.1,0Z M288.7,1037.4 a1.2,0.8 0 1,1 2.4,0 a1.2,0.8 0 1,1 -2.4,0Z M298.0,1024.5 L304.1,1026.2 L308.1,1029.8 L309.6,1028.5 L308.1,1031.3 L304.1,1029.8 L298.0,1028.4Z M302.0,1029.3 a1.6,1.1 0 1,1 3.2,0 a1.6,1.1 0 1,1 -3.2,0Z M302.9,1030.5 a2.2,1.5 0 1,1 4.4,0 a2.2,1.5 0 1,1 -4.4,0Z M298.0,1034.2 L290.6,1037.4 L285.7,1041.3 L284.2,1037.9 L285.7,1038.9 L290.6,1031.4 L298.0,1027.9Z M290.1,1031.1 a1.8,1.3 0 1,1 3.6,0 a1.8,1.3 0 1,1 -3.6,0Z M293.7,1036.5 a2.2,1.5 0 1,1 4.3,0 a2.2,1.5 0 1,1 -4.3,0Z M298.0,1028.6 L302.7,1030.0 L305.8,1033.3 L307.3,1032.0 L305.8,1034.9 L302.7,1033.9 L298.0,1032.7Z M300.3,1033.4 a1.3,0.9 0 1,1 2.5,0 a1.3,0.9 0 1,1 -2.5,0Z M299.4,1035.4 a2.4,1.7 0 1,1 4.8,0 a2.4,1.7 0 1,1 -4.8,0Z M298.0,1036.8 L288.6,1040.7 L282.3,1045.7 L280.8,1042.5 L282.3,1043.6 L288.6,1035.3 L298.0,1031.4Z M288.7,1042.0 a1.1,0.8 0 1,1 2.2,0 a1.1,0.8 0 1,1 -2.2,0Z M285.7,1040.2 a2.2,1.5 0 1,1 4.3,0 a2.2,1.5 0 1,1 -4.3,0Z M298.0,1031.2 L305.8,1032.9 L311.1,1037.1 L312.6,1036.1 L311.1,1039.4 L305.8,1038.4 L298.0,1037.1Z M302.8,1037.5 a1.1,0.8 0 1,1 2.2,0 a1.1,0.8 0 1,1 -2.2,0Z M304.5,1037.6 a1.4,1.0 0 1,1 2.7,0 a1.4,1.0 0 1,1 -2.7,0Z M298.0,1046.6 L288.9,1049.9 L282.9,1053.7 L281.4,1050.1 L282.9,1051.0 L288.9,1043.2 L298.0,1039.6Z M295.2,1049.9 a2.3,1.6 0 1,1 4.6,0 a2.3,1.6 0 1,1 -4.6,0Z M289.7,1043.2 a2.2,1.5 0 1,1 4.3,0 a2.2,1.5 0 1,1 -4.3,0Z M293.4,1043.7 a1.9,1.3 0 1,1 3.8,0 a1.9,1.3 0 1,1 -3.8,0Z M298.0,1039.8 L305.8,1041.4 L311.0,1045.6 L312.5,1044.7 L311.0,1048.2 L305.8,1047.5 L298.0,1046.3Z M299.5,1045.7 a2.8,2.0 0 1,1 5.6,0 a2.8,2.0 0 1,1 -5.6,0Z M303.1,1049.6 a2.6,1.8 0 1,1 5.2,0 a2.6,1.8 0 1,1 -5.2,0Z M296.9,1044.3 a2.5,1.7 0 1,1 5.0,0 a2.5,1.7 0 1,1 -5.0,0Z M298.0,1049.0 L291.9,1050.9 L287.9,1053.0 L286.4,1050.1 L287.9,1051.4 L291.9,1047.0 L298.0,1044.9Z M286.0,1053.1 a2.5,1.8 0 1,1 5.0,0 a2.5,1.8 0 1,1 -5.0,0Z M291.0,1050.4 a2.3,1.6 0 1,1 4.6,0 a2.3,1.6 0 1,1 -4.6,0Z M294.2,1049.3 a1.4,1.0 0 1,1 2.8,0 a1.4,1.0 0 1,1 -2.8,0Z M298.0,1045.1 L305.6,1049.9 L310.7,1059.4 L312.2,1058.1 L310.7,1060.9 L305.6,1053.8 L298.0,1048.7Z M297.8,1057.5 a1.5,1.1 0 1,1 3.0,0 a1.5,1.1 0 1,1 -3.0,0Z M307.7,1055.3 a1.1,0.8 0 1,1 2.2,0 a1.1,0.8 0 1,1 -2.2,0Z M298.5,1052.8 a3.0,2.1 0 1,1 6.0,0 a3.0,2.1 0 1,1 -6.0,0Z M298.0,1059.9 L285.8,1065.1 L277.7,1071.4 L276.2,1067.7 L277.7,1068.4 L285.8,1057.5 L298.0,1052.2Z M277.6,1069.5 a1.7,1.2 0 1,1 3.5,0 a1.7,1.2 0 1,1 -3.5,0Z M291.2,1065.3 a1.8,1.3 0 1,1 3.6,0 a1.8,1.3 0 1,1 -3.6,0Z M279.4,1061.4 a1.6,1.2 0 1,1 3.3,0 a1.6,1.2 0 1,1 -3.3,0Z M298.0,1052.7 L306.7,1056.8 L312.5,1065.3 L314.0,1064.4 L312.5,1067.8 L306.7,1062.9 L298.0,1059.0Z M302.6,1058.2 a1.8,1.2 0 1,1 3.5,0 a1.8,1.2 0 1,1 -3.5,0Z M297.8,1061.7 a2.7,1.9 0 1,1 5.3,0 a2.7,1.9 0 1,1 -5.3,0Z M305.8,1058.3 a1.8,1.3 0 1,1 3.6,0 a1.8,1.3 0 1,1 -3.6,0Z M539.8,972.0 L542.2,972.0 L543.5,1100.0 L538.5,1100.0Z M541.0,976.5 L539.1,977.4 L537.8,978.2 L536.3,975.4 L537.8,976.8 L539.1,973.9 L541.0,972.8Z M538.5,977.5 a1.0,0.7 0 1,1 2.0,0 a1.0,0.7 0 1,1 -2.0,0Z M541.0,972.8 L543.0,974.0 L544.4,977.0 L545.9,975.6 L544.4,978.4 L543.0,977.5 L541.0,976.5Z M540.3,975.4 a1.0,0.7 0 1,1 2.1,0 a1.0,0.7 0 1,1 -2.1,0Z M541.0,984.6 L539.1,986.5 L537.9,988.5 L536.4,985.6 L537.9,986.9 L539.1,982.5 L541.0,980.5Z M537.9,985.9 a1.0,0.7 0 1,1 2.0,0 a1.0,0.7 0 1,1 -2.0,0Z M541.0,980.6 L544.2,981.4 L546.4,983.4 L547.9,982.0 L546.4,984.9 L544.2,984.8 L541.0,984.3Z M541.2,983.3 a1.1,0.8 0 1,1 2.2,0 a1.1,0.8 0 1,1 -2.2,0Z M541.0,993.5 L536.5,995.2 L533.5,997.0 L532.0,994.1 L533.5,995.4 L536.5,991.2 L541.0,989.4Z M534.5,994.0 a1.5,1.1 0 1,1 3.1,0 a1.5,1.1 0 1,1 -3.1,0Z M541.0,989.3 L547.3,991.5 L551.6,996.3 L553.1,995.1 L551.6,998.0 L547.3,995.7 L541.0,993.7Z M543.3,993.1 a1.0,0.7 0 1,1 2.1,0 a1.0,0.7 0 1,1 -2.1,0Z M541.0,1001.9 L535.9,1004.4 L532.4,1007.4 L530.9,1004.5 L532.4,1005.8 L535.9,1000.3 L541.0,997.7Z M531.6,1005.4 a1.2,0.8 0 1,1 2.3,0 a1.2,0.8 0 1,1 -2.3,0Z M541.0,997.4 L548.7,999.3 L553.8,1003.6 L555.3,1002.4 L553.8,1005.6 L548.7,1004.1 L541.0,1002.5Z M544.5,1001.4 a1.6,1.1 0 1,1 3.2,0 a1.6,1.1 0 1,1 -3.2,0Z M541.0,1007.6 L537.0,1009.0 L534.3,1010.1 L532.8,1006.9 L534.3,1008.0 L537.0,1003.9 L541.0,1002.2Z M534.8,1005.3 a1.1,0.8 0 1,1 2.2,0 a1.1,0.8 0 1,1 -2.2,0Z M539.1,1008.5 a1.5,1.1 0 1,1 3.0,0 a1.5,1.1 0 1,1 -3.0,0Z M541.0,1002.4 L547.0,1003.8 L551.1,1007.3 L552.6,1006.1 L551.1,1009.2 L547.0,1008.4 L541.0,1007.3Z M540.9,1007.0 a1.4,1.0 0 1,1 2.8,0 a1.4,1.0 0 1,1 -2.8,0Z M541.4,1008.0 a1.7,1.2 0 1,1 3.5,0 a1.7,1.2 0 1,1 -3.5,0Z M541.0,1012.1 L531.5,1013.4 L525.2,1014.7 L523.7,1011.7 L525.2,1012.9 L531.5,1009.2 L541.0,1007.7Z M525.5,1012.3 a2.0,1.4 0 1,1 4.1,0 a2.0,1.4 0 1,1 -4.1,0Z M536.3,1012.6 a1.3,0.9 0 1,1 2.7,0 a1.3,0.9 0 1,1 -2.7,0Z M541.0,1007.9 L546.8,1009.1 L550.7,1012.2 L552.2,1010.8 L550.7,1013.6 L546.8,1012.7 L541.0,1011.7Z M545.3,1011.8 a1.4,1.0 0 1,1 2.8,0 a1.4,1.0 0 1,1 -2.8,0Z M543.8,1014.1 a1.6,1.1 0 1,1 3.2,0 a1.6,1.1 0 1,1 -3.2,0Z M541.0,1022.2 L534.9,1023.4 L530.9,1024.2 L529.4,1020.9 L530.9,1021.9 L534.9,1017.8 L541.0,1016.2Z M530.8,1019.9 a2.0,1.4 0 1,1 3.9,0 a2.0,1.4 0 1,1 -3.9,0Z M529.4,1022.0 a2.2,1.5 0 1,1 4.3,0 a2.2,1.5 0 1,1 -4.3,0Z M541.0,1016.9 L550.1,1019.2 L556.2,1024.2 L557.7,1022.8 L556.2,1025.7 L550.1,1023.0 L541.0,1020.8Z M539.7,1025.3 a1.9,1.3 0 1,1 3.8,0 a1.9,1.3 0 1,1 -3.8,0Z M543.5,1025.5 a1.4,1.0 0 1,1 2.8,0 a1.4,1.0 0 1,1 -2.8,0Z M541.0,1025.3 L530.3,1026.5 L523.1,1027.7 L521.6,1024.7 L523.1,1026.0 L530.3,1022.5 L541.0,1021.0Z M529.6,1027.9 a1.4,1.0 0 1,1 2.8,0 a1.4,1.0 0 1,1 -2.8,0Z M523.2,1023.4 a1.4,1.0 0 1,1 2.8,0 a1.4,1.0 0 1,1 -2.8,0Z M541.0,1021.1 L549.6,1022.5 L555.3,1026.0 L556.8,1024.7 L555.3,1027.6 L549.6,1026.4 L541.0,1025.2Z M544.7,1025.3 a1.5,1.1 0 1,1 3.0,0 a1.5,1.1 0 1,1 -3.0,0Z M551.7,1028.6 a2.0,1.4 0 1,1 4.0,0 a2.0,1.4 0 1,1 -4.0,0Z M541.0,1032.0 L534.1,1033.3 L529.6,1034.7 L528.1,1031.9 L529.6,1033.3 L534.1,1029.8 L541.0,1028.3Z M529.6,1035.5 a1.0,0.7 0 1,1 2.1,0 a1.0,0.7 0 1,1 -2.1,0Z M532.2,1033.8 a1.5,1.1 0 1,1 3.0,0 a1.5,1.1 0 1,1 -3.0,0Z M541.0,1027.7 L555.4,1029.4 L565.0,1033.4 L566.5,1032.3 L565.0,1035.5 L555.4,1034.4 L541.0,1033.1Z M556.5,1036.0 a2.1,1.5 0 1,1 4.3,0 a2.1,1.5 0 1,1 -4.3,0Z M557.9,1034.9 a2.1,1.5 0 1,1 4.2,0 a2.1,1.5 0 1,1 -4.2,0Z M541.0,1043.2 L526.0,1045.8 L515.9,1048.6 L514.4,1045.1 L515.9,1046.0 L526.0,1039.5 L541.0,1036.6Z M517.6,1045.5 a1.7,1.2 0 1,1 3.5,0 a1.7,1.2 0 1,1 -3.5,0Z M524.2,1044.1 a2.2,1.5 0 1,1 4.4,0 a2.2,1.5 0 1,1 -4.4,0Z M514.4,1048.3 a1.7,1.2 0 1,1 3.5,0 a1.7,1.2 0 1,1 -3.5,0Z M541.0,1037.1 L554.7,1040.5 L563.8,1047.8 L565.3,1046.6 L563.8,1049.8 L554.7,1045.7 L541.0,1042.3Z M559.1,1041.9 a1.1,0.7 0 1,1 2.1,0 a1.1,0.7 0 1,1 -2.1,0Z M552.4,1044.2 a2.3,1.6 0 1,1 4.7,0 a2.3,1.6 0 1,1 -4.7,0Z M550.9,1047.6 a1.5,1.0 0 1,1 3.0,0 a1.5,1.0 0 1,1 -3.0,0Z M541.0,1044.8 L531.3,1048.8 L524.8,1053.9 L523.3,1050.9 L524.8,1052.2 L531.3,1044.3 L541.0,1040.4Z M536.4,1053.9 a1.9,1.3 0 1,1 3.8,0 a1.9,1.3 0 1,1 -3.8,0Z M525.1,1047.5 a1.4,1.0 0 1,1 2.8,0 a1.4,1.0 0 1,1 -2.8,0Z M531.3,1053.5 a2.7,1.9 0 1,1 5.5,0 a2.7,1.9 0 1,1 -5.5,0Z M541.0,1040.3 L551.6,1043.8 L558.7,1051.2 L560.2,1050.0 L558.7,1053.1 L551.6,1048.7 L541.0,1045.1Z M540.7,1049.4 a2.7,1.9 0 1,1 5.4,0 a2.7,1.9 0 1,1 -5.4,0Z M552.2,1052.4 a1.3,0.9 0 1,1 2.7,0 a1.3,0.9 0 1,1 -2.7,0Z M547.1,1045.3 a1.8,1.3 0 1,1 3.6,0 a1.8,1.3 0 1,1 -3.6,0Z M541.0,1054.2 L528.2,1056.6 L519.7,1059.1 L518.2,1055.5 L519.7,1056.2 L528.2,1049.7 L541.0,1046.8Z M519.0,1053.2 a1.1,0.7 0 1,1 2.1,0 a1.1,0.7 0 1,1 -2.1,0Z M520.1,1051.7 a2.3,1.6 0 1,1 4.5,0 a2.3,1.6 0 1,1 -4.5,0Z M533.1,1055.8 a1.3,0.9 0 1,1 2.6,0 a1.3,0.9 0 1,1 -2.6,0Z M541.0,1046.9 L553.3,1048.7 L561.6,1053.3 L563.1,1052.5 L561.6,1056.2 L553.3,1055.4 L541.0,1054.1Z M543.5,1050.2 a2.4,1.7 0 1,1 4.8,0 a2.4,1.7 0 1,1 -4.8,0Z M547.4,1054.6 a2.8,1.9 0 1,1 5.5,0 a2.8,1.9 0 1,1 -5.5,0Z M558.7,1053.5 a2.0,1.4 0 1,1 4.1,0 a2.0,1.4 0 1,1 -4.1,0Z M541.0,1058.2 L533.3,1061.4 L528.2,1065.2 L526.7,1061.7 L528.2,1062.5 L533.3,1054.8 L541.0,1051.2Z M536.1,1057.3 a2.6,1.8 0 1,1 5.2,0 a2.6,1.8 0 1,1 -5.2,0Z M532.4,1062.0 a1.9,1.3 0 1,1 3.8,0 a1.9,1.3 0 1,1 -3.8,0Z M527.7,1063.0 a3.2,2.2 0 1,1 6.3,0 a3.2,2.2 0 1,1 -6.3,0Z M541.0,1051.6 L557.1,1053.9 L567.8,1059.1 L569.3,1058.1 L567.8,1061.4 L557.1,1059.3 L541.0,1057.3Z M555.5,1060.6 a2.3,1.6 0 1,1 4.6,0 a2.3,1.6 0 1,1 -4.6,0Z M562.5,1061.6 a2.1,1.5 0 1,1 4.1,0 a2.1,1.5 0 1,1 -4.1,0Z M555.6,1057.0 a2.9,2.0 0 1,1 5.8,0 a2.9,2.0 0 1,1 -5.8,0Z M572.8,981.0 L575.2,981.0 L576.5,1100.0 L571.5,1100.0Z M574.0,985.5 L572.8,986.6 L572.0,987.6 L570.5,984.8 L572.0,986.2 L572.8,983.1 L574.0,981.8Z M571.3,984.4 a1.0,0.7 0 1,1 2.0,0 a1.0,0.7 0 1,1 -2.0,0Z M574.0,981.8 L575.1,983.2 L575.9,986.3 L577.4,985.0 L575.9,987.8 L575.1,986.6 L574.0,985.4Z M574.0,984.7 a1.0,0.7 0 1,1 2.1,0 a1.0,0.7 0 1,1 -2.1,0Z M574.0,994.4 L571.2,994.8 L569.4,994.8 L567.9,992.0 L569.4,993.3 L571.2,991.3 L574.0,990.6Z M572.0,996.1 a1.3,0.9 0 1,1 2.6,0 a1.3,0.9 0 1,1 -2.6,0Z M574.0,990.4 L577.3,992.2 L579.5,996.3 L581.0,995.0 L579.5,997.9 L577.3,996.3 L574.0,994.7Z M577.2,995.7 a1.2,0.8 0 1,1 2.3,0 a1.2,0.8 0 1,1 -2.3,0Z M574.0,1002.8 L570.3,1004.2 L567.8,1005.6 L566.3,1002.7 L567.8,1004.1 L570.3,1000.4 L574.0,998.8Z M569.8,1001.9 a1.5,1.0 0 1,1 3.0,0 a1.5,1.0 0 1,1 -3.0,0Z M574.0,998.7 L578.4,1001.2 L581.4,1006.7 L582.9,1005.5 L581.4,1008.5 L578.4,1005.6 L574.0,1003.1Z M576.7,1006.0 a1.4,1.0 0 1,1 2.8,0 a1.4,1.0 0 1,1 -2.8,0Z M574.0,1009.2 L571.0,1010.3 L568.9,1011.1 L567.4,1008.2 L568.9,1009.4 L571.0,1006.1 L574.0,1004.8Z M571.4,1009.9 a1.3,0.9 0 1,1 2.6,0 a1.3,0.9 0 1,1 -2.6,0Z M574.0,1004.9 L576.9,1006.9 L578.8,1011.1 L580.3,1009.8 L578.8,1012.6 L576.9,1010.7 L574.0,1008.9Z M574.1,1008.4 a1.1,0.7 0 1,1 2.1,0 a1.1,0.7 0 1,1 -2.1,0Z M574.0,1017.2 L566.8,1018.9 L562.1,1020.6 L560.6,1017.4 L562.1,1018.6 L566.8,1014.1 L574.0,1012.1Z M561.0,1014.5 a1.8,1.3 0 1,1 3.7,0 a1.8,1.3 0 1,1 -3.7,0Z M562.6,1017.9 a1.4,1.0 0 1,1 2.9,0 a1.4,1.0 0 1,1 -2.9,0Z M574.0,1012.1 L580.8,1015.1 L585.3,1021.7 L586.8,1020.6 L585.3,1023.7 L580.8,1020.3 L574.0,1017.3Z M574.6,1022.4 a1.7,1.2 0 1,1 3.5,0 a1.7,1.2 0 1,1 -3.5,0Z M573.8,1024.1 a1.8,1.2 0 1,1 3.5,0 a1.8,1.2 0 1,1 -3.5,0Z M574.0,1021.6 L567.8,1024.0 L563.6,1026.7 L562.1,1023.6 L563.6,1024.8 L567.8,1019.2 L574.0,1016.6Z M568.9,1024.6 a1.3,0.9 0 1,1 2.7,0 a1.3,0.9 0 1,1 -2.7,0Z M571.0,1023.6 a1.3,0.9 0 1,1 2.5,0 a1.3,0.9 0 1,1 -2.5,0Z M574.0,1016.7 L577.5,1019.4 L579.9,1025.2 L581.4,1024.0 L579.9,1027.1 L577.5,1024.1 L574.0,1021.6Z M575.8,1019.9 a1.4,1.0 0 1,1 2.8,0 a1.4,1.0 0 1,1 -2.8,0Z M573.4,1021.3 a1.1,0.8 0 1,1 2.3,0 a1.1,0.8 0 1,1 -2.3,0Z M574.0,1025.9 L569.0,1028.7 L565.7,1032.3 L564.2,1029.4 L565.7,1030.8 L569.0,1024.9 L574.0,1022.1Z M569.1,1028.8 a1.0,0.7 0 1,1 2.0,0 a1.0,0.7 0 1,1 -2.0,0Z M569.5,1030.3 a1.7,1.2 0 1,1 3.4,0 a1.7,1.2 0 1,1 -3.4,0Z M574.0,1021.9 L580.1,1024.9 L584.2,1031.2 L585.7,1029.9 L584.2,1032.9 L580.1,1029.3 L574.0,1026.3Z M572.3,1030.4 a2.0,1.4 0 1,1 4.0,0 a2.0,1.4 0 1,1 -4.0,0Z M575.3,1031.8 a1.3,0.9 0 1,1 2.7,0 a1.3,0.9 0 1,1 -2.7,0Z M574.0,1033.5 L567.8,1035.4 L563.7,1037.5 L562.2,1034.5 L563.7,1035.7 L567.8,1031.1 L574.0,1029.0Z M570.3,1032.7 a1.6,1.1 0 1,1 3.2,0 a1.6,1.1 0 1,1 -3.2,0Z M572.1,1036.8 a1.0,0.7 0 1,1 2.0,0 a1.0,0.7 0 1,1 -2.0,0Z M574.0,1028.8 L582.8,1030.8 L588.7,1035.2 L590.2,1034.1 L588.7,1037.2 L582.8,1035.6 L574.0,1033.9Z M580.4,1033.2 a1.7,1.2 0 1,1 3.4,0 a1.7,1.2 0 1,1 -3.4,0Z M573.7,1035.6 a2.3,1.6 0 1,1 4.6,0 a2.3,1.6 0 1,1 -4.6,0Z M574.0,1037.5 L567.7,1040.1 L563.5,1043.4 L562.0,1040.6 L563.5,1042.0 L567.7,1036.4 L574.0,1033.8Z M570.2,1039.1 a2.5,1.7 0 1,1 5.0,0 a2.5,1.7 0 1,1 -5.0,0Z M562.4,1037.0 a1.2,0.9 0 1,1 2.4,0 a1.2,0.9 0 1,1 -2.4,0Z M563.6,1040.2 a1.9,1.4 0 1,1 3.9,0 a1.9,1.4 0 1,1 -3.9,0Z M574.0,1033.6 L579.1,1035.1 L582.5,1038.6 L584.0,1037.3 L582.5,1040.3 L579.1,1039.2 L574.0,1038.0Z M579.8,1037.1 a1.6,1.1 0 1,1 3.3,0 a1.6,1.1 0 1,1 -3.3,0Z M574.7,1039.1 a2.2,1.6 0 1,1 4.5,0 a2.2,1.6 0 1,1 -4.5,0Z M577.1,1040.6 a2.6,1.8 0 1,1 5.1,0 a2.6,1.8 0 1,1 -5.1,0Z M574.0,1045.7 L565.1,1049.0 L559.2,1052.8 L557.7,1049.3 L559.2,1050.2 L565.1,1042.4 L574.0,1038.9Z M558.7,1042.7 a2.0,1.4 0 1,1 4.0,0 a2.0,1.4 0 1,1 -4.0,0Z M559.2,1047.5 a2.8,2.0 0 1,1 5.7,0 a2.8,2.0 0 1,1 -5.7,0Z M568.5,1042.2 a1.1,0.7 0 1,1 2.1,0 a1.1,0.7 0 1,1 -2.1,0Z M574.0,1039.0 L584.0,1040.9 L590.7,1045.6 L592.2,1044.6 L590.7,1048.1 L584.0,1046.9 L574.0,1045.4Z M586.6,1049.1 a1.8,1.3 0 1,1 3.6,0 a1.8,1.3 0 1,1 -3.6,0Z M582.8,1047.9 a1.6,1.1 0 1,1 3.1,0 a1.6,1.1 0 1,1 -3.1,0Z M583.8,1042.7 a2.9,2.0 0 1,1 5.8,0 a2.9,2.0 0 1,1 -5.8,0Z M574.0,1051.1 L566.8,1055.5 L561.9,1061.2 L560.4,1057.9 L561.9,1059.0 L566.8,1050.0 L574.0,1045.6Z M572.3,1048.6 a1.7,1.2 0 1,1 3.4,0 a1.7,1.2 0 1,1 -3.4,0Z M559.9,1053.1 a2.8,2.0 0 1,1 5.6,0 a2.8,2.0 0 1,1 -5.6,0Z M567.0,1062.1 a2.0,1.4 0 1,1 4.0,0 a2.0,1.4 0 1,1 -4.0,0Z M574.0,1045.0 L581.2,1048.2 L586.0,1055.5 L587.5,1054.8 L586.0,1058.4 L581.2,1055.3 L574.0,1052.4Z M578.4,1050.4 a2.0,1.4 0 1,1 4.0,0 a2.0,1.4 0 1,1 -4.0,0Z M573.6,1052.9 a2.7,1.9 0 1,1 5.5,0 a2.7,1.9 0 1,1 -5.5,0Z M574.5,1050.2 a1.6,1.2 0 1,1 3.3,0 a1.6,1.2 0 1,1 -3.3,0Z M574.0,1061.7 L563.9,1065.2 L557.1,1069.2 L555.6,1065.5 L557.1,1066.2 L563.9,1057.9 L574.0,1054.1Z M568.4,1066.7 a2.0,1.4 0 1,1 4.1,0 a2.0,1.4 0 1,1 -4.1,0Z M556.5,1059.5 a1.3,0.9 0 1,1 2.7,0 a1.3,0.9 0 1,1 -2.7,0Z M557.6,1058.5 a2.2,1.5 0 1,1 4.4,0 a2.2,1.5 0 1,1 -4.4,0Z M574.0,1054.6 L588.0,1057.5 L597.3,1063.7 L598.8,1062.7 L597.3,1066.0 L588.0,1063.2 L574.0,1060.6Z M587.1,1060.2 a1.0,0.7 0 1,1 2.0,0 a1.0,0.7 0 1,1 -2.0,0Z M582.9,1063.8 a1.5,1.1 0 1,1 3.1,0 a1.5,1.1 0 1,1 -3.1,0Z M572.0,1063.6 a3.2,2.2 0 1,1 6.4,0 a3.2,2.2 0 1,1 -6.4,0Z M614.8,1021.0 L617.2,1021.0 L618.5,1100.0 L613.5,1100.0Z M616.0,1025.5 L614.2,1025.8 L613.0,1025.6 L611.5,1022.7 L613.0,1024.1 L614.2,1022.3 L616.0,1021.7Z M614.4,1024.8 a1.1,0.8 0 1,1 2.2,0 a1.1,0.8 0 1,1 -2.2,0Z M616.0,1021.7 L617.5,1023.3 L618.4,1027.0 L619.9,1025.6 L618.4,1028.5 L617.5,1027.0 L616.0,1025.6Z M615.6,1026.7 a1.0,0.7 0 1,1 2.1,0 a1.0,0.7 0 1,1 -2.1,0Z M616.0,1030.8 L614.4,1032.7 L613.3,1034.8 L611.8,1031.8 L613.3,1033.1 L614.4,1028.5 L616.0,1026.4Z M612.6,1032.0 a1.2,0.9 0 1,1 2.4,0 a1.2,0.9 0 1,1 -2.4,0Z M616.0,1026.5 L617.6,1028.0 L618.7,1031.4 L620.2,1030.1 L618.7,1032.9 L617.6,1031.7 L616.0,1030.5Z M615.0,1031.3 a1.2,0.9 0 1,1 2.5,0 a1.2,0.9 0 1,1 -2.5,0Z M616.0,1041.0 L611.8,1042.7 L608.9,1044.3 L607.4,1041.1 L608.9,1042.2 L611.8,1037.6 L616.0,1035.5Z M608.0,1043.0 a1.0,0.7 0 1,1 2.0,0 a1.0,0.7 0 1,1 -2.0,0Z M613.3,1041.2 a1.7,1.2 0 1,1 3.4,0 a1.7,1.2 0 1,1 -3.4,0Z M616.0,1035.8 L620.5,1037.6 L623.5,1041.6 L625.0,1040.4 L623.5,1043.4 L620.5,1041.9 L616.0,1040.5Z M621.6,1038.2 a1.0,0.7 0 1,1 2.1,0 a1.0,0.7 0 1,1 -2.1,0Z M618.1,1043.2 a1.4,1.0 0 1,1 2.8,0 a1.4,1.0 0 1,1 -2.8,0Z M616.0,1047.0 L612.5,1050.9 L610.1,1056.0 L608.6,1053.0 L610.1,1054.2 L612.5,1046.2 L616.0,1042.3Z M613.2,1049.8 a1.5,1.0 0 1,1 2.9,0 a1.5,1.0 0 1,1 -2.9,0Z M609.6,1048.9 a1.1,0.8 0 1,1 2.2,0 a1.1,0.8 0 1,1 -2.2,0Z M616.0,1042.2 L622.6,1045.7 L627.0,1053.0 L628.5,1051.8 L627.0,1054.9 L622.6,1050.6 L616.0,1047.2Z M615.0,1049.9 a2.2,1.6 0 1,1 4.5,0 a2.2,1.6 0 1,1 -4.5,0Z M625.2,1052.1 a1.1,0.7 0 1,1 2.1,0 a1.1,0.7 0 1,1 -2.1,0Z M616.0,1056.9 L607.0,1058.8 L601.0,1060.7 L599.5,1057.4 L601.0,1058.5 L607.0,1053.4 L616.0,1051.2Z M607.6,1059.4 a1.1,0.8 0 1,1 2.3,0 a1.1,0.8 0 1,1 -2.3,0Z M600.7,1058.1 a2.6,1.8 0 1,1 5.2,0 a2.6,1.8 0 1,1 -5.2,0Z M605.9,1058.3 a1.2,0.8 0 1,1 2.3,0 a1.2,0.8 0 1,1 -2.3,0Z M616.0,1051.0 L619.7,1053.8 L622.2,1060.1 L623.7,1059.1 L622.2,1062.5 L619.7,1059.8 L616.0,1057.3Z M615.9,1057.8 a2.5,1.7 0 1,1 4.9,0 a2.5,1.7 0 1,1 -4.9,0Z M617.0,1058.1 a2.6,1.9 0 1,1 5.3,0 a2.6,1.9 0 1,1 -5.3,0Z M619.1,1060.3 a2.4,1.7 0 1,1 4.8,0 a2.4,1.7 0 1,1 -4.8,0Z M616.0,1061.4 L609.3,1065.3 L604.8,1070.4 L603.3,1067.5 L604.8,1068.7 L609.3,1060.9 L616.0,1057.1Z M610.0,1070.3 a3.2,2.2 0 1,1 6.4,0 a3.2,2.2 0 1,1 -6.4,0Z M605.9,1063.0 a2.5,1.7 0 1,1 4.9,0 a2.5,1.7 0 1,1 -4.9,0Z M606.7,1062.4 a1.4,1.0 0 1,1 2.8,0 a1.4,1.0 0 1,1 -2.8,0Z M616.0,1057.2 L625.8,1061.8 L632.3,1071.0 L633.8,1069.7 L632.3,1072.6 L625.8,1066.1 L616.0,1061.3Z M626.5,1067.1 a3.2,2.2 0 1,1 6.3,0 a3.2,2.2 0 1,1 -6.3,0Z M615.3,1060.9 a2.8,1.9 0 1,1 5.6,0 a2.8,1.9 0 1,1 -5.6,0Z M623.0,1067.7 a1.9,1.4 0 1,1 3.9,0 a1.9,1.4 0 1,1 -3.9,0Z M689.8,1015.0 L692.2,1015.0 L693.5,1100.0 L688.5,1100.0Z M691.0,1019.5 L689.1,1020.9 L687.9,1022.2 L686.4,1019.4 L687.9,1020.7 L689.1,1017.3 L691.0,1015.7Z M689.0,1022.5 a1.1,0.8 0 1,1 2.1,0 a1.1,0.8 0 1,1 -2.1,0Z M691.0,1015.8 L692.2,1016.4 L693.0,1018.2 L694.5,1016.8 L693.0,1019.6 L692.2,1019.8 L691.0,1019.5Z M691.5,1019.0 a1.0,0.7 0 1,1 2.1,0 a1.0,0.7 0 1,1 -2.1,0Z M691.0,1029.1 L685.7,1030.4 L682.1,1031.5 L680.6,1028.4 L682.1,1029.6 L685.7,1025.9 L691.0,1024.3Z M689.4,1032.2 a1.1,0.8 0 1,1 2.2,0 a1.1,0.8 0 1,1 -2.2,0Z M691.0,1024.3 L695.5,1026.2 L698.6,1030.4 L700.1,1029.2 L698.6,1032.2 L695.5,1030.7 L691.0,1029.1Z M691.2,1031.4 a1.4,1.0 0 1,1 2.8,0 a1.4,1.0 0 1,1 -2.8,0Z M691.0,1034.1 L687.8,1036.9 L685.7,1040.5 L684.2,1037.5 L685.7,1038.8 L687.8,1032.6 L691.0,1029.6Z M684.0,1034.7 a1.7,1.2 0 1,1 3.5,0 a1.7,1.2 0 1,1 -3.5,0Z M685.1,1032.4 a1.0,0.7 0 1,1 2.1,0 a1.0,0.7 0 1,1 -2.1,0Z M691.0,1029.3 L697.1,1031.1 L701.2,1035.2 L702.7,1034.1 L701.2,1037.3 L697.1,1036.1 L691.0,1034.6Z M693.6,1037.6 a1.2,0.8 0 1,1 2.4,0 a1.2,0.8 0 1,1 -2.4,0Z M695.3,1037.5 a1.3,0.9 0 1,1 2.6,0 a1.3,0.9 0 1,1 -2.6,0Z M691.0,1039.3 L683.4,1040.6 L678.3,1041.7 L676.8,1038.6 L678.3,1039.8 L683.4,1035.9 L691.0,1034.3Z M682.2,1038.9 a1.8,1.2 0 1,1 3.5,0 a1.8,1.2 0 1,1 -3.5,0Z M677.3,1038.4 a2.1,1.4 0 1,1 4.1,0 a2.1,1.4 0 1,1 -4.1,0Z M691.0,1034.8 L697.5,1036.6 L701.9,1040.6 L703.4,1039.2 L701.9,1042.0 L697.5,1040.1 L691.0,1038.4Z M697.9,1039.2 a1.3,0.9 0 1,1 2.6,0 a1.3,0.9 0 1,1 -2.6,0Z M696.8,1040.7 a1.1,0.8 0 1,1 2.2,0 a1.1,0.8 0 1,1 -2.2,0Z M691.0,1049.6 L679.7,1050.7 L672.1,1051.5 L670.6,1048.3 L672.1,1049.4 L679.7,1045.6 L691.0,1044.0Z M675.4,1049.8 a2.6,1.9 0 1,1 5.3,0 a2.6,1.9 0 1,1 -5.3,0Z M678.4,1048.2 a1.4,1.0 0 1,1 2.9,0 a1.4,1.0 0 1,1 -2.9,0Z M685.7,1047.0 a2.4,1.7 0 1,1 4.9,0 a2.4,1.7 0 1,1 -4.9,0Z M691.0,1043.6 L699.6,1047.5 L705.3,1055.8 L706.8,1054.9 L705.3,1058.4 L699.6,1054.1 L691.0,1050.4Z M701.5,1049.2 a1.2,0.8 0 1,1 2.3,0 a1.2,0.8 0 1,1 -2.3,0Z M700.4,1057.1 a1.7,1.2 0 1,1 3.4,0 a1.7,1.2 0 1,1 -3.4,0Z M690.7,1048.7 a1.4,1.0 0 1,1 2.8,0 a1.4,1.0 0 1,1 -2.8,0Z M691.0,1055.8 L683.2,1057.9 L678.0,1060.1 L676.5,1057.0 L678.0,1058.2 L683.2,1053.2 L691.0,1051.0Z M679.5,1056.9 a2.0,1.4 0 1,1 4.0,0 a2.0,1.4 0 1,1 -4.0,0Z M680.8,1057.2 a3.0,2.1 0 1,1 6.0,0 a3.0,2.1 0 1,1 -6.0,0Z M679.8,1055.0 a1.4,1.0 0 1,1 2.8,0 a1.4,1.0 0 1,1 -2.8,0Z M691.0,1050.3 L699.7,1052.1 L705.5,1056.6 L707.0,1055.7 L705.5,1059.2 L699.7,1058.4 L691.0,1057.1Z M697.5,1057.4 a1.7,1.2 0 1,1 3.4,0 a1.7,1.2 0 1,1 -3.4,0Z M697.1,1059.0 a2.3,1.6 0 1,1 4.6,0 a2.3,1.6 0 1,1 -4.6,0Z M694.7,1060.0 a1.6,1.1 0 1,1 3.3,0 a1.6,1.1 0 1,1 -3.3,0Z M691.0,1062.2 L679.0,1065.8 L671.0,1070.3 L669.5,1066.9 L671.0,1067.9 L679.0,1059.8 L691.0,1056.0Z M684.3,1066.4 a2.8,2.0 0 1,1 5.7,0 a2.8,2.0 0 1,1 -5.7,0Z M679.7,1064.4 a2.3,1.6 0 1,1 4.6,0 a2.3,1.6 0 1,1 -4.6,0Z M678.2,1059.0 a3.4,2.4 0 1,1 6.7,0 a3.4,2.4 0 1,1 -6.7,0Z M691.0,1055.7 L705.3,1059.3 L714.8,1067.2 L716.3,1066.4 L714.8,1070.0 L705.3,1066.2 L691.0,1062.9Z M693.3,1062.4 a2.7,1.9 0 1,1 5.3,0 a2.7,1.9 0 1,1 -5.3,0Z M689.2,1065.7 a2.5,1.7 0 1,1 4.9,0 a2.5,1.7 0 1,1 -4.9,0Z M711.6,1061.8 a3.0,2.1 0 1,1 6.0,0 a3.0,2.1 0 1,1 -6.0,0Z M722.8,1035.0 L725.2,1035.0 L726.5,1100.0 L721.5,1100.0Z M724.0,1039.5 L722.5,1041.0 L721.5,1042.5 L720.0,1039.7 L721.5,1041.0 L722.5,1037.4 L724.0,1035.7Z M721.7,1041.8 a1.1,0.7 0 1,1 2.1,0 a1.1,0.7 0 1,1 -2.1,0Z M724.0,1035.8 L724.9,1036.7 L725.5,1039.2 L727.0,1037.8 L725.5,1040.6 L724.9,1040.2 L724.0,1039.5Z M723.4,1038.1 a1.1,0.7 0 1,1 2.1,0 a1.1,0.7 0 1,1 -2.1,0Z M724.0,1044.6 L721.3,1045.7 L719.6,1046.7 L718.1,1043.9 L719.6,1045.3 L721.3,1042.2 L724.0,1040.9Z M721.6,1045.4 a1.5,1.1 0 1,1 3.1,0 a1.5,1.1 0 1,1 -3.1,0Z M724.0,1040.9 L727.2,1042.6 L729.3,1046.4 L730.8,1045.0 L729.3,1047.9 L727.2,1046.2 L724.0,1044.7Z M726.4,1047.0 a1.5,1.0 0 1,1 2.9,0 a1.5,1.0 0 1,1 -2.9,0Z M724.0,1051.0 L718.9,1054.1 L715.6,1057.7 L714.1,1054.5 L715.6,1055.6 L718.9,1048.7 L724.0,1045.4Z M714.1,1051.1 a1.9,1.3 0 1,1 3.8,0 a1.9,1.3 0 1,1 -3.8,0Z M715.5,1051.3 a1.8,1.2 0 1,1 3.5,0 a1.8,1.2 0 1,1 -3.5,0Z M724.0,1046.1 L726.4,1049.0 L728.0,1055.0 L729.5,1053.6 L728.0,1056.4 L726.4,1052.6 L724.0,1049.7Z M724.2,1051.6 a1.6,1.1 0 1,1 3.2,0 a1.6,1.1 0 1,1 -3.2,0Z M724.0,1053.0 a2.1,1.4 0 1,1 4.1,0 a2.1,1.4 0 1,1 -4.1,0Z M724.0,1060.0 L719.4,1061.5 L716.4,1062.9 L714.9,1059.7 L716.4,1060.8 L719.4,1056.6 L724.0,1054.8Z M721.9,1061.0 a1.3,0.9 0 1,1 2.6,0 a1.3,0.9 0 1,1 -2.6,0Z M719.8,1060.8 a2.0,1.4 0 1,1 4.0,0 a2.0,1.4 0 1,1 -4.0,0Z M720.3,1060.2 a1.4,1.0 0 1,1 2.9,0 a1.4,1.0 0 1,1 -2.9,0Z M724.0,1055.2 L730.9,1059.5 L735.4,1068.2 L736.9,1066.9 L735.4,1069.8 L730.9,1063.7 L724.0,1059.2Z M723.7,1064.7 a1.0,0.7 0 1,1 2.1,0 a1.0,0.7 0 1,1 -2.1,0Z M727.6,1060.2 a1.4,1.0 0 1,1 2.7,0 a1.4,1.0 0 1,1 -2.7,0Z M724.9,1062.6 a2.3,1.6 0 1,1 4.7,0 a2.3,1.6 0 1,1 -4.7,0Z M764.8,1002.0 L767.2,1002.0 L768.5,1100.0 L763.5,1100.0Z M766.0,1006.5 L764.6,1007.6 L763.6,1008.7 L762.1,1005.9 L763.6,1007.3 L764.6,1004.1 L766.0,1002.8Z M763.8,1007.2 a1.1,0.7 0 1,1 2.1,0 a1.1,0.7 0 1,1 -2.1,0Z M766.0,1002.8 L768.0,1003.9 L769.4,1006.7 L770.9,1005.3 L769.4,1008.1 L768.0,1007.3 L766.0,1006.4Z M765.0,1007.0 a1.0,0.7 0 1,1 2.0,0 a1.0,0.7 0 1,1 -2.0,0Z M766.0,1015.0 L763.1,1015.9 L761.2,1016.6 L759.7,1013.8 L761.2,1015.2 L763.1,1012.5 L766.0,1011.3Z M759.9,1017.6 a1.3,0.9 0 1,1 2.6,0 a1.3,0.9 0 1,1 -2.6,0Z M766.0,1011.2 L768.2,1012.5 L769.7,1015.6 L771.2,1014.2 L769.7,1017.2 L768.2,1016.3 L766.0,1015.3Z M765.4,1017.2 a1.1,0.7 0 1,1 2.1,0 a1.1,0.7 0 1,1 -2.1,0Z M766.0,1024.2 L762.3,1026.9 L759.8,1030.3 L758.3,1027.4 L759.8,1028.6 L762.3,1022.7 L766.0,1019.8Z M761.4,1025.5 a1.2,0.8 0 1,1 2.3,0 a1.2,0.8 0 1,1 -2.3,0Z M766.0,1019.9 L769.3,1022.7 L771.5,1028.3 L773.0,1027.0 L771.5,1029.9 L769.3,1026.6 L766.0,1023.9Z M768.5,1025.8 a1.7,1.2 0 1,1 3.5,0 a1.7,1.2 0 1,1 -3.5,0Z M766.0,1033.1 L757.1,1035.5 L751.2,1038.1 L749.7,1034.9 L751.2,1036.0 L757.1,1030.4 L766.0,1027.8Z M762.9,1035.5 a1.2,0.9 0 1,1 2.5,0 a1.2,0.9 0 1,1 -2.5,0Z M750.9,1037.3 a1.4,1.0 0 1,1 2.9,0 a1.4,1.0 0 1,1 -2.9,0Z M766.0,1027.6 L772.9,1029.7 L777.5,1034.6 L779.0,1033.6 L777.5,1036.9 L772.9,1035.3 L766.0,1033.6Z M768.6,1030.0 a1.9,1.3 0 1,1 3.7,0 a1.9,1.3 0 1,1 -3.7,0Z M775.8,1034.0 a1.7,1.2 0 1,1 3.3,0 a1.7,1.2 0 1,1 -3.3,0Z M766.0,1041.4 L759.3,1044.3 L754.8,1047.8 L753.3,1044.6 L754.8,1045.7 L759.3,1039.1 L766.0,1036.0Z M757.5,1039.9 a1.5,1.1 0 1,1 3.1,0 a1.5,1.1 0 1,1 -3.1,0Z M754.1,1042.6 a1.5,1.0 0 1,1 2.9,0 a1.5,1.0 0 1,1 -2.9,0Z M766.0,1035.8 L771.8,1037.3 L775.7,1041.3 L777.2,1040.3 L775.7,1043.7 L771.8,1043.0 L766.0,1041.9Z M771.5,1041.5 a2.0,1.4 0 1,1 4.1,0 a2.0,1.4 0 1,1 -4.1,0Z M772.2,1043.3 a2.5,1.8 0 1,1 5.1,0 a2.5,1.8 0 1,1 -5.1,0Z M766.0,1051.2 L754.2,1055.7 L746.4,1061.6 L744.9,1058.4 L746.4,1059.4 L754.2,1050.2 L766.0,1045.7Z M757.3,1053.3 a1.3,0.9 0 1,1 2.6,0 a1.3,0.9 0 1,1 -2.6,0Z M762.7,1060.2 a1.9,1.4 0 1,1 3.9,0 a1.9,1.4 0 1,1 -3.9,0Z M748.0,1049.0 a1.6,1.1 0 1,1 3.1,0 a1.6,1.1 0 1,1 -3.1,0Z M766.0,1046.2 L776.1,1048.4 L782.9,1053.1 L784.4,1051.8 L782.9,1054.6 L776.1,1052.2 L766.0,1050.1Z M769.2,1056.1 a2.5,1.7 0 1,1 4.9,0 a2.5,1.7 0 1,1 -4.9,0Z M772.1,1052.0 a2.0,1.4 0 1,1 4.1,0 a2.0,1.4 0 1,1 -4.1,0Z M775.7,1048.3 a2.6,1.9 0 1,1 5.3,0 a2.6,1.9 0 1,1 -5.3,0Z M766.0,1059.8 L749.1,1063.8 L737.9,1068.9 L736.4,1065.6 L737.9,1066.7 L749.1,1058.3 L766.0,1054.2Z M747.4,1066.8 a2.2,1.6 0 1,1 4.5,0 a2.2,1.6 0 1,1 -4.5,0Z M755.6,1065.0 a2.6,1.8 0 1,1 5.2,0 a2.6,1.8 0 1,1 -5.2,0Z M736.7,1058.1 a2.5,1.8 0 1,1 5.0,0 a2.5,1.8 0 1,1 -5.0,0Z M766.0,1054.5 L782.5,1058.5 L793.6,1066.6 L795.1,1065.4 L793.6,1068.5 L782.5,1063.3 L766.0,1059.3Z M775.9,1069.7 a1.3,0.9 0 1,1 2.6,0 a1.3,0.9 0 1,1 -2.6,0Z M766.6,1057.2 a2.0,1.4 0 1,1 4.1,0 a2.0,1.4 0 1,1 -4.1,0Z M768.6,1067.9 a1.3,0.9 0 1,1 2.6,0 a1.3,0.9 0 1,1 -2.6,0Z M218.8,999.0 L221.2,999.0 L222.5,1100.0 L217.5,1100.0Z M220.0,1003.5 L217.8,1005.0 L216.4,1006.6 L214.9,1003.7 L216.4,1005.1 L217.8,1001.4 L220.0,999.8Z M218.7,1005.1 a1.0,0.7 0 1,1 2.1,0 a1.0,0.7 0 1,1 -2.1,0Z M220.0,999.8 L221.1,1000.6 L221.8,1002.6 L223.3,1001.3 L221.8,1004.1 L221.1,1003.9 L220.0,1003.4Z M219.4,1002.1 a1.0,0.7 0 1,1 2.0,0 a1.0,0.7 0 1,1 -2.0,0Z M220.0,1011.8 L217.4,1013.1 L215.7,1014.3 L214.2,1011.3 L215.7,1012.6 L217.4,1009.1 L220.0,1007.6Z M217.2,1011.6 a1.2,0.9 0 1,1 2.5,0 a1.2,0.9 0 1,1 -2.5,0Z M220.0,1007.5 L223.2,1009.2 L225.3,1013.1 L226.8,1011.8 L225.3,1014.8 L223.2,1013.3 L220.0,1011.9Z M220.7,1013.7 a1.2,0.9 0 1,1 2.5,0 a1.2,0.9 0 1,1 -2.5,0Z M220.0,1019.5 L216.7,1020.2 L214.5,1020.7 L213.0,1017.7 L214.5,1019.0 L216.7,1016.3 L220.0,1015.2Z M214.6,1019.8 a1.5,1.0 0 1,1 2.9,0 a1.5,1.0 0 1,1 -2.9,0Z M220.0,1015.2 L222.8,1016.5 L224.7,1019.5 L226.2,1018.2 L224.7,1021.1 L222.8,1020.3 L220.0,1019.3Z M222.8,1017.6 a1.1,0.7 0 1,1 2.1,0 a1.1,0.7 0 1,1 -2.1,0Z M220.0,1023.2 L216.4,1025.1 L214.0,1027.1 L212.5,1024.0 L214.0,1025.2 L216.4,1020.3 L220.0,1018.2Z M216.8,1023.0 a1.3,0.9 0 1,1 2.5,0 a1.3,0.9 0 1,1 -2.5,0Z M214.3,1024.0 a1.1,0.8 0 1,1 2.2,0 a1.1,0.8 0 1,1 -2.2,0Z M220.0,1018.2 L225.6,1020.6 L229.3,1026.0 L230.8,1024.8 L229.3,1027.9 L225.6,1025.4 L220.0,1023.2Z M220.7,1026.4 a1.5,1.1 0 1,1 3.0,0 a1.5,1.1 0 1,1 -3.0,0Z M227.7,1023.9 a1.0,0.7 0 1,1 2.1,0 a1.0,0.7 0 1,1 -2.1,0Z M220.0,1029.2 L216.9,1032.0 L214.8,1035.4 L213.3,1032.3 L214.8,1033.5 L216.9,1027.1 L220.0,1024.1Z M213.4,1035.5 a1.6,1.1 0 1,1 3.2,0 a1.6,1.1 0 1,1 -3.2,0Z M212.8,1033.2 a2.1,1.4 0 1,1 4.1,0 a2.1,1.4 0 1,1 -4.1,0Z M220.0,1024.5 L224.8,1026.1 L228.0,1029.7 L229.5,1028.3 L228.0,1031.1 L224.8,1029.7 L220.0,1028.3Z M221.7,1029.5 a2.0,1.4 0 1,1 4.1,0 a2.0,1.4 0 1,1 -4.1,0Z M220.5,1027.8 a1.2,0.8 0 1,1 2.4,0 a1.2,0.8 0 1,1 -2.4,0Z M220.0,1035.8 L211.9,1037.5 L206.4,1039.2 L204.9,1036.2 L206.4,1037.4 L211.9,1032.9 L220.0,1031.0Z M205.6,1036.1 a2.2,1.6 0 1,1 4.5,0 a2.2,1.6 0 1,1 -4.5,0Z M207.4,1039.6 a1.6,1.1 0 1,1 3.1,0 a1.6,1.1 0 1,1 -3.1,0Z M220.0,1030.8 L227.5,1034.2 L232.4,1041.5 L233.9,1040.4 L232.4,1043.6 L227.5,1039.5 L220.0,1036.2Z M220.9,1036.7 a2.1,1.4 0 1,1 4.1,0 a2.1,1.4 0 1,1 -4.1,0Z M225.8,1040.5 a1.1,0.8 0 1,1 2.3,0 a1.1,0.8 0 1,1 -2.3,0Z M220.0,1044.3 L213.6,1047.1 L209.3,1050.3 L207.8,1046.9 L209.3,1047.8 L213.6,1041.0 L220.0,1037.9Z M215.4,1048.7 a1.9,1.4 0 1,1 3.9,0 a1.9,1.4 0 1,1 -3.9,0Z M212.4,1043.8 a1.8,1.3 0 1,1 3.6,0 a1.8,1.3 0 1,1 -3.6,0Z M213.6,1046.4 a1.6,1.1 0 1,1 3.3,0 a1.6,1.1 0 1,1 -3.3,0Z M220.0,1037.8 L229.4,1039.7 L235.7,1044.3 L237.2,1043.4 L235.7,1046.8 L229.4,1045.8 L220.0,1044.4Z M221.4,1044.2 a1.8,1.2 0 1,1 3.5,0 a1.8,1.2 0 1,1 -3.5,0Z M224.8,1042.5 a1.8,1.3 0 1,1 3.6,0 a1.8,1.3 0 1,1 -3.6,0Z M228.9,1044.6 a1.9,1.3 0 1,1 3.8,0 a1.9,1.3 0 1,1 -3.8,0Z M220.0,1049.7 L208.8,1051.1 L201.4,1051.9 L199.9,1048.4 L201.4,1049.2 L208.8,1044.6 L220.0,1042.8Z M201.6,1050.1 a2.3,1.6 0 1,1 4.5,0 a2.3,1.6 0 1,1 -4.5,0Z M207.1,1047.6 a1.7,1.2 0 1,1 3.3,0 a1.7,1.2 0 1,1 -3.3,0Z M212.6,1051.2 a1.7,1.2 0 1,1 3.5,0 a1.7,1.2 0 1,1 -3.5,0Z M220.0,1043.3 L227.7,1047.4 L232.8,1056.1 L234.3,1055.0 L232.8,1058.2 L227.7,1052.9 L220.0,1048.7Z M225.9,1049.0 a1.2,0.8 0 1,1 2.3,0 a1.2,0.8 0 1,1 -2.3,0Z M220.8,1050.8 a1.9,1.4 0 1,1 3.9,0 a1.9,1.4 0 1,1 -3.9,0Z M219.3,1051.0 a2.1,1.4 0 1,1 4.1,0 a2.1,1.4 0 1,1 -4.1,0Z M220.0,1056.0 L207.9,1058.2 L199.8,1060.3 L198.3,1056.7 L199.8,1057.4 L207.9,1051.4 L220.0,1048.8Z M213.9,1060.4 a1.1,0.8 0 1,1 2.2,0 a1.1,0.8 0 1,1 -2.2,0Z M202.4,1054.3 a1.3,0.9 0 1,1 2.6,0 a1.3,0.9 0 1,1 -2.6,0Z M201.3,1054.1 a1.8,1.3 0 1,1 3.7,0 a1.8,1.3 0 1,1 -3.7,0Z M220.0,1049.9 L230.7,1052.6 L237.8,1058.3 L239.3,1057.0 L237.8,1059.9 L230.7,1056.5 L220.0,1053.8Z M233.2,1056.8 a3.1,2.2 0 1,1 6.2,0 a3.1,2.2 0 1,1 -6.2,0Z M233.9,1052.7 a2.3,1.6 0 1,1 4.6,0 a2.3,1.6 0 1,1 -4.6,0Z M220.0,1058.3 a2.5,1.8 0 1,1 5.0,0 a2.5,1.8 0 1,1 -5.0,0Z M220.0,1062.5 L207.3,1067.5 L198.8,1073.8 L197.3,1070.4 L198.8,1071.3 L207.3,1061.0 L220.0,1056.0Z M206.2,1063.2 a1.2,0.9 0 1,1 2.4,0 a1.2,0.9 0 1,1 -2.4,0Z M200.1,1062.4 a1.8,1.2 0 1,1 3.5,0 a1.8,1.2 0 1,1 -3.5,0Z M204.8,1068.3 a2.1,1.4 0 1,1 4.1,0 a2.1,1.4 0 1,1 -4.1,0Z M220.0,1055.8 L229.0,1060.1 L235.1,1069.4 L236.6,1068.6 L235.1,1072.2 L229.0,1067.2 L220.0,1063.0Z M230.6,1064.7 a3.4,2.4 0 1,1 6.8,0 a3.4,2.4 0 1,1 -6.8,0Z M231.9,1060.9 a2.9,2.0 0 1,1 5.8,0 a2.9,2.0 0 1,1 -5.8,0Z M229.8,1059.8 a2.8,1.9 0 1,1 5.5,0 a2.8,1.9 0 1,1 -5.5,0Z M51.8,1007.0 L54.2,1007.0 L55.5,1100.0 L50.5,1100.0Z M53.0,1011.5 L50.4,1013.0 L48.6,1014.5 L47.1,1011.7 L48.6,1013.1 L50.4,1009.4 L53.0,1007.7Z M51.1,1015.0 a1.0,0.7 0 1,1 2.0,0 a1.0,0.7 0 1,1 -2.0,0Z M53.0,1007.8 L57.1,1008.7 L59.8,1010.9 L61.3,1009.5 L59.8,1012.3 L57.1,1012.0 L53.0,1011.4Z M54.8,1010.8 a1.1,0.7 0 1,1 2.1,0 a1.1,0.7 0 1,1 -2.1,0Z M53.0,1020.7 L47.2,1022.6 L43.3,1024.8 L41.8,1021.8 L43.3,1023.1 L47.2,1018.5 L53.0,1016.4Z M43.8,1020.0 a1.2,0.9 0 1,1 2.5,0 a1.2,0.9 0 1,1 -2.5,0Z M53.0,1016.4 L56.8,1018.8 L59.3,1023.9 L60.8,1022.7 L59.3,1025.6 L56.8,1022.9 L53.0,1020.7Z M52.5,1023.0 a1.1,0.8 0 1,1 2.2,0 a1.1,0.8 0 1,1 -2.2,0Z M53.0,1024.9 L46.2,1025.6 L41.6,1025.9 L40.1,1023.0 L41.6,1024.2 L46.2,1021.5 L53.0,1020.5Z M46.1,1025.0 a1.0,0.7 0 1,1 2.1,0 a1.0,0.7 0 1,1 -2.1,0Z M53.0,1020.6 L58.0,1023.1 L61.4,1028.2 L62.9,1026.9 L61.4,1029.7 L58.0,1026.9 L53.0,1024.6Z M55.2,1027.1 a1.3,0.9 0 1,1 2.7,0 a1.3,0.9 0 1,1 -2.7,0Z M53.0,1032.0 L44.0,1032.8 L38.0,1033.1 L36.5,1030.0 L38.0,1031.1 L44.0,1027.9 L53.0,1026.7Z M46.9,1029.9 a1.8,1.3 0 1,1 3.7,0 a1.8,1.3 0 1,1 -3.7,0Z M42.3,1031.5 a1.2,0.9 0 1,1 2.4,0 a1.2,0.9 0 1,1 -2.4,0Z M53.0,1027.2 L63.1,1029.1 L69.8,1033.2 L71.3,1031.8 L69.8,1034.6 L63.1,1032.7 L53.0,1031.0Z M53.3,1031.0 a1.9,1.3 0 1,1 3.8,0 a1.9,1.3 0 1,1 -3.8,0Z M63.8,1030.1 a2.0,1.4 0 1,1 3.9,0 a2.0,1.4 0 1,1 -3.9,0Z M53.0,1037.6 L45.2,1040.0 L40.1,1042.9 L38.6,1039.7 L40.1,1040.8 L45.2,1035.0 L53.0,1032.4Z M44.4,1038.4 a1.6,1.1 0 1,1 3.3,0 a1.6,1.1 0 1,1 -3.3,0Z M45.6,1040.6 a1.5,1.0 0 1,1 2.9,0 a1.5,1.0 0 1,1 -2.9,0Z M53.0,1032.3 L68.6,1033.8 L79.0,1037.5 L80.5,1036.4 L79.0,1039.7 L68.6,1038.9 L53.0,1037.8Z M62.1,1039.7 a1.7,1.2 0 1,1 3.4,0 a1.7,1.2 0 1,1 -3.4,0Z M66.9,1035.1 a2.0,1.4 0 1,1 3.9,0 a2.0,1.4 0 1,1 -3.9,0Z M53.0,1042.5 L44.8,1046.0 L39.3,1050.4 L37.8,1047.2 L39.3,1048.3 L44.8,1040.7 L53.0,1037.1Z M50.3,1044.7 a2.3,1.6 0 1,1 4.6,0 a2.3,1.6 0 1,1 -4.6,0Z M48.2,1050.4 a1.1,0.8 0 1,1 2.2,0 a1.1,0.8 0 1,1 -2.2,0Z M53.0,1037.0 L64.5,1041.0 L72.1,1049.4 L73.6,1048.4 L72.1,1051.7 L64.5,1046.7 L53.0,1042.7Z M54.8,1044.0 a1.1,0.8 0 1,1 2.3,0 a1.1,0.8 0 1,1 -2.3,0Z M62.5,1047.5 a1.8,1.3 0 1,1 3.7,0 a1.8,1.3 0 1,1 -3.7,0Z M53.0,1050.5 L32.4,1052.6 L18.6,1055.0 L17.1,1052.1 L18.6,1053.5 L32.4,1048.8 L53.0,1046.6Z M19.1,1050.5 a2.5,1.8 0 1,1 5.1,0 a2.5,1.8 0 1,1 -5.1,0Z M42.4,1054.4 a1.6,1.1 0 1,1 3.1,0 a1.6,1.1 0 1,1 -3.1,0Z M35.6,1052.1 a1.5,1.1 0 1,1 3.1,0 a1.5,1.1 0 1,1 -3.1,0Z M53.0,1046.4 L65.3,1050.7 L73.5,1059.6 L75.0,1058.4 L73.5,1061.4 L65.3,1055.5 L53.0,1051.1Z M60.4,1054.4 a1.6,1.1 0 1,1 3.1,0 a1.6,1.1 0 1,1 -3.1,0Z M66.3,1061.2 a1.9,1.3 0 1,1 3.8,0 a1.9,1.3 0 1,1 -3.8,0Z M52.2,1055.1 a2.0,1.4 0 1,1 3.9,0 a2.0,1.4 0 1,1 -3.9,0Z M53.0,1057.7 L38.8,1062.5 L29.3,1068.6 L27.8,1065.1 L29.3,1065.9 L38.8,1055.6 L53.0,1050.7Z M43.3,1054.2 a1.2,0.8 0 1,1 2.4,0 a1.2,0.8 0 1,1 -2.4,0Z M48.6,1062.8 a1.3,0.9 0 1,1 2.6,0 a1.3,0.9 0 1,1 -2.6,0Z M29.2,1064.6 a2.9,2.1 0 1,1 5.9,0 a2.9,2.1 0 1,1 -5.9,0Z M53.0,1050.4 L67.2,1055.3 L76.7,1065.7 L78.2,1065.0 L76.7,1068.7 L67.2,1063.0 L53.0,1058.3Z M71.4,1056.2 a3.1,2.2 0 1,1 6.3,0 a3.1,2.2 0 1,1 -6.3,0Z M54.5,1067.6 a1.1,0.7 0 1,1 2.1,0 a1.1,0.7 0 1,1 -2.1,0Z M68.6,1065.9 a1.1,0.8 0 1,1 2.3,0 a1.1,0.8 0 1,1 -2.3,0Z M0.0,1090.0 L0.0,1045.8 L6.9,1038.9 L18.4,1043.5 L25.3,1041.8 L37.3,1043.3 L49.3,1034.1 L56.3,1036.4 L65.9,1038.6 L79.9,1044.3 L86.1,1029.1 L95.3,1042.4 L103.9,1039.4 L117.6,1042.2 L125.3,1035.5 L135.7,1028.8 L148.4,1039.6 L156.0,1030.9 L169.9,1045.5 L181.8,1030.4 L193.0,1042.1 L205.4,1032.9 L213.0,1034.5 L220.7,1045.3 L229.4,1040.0 L238.6,1034.4 L251.3,1028.7 L265.1,1028.1 L277.4,1040.5 L284.8,1034.8 L295.2,1033.9 L301.9,1042.5 L315.3,1035.2 L326.8,1044.3 L336.0,1029.6 L347.2,1028.2 L354.8,1037.8 L367.2,1038.0 L379.5,1035.9 L386.5,1044.2 L400.3,1043.9 L407.9,1040.0 L419.6,1030.6 L429.4,1037.0 L441.7,1041.0 L450.7,1035.0 L461.8,1045.3 L468.7,1043.5 L480.5,1033.5 L494.2,1032.2 L502.3,1032.2 L516.2,1039.7 L522.3,1039.2 L530.5,1042.8 L536.9,1043.8 L549.8,1045.1 L560.7,1042.3 L568.3,1031.2 L576.6,1042.7 L586.3,1033.5 L596.5,1030.5 L605.7,1036.6 L617.4,1037.7 L629.2,1037.6 L636.2,1043.8 L648.5,1032.6 L662.0,1033.6 L672.7,1043.0 L685.5,1043.9 L694.9,1043.5 L703.9,1040.5 L713.4,1033.2 L723.7,1041.6 L735.9,1032.8 L748.5,1045.4 L759.5,1029.9 L767.5,1042.4 L780.0,1090.0Z" fill="#0a2a36"/></g></svg>
<svg width="0" height="0" style="position:absolute"><defs><linearGradient id="btng" x1="0" y1="0" x2="0" y2="1"><stop offset="0" stop-color="#e8e8e8"/><stop offset="1" stop-color="#d4d4d4"/></linearGradient></defs></svg>
<svg class="ic" style="left:48px;top:33px;" width="37" height="30" viewBox="0 0 37 30"><defs><linearGradient id="hfg" x1="0" y1="0" x2="0" y2="1"><stop offset="0" stop-color="#a9c3de"/><stop offset="1" stop-color="#5c80ab"/></linearGradient></defs>
<rect x="3" y="0.5" width="14" height="5" rx="1.5" fill="#f2f2f2"/><rect x="1.5" y="2" width="33" height="6" rx="1.5" fill="#f6f6f6"/>
<rect x="0.5" y="6.5" width="35" height="22" rx="2" fill="url(#hfg)" stroke="#4d6f97" stroke-width=".8"/>
<polygon points="18.5,9 28,17 25,17 25,24 21,24 21,20 16,20 16,24 12,24 12,17 9,17" fill="#3d5572"/></svg><div style="left:45px;top:70px;width:43px;height:25px;background:rgba(205,216,228,.8);border-radius:4px"></div><span class="t" style="left:-233.5px;width:600px;text-align:center;top:76.0px;font-size:13px;color:#2b2b2b;">Home</span><svg class="ic" style="left:54px;top:131px;" width="26" height="35" viewBox="0 0 26 35"><defs><linearGradient id="tcg" x1="0" y1="0" x2="1" y2="0"><stop offset="0" stop-color="#7c7c7c"/><stop offset=".35" stop-color="#f0f0f0"/><stop offset=".6" stop-color="#c8c8c8"/><stop offset="1" stop-color="#6a6a6a"/></linearGradient></defs>
<path d="M1.5 5 L24.5 5 L22.5 32 Q13 35.5 3.5 32Z" fill="url(#tcg)" stroke="#5a5a5a" stroke-width=".8"/>
<ellipse cx="13" cy="5" rx="11.5" ry="4" fill="#a8a8a8" stroke="#777" stroke-width=".8"/><ellipse cx="13" cy="5.3" rx="9" ry="2.6" fill="#6e6e6e"/><ellipse cx="13" cy="4.6" rx="8" ry="2" fill="#bdbdbd"/>
<path d="M7 10 L8 30 M13 10 L13 31 M19 10 L18 30" stroke="#8a8a8a" stroke-width=".8" opacity=".6"/></svg><div style="left:47px;top:172px;width:40px;height:25px;background:rgba(205,216,228,.8);border-radius:4px"></div><span class="t" style="left:-233px;width:600px;text-align:center;top:179.0px;font-size:13px;color:#2b2b2b;">Trash</span>
<div style="left:147px;top:117px;width:600px;height:615px;background:#d0d0d0;box-shadow:0 0 0 1px #524d49,0 2px 11px 2px rgba(0,0,0,.33)"></div><div style="left:147px;top:117px;width:600px;height:15px;background:linear-gradient(#f9fafc,#e7edf5)"></div><svg class="ic" style="left:150px;top:118px;" width="12" height="12" viewBox="0 0 12 12"><defs><linearGradient id="umtg" x1="0" y1="0" x2="0" y2="1"><stop offset="0" stop-color="#f6a35c"/><stop offset="1" stop-color="#e8681e"/></linearGradient></defs>
<rect x="0.5" y="0.5" width="11" height="11" rx="1.0" fill="url(#umtg)" stroke="#c85a14" stroke-width="1"/>
<polygon points="6.00,1.56 7.24,3.01 9.14,2.86 8.99,4.76 10.44,6.00 8.99,7.24 9.14,9.14 7.24,8.99 6.00,10.44 4.76,8.99 2.86,9.14 3.01,7.24 1.56,6.00 3.01,4.76 2.86,2.86 4.76,3.01" fill="#ffffff"/>
<polygon points="6.00,3.36 7.92,5.76 6.72,5.76 6.72,8.16 5.28,8.16 5.28,5.76 4.08,5.76" fill="#e8681e"/></svg><span class="t" style="left:119px;width:600px;text-align:center;top:118.34px;font-size:12px;color:#a3a3a3;text-shadow:0 1px 0 #fff">Update Manager</span><svg class="ic" style="left:678px;top:118px;" width="21" height="12" viewBox="0 0 21 12"><rect x="0.5" y="0.5" width="20" height="11" rx="2" fill="url(#btng)" stroke="#b4b4b4"/><rect x="7.5" y="7.5" width="6" height="2" fill="#9a9a9a"/></svg><svg class="ic" style="left:701px;top:118px;" width="21" height="12" viewBox="0 0 21 12"><rect x="0.5" y="0.5" width="20" height="11" rx="2" fill="url(#btng)" stroke="#b4b4b4"/><rect x="7.0" y="2.5" width="7" height="7" fill="none" stroke="#9a9a9a" stroke-width="1.2"/><rect x="7.0" y="2" width="7" height="1.6" fill="#9a9a9a"/></svg><svg class="ic" style="left:724px;top:118px;" width="21" height="12" viewBox="0 0 21 12"><rect x="0.5" y="0.5" width="20" height="11" rx="2" fill="url(#btng)" stroke="#b4b4b4"/><path d="M7.0 2.5 L14.0 9.5 M14.0 2.5 L7.0 9.5" stroke="#9a9a9a" stroke-width="2"/></svg><svg class="ic" style="left:163px;top:149px;" width="40" height="40" viewBox="0 0 40 40"><defs><linearGradient id="umhg" x1="0" y1="0" x2="0" y2="1"><stop offset="0" stop-color="#e9c39e"/><stop offset="1" stop-color="#e5a47b"/></linearGradient></defs>
<rect x="0.5" y="0.5" width="39" height="39" rx="3.2" fill="url(#umhg)" stroke="#d9a27c" stroke-width="1"/>
<polygon points="20.00,5.20 24.13,10.02 30.47,9.53 29.98,15.87 34.80,20.00 29.98,24.13 30.47,30.47 24.13,29.98 20.00,34.80 15.87,29.98 9.53,30.47 10.02,24.13 5.20,20.00 10.02,15.87 9.53,9.53 15.87,10.02" fill="#eeeeea"/>
<polygon points="20.00,11.20 26.40,19.20 22.40,19.20 22.40,27.20 17.60,27.20 17.60,19.20 13.60,19.20" fill="#e5a47b"/></svg><span class="t" style="left:219px;top:146.07px;font-size:13.5px;color:#a6a6a6;font-weight:bold;">Welcome to Ubuntu</span><span class="t" style="left:219px;top:169.0px;font-size:13px;color:#a9a9a9;">These software updates have been issued since this version of Ubuntu was released. If</span><span class="t" style="left:219px;top:186.0px;font-size:13px;color:#a9a9a9;">you don't want to install them now, choose "Update Manager" from the Administration</span><span class="t" style="left:219px;top:203.0px;font-size:13px;color:#a9a9a9;">Menu later.</span><div style="left:159px;top:236px;width:576px;height:349px;border:1px solid #a9a9a9;background:#d0d0d0;overflow:hidden"><span class="t" style="left:39px;top:2.59px;font-size:11px;color:#a9a9a9;">dnsutils (Size: 146 kB)</span><svg class="ic" style="left:10px;top:-9px;" width="15" height="15" viewBox="0 -1 15 15"><rect x="0.5" y="0.5" width="13" height="13" rx="1.5" fill="#d6d6d6" stroke="#9c9c9c"/>
<path d="M3 6.5 L6 10 L13 1.5" fill="none" stroke="#8a8a8a" stroke-width="2.2" stroke-linejoin="round"/></svg><span class="t" style="left:39.5px;top:32.4px;font-size:13px;color:#a9a9a9;">Safe and easy web browser from Mozilla</span><span class="t" style="left:39px;top:50.59px;font-size:11px;color:#a9a9a9;">firefox (Size: 19.3 MB)</span><svg class="ic" style="left:10px;top:39px;" width="15" height="15" viewBox="0 -1 15 15"><rect x="0.5" y="0.5" width="13" height="13" rx="1.5" fill="#d6d6d6" stroke="#9c9c9c"/>
<path d="M3 6.5 L6 10 L13 1.5" fill="none" stroke="#8a8a8a" stroke-width="2.2" stroke-linejoin="round"/></svg><span class="t" style="left:39.5px;top:80.4px;font-size:13px;color:#a9a9a9;">Unity appmenu integration for Firefox</span><span class="t" style="left:39px;top:98.59px;font-size:11px;color:#a9a9a9;">firefox-globalmenu (Size: 47 kB)</span><svg class="ic" style="left:10px;top:87px;" width="15" height="15" viewBox="0 -1 15 15"><rect x="0.5" y="0.5" width="13" height="13" rx="1.5" fill="#d6d6d6" stroke="#9c9c9c"/>
<path d="M3 6.5 L6 10 L13 1.5" fill="none" stroke="#8a8a8a" stroke-width="2.2" stroke-linejoin="round"/></svg><span class="t" style="left:39.5px;top:128.4px;font-size:13px;color:#a9a9a9;">Safe and easy web browser from Mozilla - GNOME support</span><span class="t" style="left:39px;top:146.59px;font-size:11px;color:#a9a9a9;">firefox-gnome-support (Size: 9 kB)</span><svg class="ic" style="left:10px;top:135px;" width="15" height="15" viewBox="0 -1 15 15"><rect x="0.5" y="0.5" width="13" height="13" rx="1.5" fill="#d6d6d6" stroke="#9c9c9c"/>
<path d="M3 6.5 L6 10 L13 1.5" fill="none" stroke="#8a8a8a" stroke-width="2.2" stroke-linejoin="round"/></svg><span class="t" style="left:39.5px;top:176.4px;font-size:13px;color:#a9a9a9;">GNU compression utilities</span><span class="t" style="left:39px;top:194.59px;font-size:11px;color:#a9a9a9;">gzip (Size: 77 kB)</span><svg class="ic" style="left:10px;top:183px;" width="15" height="15" viewBox="0 -1 15 15"><rect x="0.5" y="0.5" width="13" height="13" rx="1.5" fill="#d6d6d6" stroke="#9c9c9c"/>
<path d="M3 6.5 L6 10 L13 1.5" fill="none" stroke="#8a8a8a" stroke-width="2.2" stroke-linejoin="round"/></svg><span class="t" style="left:39.5px;top:224.4px;font-size:13px;color:#a9a9a9;">ISC DHCP client</span><span class="t" style="left:39px;top:242.59px;font-size:11px;color:#a9a9a9;">isc-dhcp-client (Size: 287 kB)</span><svg class="ic" style="left:10px;top:231px;" width="15" height="15" viewBox="0 -1 15 15"><rect x="0.5" y="0.5" width="13" height="13" rx="1.5" fill="#d6d6d6" stroke="#9c9c9c"/>
<path d="M3 6.5 L6 10 L13 1.5" fill="none" stroke="#8a8a8a" stroke-width="2.2" stroke-linejoin="round"/></svg><span class="t" style="left:39.5px;top:272.4px;font-size:13px;color:#a9a9a9;">common files used by all the isc-dhcp* packages</span><span class="t" style="left:39px;top:290.59px;font-size:11px;color:#a9a9a9;">isc-dhcp-common (Size: 338 kB)</span><svg class="ic" style="left:10px;top:279px;" width="15" height="15" viewBox="0 -1 15 15"><rect x="0.5" y="0.5" width="13" height="13" rx="1.5" fill="#d6d6d6" stroke="#9c9c9c"/>
<path d="M3 6.5 L6 10 L13 1.5" fill="none" stroke="#8a8a8a" stroke-width="2.2" stroke-linejoin="round"/></svg><span class="t" style="left:39.5px;top:320.4px;font-size:13px;color:#a9a9a9;">query and manipulate user account information - shared libraries</span><span class="t" style="left:39px;top:338.59px;font-size:11px;color:#a9a9a9;">libaccountsservice0 (Size: 71 kB)</span><svg class="ic" style="left:10px;top:327px;" width="15" height="15" viewBox="0 -1 15 15"><rect x="0.5" y="0.5" width="13" height="13" rx="1.5" fill="#d6d6d6" stroke="#9c9c9c"/>
<path d="M3 6.5 L6 10 L13 1.5" fill="none" stroke="#8a8a8a" stroke-width="2.2" stroke-linejoin="round"/></svg><div style="left:558px;top:0px;width:16px;height:347px;background:linear-gradient(90deg,#e9e9e9,#f7f7f7);border-left:1px solid #c8c8c8"></div><div style="left:562px;top:15px;width:7px;height:51px;background:#cfcfcf;border-radius:4px;border:1px solid #c0c0c0"></div></div><span class="t" style="left:157px;width:400.5px;text-align:right;top:587.50px;font-size:13px;color:#a9a9a9">35.6 MB will be downloaded.</span><div style="left:480px;top:606px;width:130px;height:27px;border:1px solid #b3b3b3;border-radius:3px;background:linear-gradient(#d6d6d6,#cbcbcb)"></div><span class="t" style="left:251.5px;width:600px;text-align:center;top:613.0px;font-size:13px;color:#a9a9a9;">Check</span><div style="left:618px;top:606px;width:116px;height:27px;border:1px solid #b3b3b3;border-radius:3px;background:linear-gradient(#d6d6d6,#cbcbcb)"></div><svg class="ic" style="left:623px;top:611px;" width="18" height="18" viewBox="0 0 18 18"><path d="M2 10 L7 16 L16 2" fill="none" stroke="#b8cf78" stroke-width="3" stroke-linecap="round" stroke-linejoin="round"/></svg><span class="t" style="left:642.5px;top:613.0px;font-size:13px;color:#a9a9a9;">Install Updates</span><div style="left:651px;top:691px;width:83px;height:28px;border:1px solid #b3b3b3;border-radius:3px;background:linear-gradient(#d6d6d6,#cbcbcb)"></div><svg class="ic" style="left:667px;top:697px;" width="18" height="17" viewBox="0 0 18 17"><path d="M3 3 L15 14 M15 3 L3 14" stroke="#9a9a9a" stroke-width="4.5" stroke-linecap="round"/></svg><span class="t" style="left:686.5px;top:698.0px;font-size:13px;color:#a9a9a9;">Close</span>
<div style="left:59px;top:574px;width:438px;height:184px;background:#d2d2d2;box-shadow:0 0 0 1px #4a4542,0 3px 13px 3px rgba(0,0,0,.38)"></div><div style="left:59px;top:574px;width:438px;height:15px;background:linear-gradient(#d3e0ee,#abc4dd)"></div><svg class="ic" style="left:62px;top:575px;" width="12" height="12" viewBox="0 0 12 12"><defs><linearGradient id="dltg" x1="0" y1="0" x2="0" y2="1"><stop offset="0" stop-color="#f6a35c"/><stop offset="1" stop-color="#e8681e"/></linearGradient></defs>
<rect x="0.5" y="0.5" width="11" height="11" rx="1.0" fill="url(#dltg)" stroke="#c85a14" stroke-width="1"/>
<polygon points="6.00,1.56 7.24,3.01 9.14,2.86 8.99,4.76 10.44,6.00 8.99,7.24 9.14,9.14 7.24,8.99 6.00,10.44 4.76,8.99 2.86,9.14 3.01,7.24 1.56,6.00 3.01,4.76 2.86,2.86 4.76,3.01" fill="#ffffff"/>
<polygon points="6.00,3.36 7.92,5.76 6.72,5.76 6.72,8.16 5.28,8.16 5.28,5.76 4.08,5.76" fill="#e8681e"/></svg><span class="t" style="left:-15px;width:600px;text-align:center;top:575.84px;font-size:12px;color:#f4f7fa;text-shadow:0 0 2px #8aa6c4">Applying changes</span><svg class="ic" style="left:77px;top:608px;" width="40" height="40" viewBox="0 0 40 40"><defs><linearGradient id="blg" x1="0" y1="0" x2="0" y2="1"><stop offset="0" stop-color="#7fd0f4"/><stop offset=".45" stop-color="#3b9ae4"/><stop offset="1" stop-color="#2a7dd6"/></linearGradient></defs>
<rect x="0.5" y="0.5" width="39" height="39" rx="3" fill="url(#blg)" stroke="#1f6bb8"/>
<path d="M3 22 Q20 15 37 18 L37 37 L3 37Z" fill="#2f86dc" opacity=".35"/>
<polygon points="15,11 25,11 25,22 31,22 20,34 9,22 15,22" fill="#f6f6f6"/></svg><span class="t" style="left:133px;top:604.96px;font-size:16px;color:#2b2b2b;font-weight:bold;">Applying changes</span><div style="left:133px;top:634px;width:350px;height:10px;border:1px solid #9c9c9c;border-radius:5px;background:linear-gradient(#dcdcdc,#fafafa 40%,#f2f2f2);overflow:hidden"><div style="left:0px;top:0px;width:69px;height:8px;border-right:1px solid #8ea6bd;border-radius:4px;background:repeating-linear-gradient(-60deg,#a9bfd5 0 6px,#9cb3cb 6px 12px)"></div></div><span class="t" style="left:133px;top:651.8px;font-size:13px;color:#2b2b2b;">Downloading linux-image-3.0.0-16-generic</span><svg class="ic" style="left:137px;top:683px;" width="8" height="11" viewBox="0 0 8 11"><polygon points="0.5,0.5 7.5,5.5 0.5,10.5" fill="#4a4a4a"/></svg><span class="t" style="left:148.5px;top:682.42px;font-size:12.5px;color:#2b2b2b;">Details</span><div style="left:400px;top:716px;width:83px;height:28px;border:1px solid #9a9a9a;border-radius:3px;background:linear-gradient(#f0f0f0,#d9d9d9);box-shadow:inset 0 1px 0 #fff"></div><svg class="ic" style="left:411px;top:719px;" width="21" height="21" viewBox="0 0 21 21"><defs><radialGradient id="cng" cx=".4" cy=".3" r=".7"><stop offset="0" stop-color="#f26a6a"/><stop offset="1" stop-color="#b81414"/></radialGradient></defs>
<circle cx="10.5" cy="10.5" r="10" fill="url(#cng)" stroke="#8e0f0f" stroke-width=".8"/>
<path d="M6.5 6.5 L14.5 14.5 M14.5 6.5 L6.5 14.5" stroke="#fff" stroke-width="2.6"/></svg><span class="t" style="left:432.5px;top:723.42px;font-size:12.5px;color:#2b2b2b;">Cancel</span>
<div style="left:1669px;top:9px;width:249px;height:419px;background:#d0d0d0;box-shadow:0 0 0 1px #524d49,0 2px 11px 2px rgba(0,0,0,.33)"></div><div style="left:1669px;top:9px;width:249px;height:15px;background:linear-gradient(#f9fafc,#e7edf5)"></div><svg class="ic" style="left:1671px;top:9px;" width="14" height="14" viewBox="0 0 14 14"><path d="M2 13 Q0.5 5 6 1.5 Q11 0 12.5 5 Q13.5 9 12 13Z" fill="#8f5aa8" stroke="#5e2f78" stroke-width=".8"/><circle cx="5.5" cy="7" r="1.8" fill="#fff"/><circle cx="9" cy="7" r="1.8" fill="#fff"/><polygon points="6,10 9,10 7.5,12" fill="#f0a020"/></svg><span class="t" style="left:1467px;width:600px;text-align:center;top:10.34px;font-size:12px;color:#a3a3a3;text-shadow:0 1px 0 #fff">Buddy List</span><svg class="ic" style="left:1849px;top:10px;" width="21" height="12" viewBox="0 0 21 12"><rect x="0.5" y="0.5" width="20" height="11" rx="2" fill="url(#btng)" stroke="#b4b4b4"/><rect x="7.5" y="7.5" width="6" height="2" fill="#9a9a9a"/></svg><svg class="ic" style="left:1872px;top:10px;" width="21" height="12" viewBox="0 0 21 12"><rect x="0.5" y="0.5" width="20" height="11" rx="2" fill="url(#btng)" stroke="#b4b4b4"/><rect x="7.0" y="2.5" width="7" height="7" fill="none" stroke="#9a9a9a" stroke-width="1.2"/><rect x="7.0" y="2" width="7" height="1.6" fill="#9a9a9a"/></svg><svg class="ic" style="left:1895px;top:10px;" width="21" height="12" viewBox="0 0 21 12"><rect x="0.5" y="0.5" width="20" height="11" rx="2" fill="url(#btng)" stroke="#b4b4b4"/><path d="M7.0 2.5 L14.0 9.5 M14.0 2.5 L7.0 9.5" stroke="#9a9a9a" stroke-width="2"/></svg><span class="t" style="left:1678.3px;top:28.3px;font-size:13px;color:#1e1e1e;">Buddies</span><span class="t" style="left:1744px;top:28.3px;font-size:13px;color:#1e1e1e;">Accounts</span><span class="t" style="left:1815.7px;top:28.3px;font-size:13px;color:#1e1e1e;">Tools</span><span class="t" style="left:1865.1px;top:28.3px;font-size:13px;color:#1e1e1e;">Help</span><svg class="ic" style="left:1895px;top:26px;" width="16" height="16" viewBox="0 0 16 16"><path d="M1.5 2.5 L13.5 2.5 L13.5 10.5 L6 10.5 L3 14 L3.5 10.5 L1.5 10.5Z" fill="#fafafa" stroke="#bbb" stroke-width=".8"/><circle cx="11.5" cy="4" r="3.2" fill="#f2d62a"/><polygon points="11.5,1.8 12.1,3.4 13.6,3.5 12.4,4.5 12.8,6 11.5,5.2 10.2,6 10.6,4.5 9.4,3.5 10.9,3.4" fill="#fff"/></svg><div style="left:1669px;top:45px;width:249px;height:342px;background:#fcfcfc"></div><div style="left:1669px;top:45px;width:249px;height:19px;background:#9db4cf"></div><svg class="ic" style="left:1672px;top:49px;" width="9" height="10" viewBox="0 0 9 10"><polygon points="0.5,0.5 8,5 0.5,9.5" fill="#2e2e2e"/></svg><svg class="ic" style="left:1672px;top:68px;" width="9" height="10" viewBox="0 0 9 10"><polygon points="0.5,0.5 8,5 0.5,9.5" fill="#2e2e2e"/></svg><svg class="ic" style="left:1672px;top:87px;" width="9" height="10" viewBox="0 0 9 10"><polygon points="0.5,0.5 8,5 0.5,9.5" fill="#2e2e2e"/></svg><span class="t" style="left:1684.4px;top:47.5px;font-size:13px;color:#f4f7fa;font-weight:bold;">Jabber <span style="font-weight:normal">(4/15)</span></span><span class="t" style="left:1684.4px;top:66.5px;font-size:13px;color:#111;font-weight:bold;">Twitter <span style="font-weight:normal">(1/1)</span></span><span class="t" style="left:1684.4px;top:85.5px;font-size:13px;color:#111;font-weight:bold;letter-spacing:0.25px">Priatelia na Facebooku <span style="font-weight:normal">(4/32)</span></span><div style="left:1669px;top:387px;width:249px;height:41px;background:#cfcfcf;border-top:1px solid #c4c4c4"></div><div style="left:1600px;top:394px;width:278px;height:31px;border:1px solid #b0b0b0;border-radius:3px;background:linear-gradient(#e4e4e4,#d0d0d0);box-shadow:0 1px 1px rgba(0,0,0,.12)"></div><span class="t" style="left:1700.5px;top:401.5px;font-size:13px;color:#1e1e1e;">Available</span><div style="left:1851px;top:398px;width:1px;height:23px;background:#c0c0c0"></div><svg class="ic" style="left:1861px;top:409px;" width="10" height="7" viewBox="0 0 10 7"><polygon points="0.5,0.5 9.5,0.5 5,6.5" fill="#555"/></svg><svg class="ic" style="left:1884px;top:394px;" width="31" height="31" viewBox="0 0 31 31"><rect x="0.5" y="0.5" width="30" height="30" fill="#fff" stroke="#3a6fc2"/>
<rect x="2" y="2" width="27" height="20" fill="#6ea0d8"/><rect x="2" y="14" width="27" height="8" fill="#b8d4f0"/>
<circle cx="24" cy="7" r="3.5" fill="#f4e24a"/><circle cx="11" cy="12" r="6" fill="#e8a04a"/><path d="M3 22 Q11 12 19 22Z" fill="#f0f0f0"/></svg><svg class="ic" style="left:1906px;top:419px;" width="8" height="8" viewBox="0 0 8 8"><polygon points="8,0 8,8 0,8" fill="#b8b8b8"/></svg>
<div style="left:770px;top:593px;width:340px;height:405px;background:#d0d0d0;box-shadow:0 0 0 1px #524d49,0 2px 11px 2px rgba(0,0,0,.33)"></div><div style="left:770px;top:593px;width:340px;height:15px;background:linear-gradient(#f9fafc,#e7edf5)"></div><svg class="ic" style="left:772px;top:593px;" width="14" height="14" viewBox="0 0 14 14"><rect x="0" y="0" width="14" height="14" fill="#3a5aa8"/><path d="M3 3 Q7 1 11 3 L11 10 Q7 14 3 10Z" fill="#e8e8f0"/><path d="M4 6 L6 5.5 M8 5.5 L10 6 M5 9 Q7 10 9 9" stroke="#555" stroke-width=".7"/></svg><span class="t" style="left:779px;top:612.0px;font-size:13px;color:#1e1e1e;">Conversation</span><div style="left:771px;top:629px;width:338px;height:360px;background:linear-gradient(#dcdcdc,#d0d0d0 40px);border:1px solid #b8b8b8;border-radius:3px 3px 0 0"></div><svg class="ic" style="left:781px;top:643px;" width="18" height="18" viewBox="0 0 18 18"><circle cx="9" cy="9" r="8" fill="#7cc04a" stroke="#4e8a2a"/></svg><div style="left:777px;top:673px;width:330px;height:234px;background:#f6f6f6;border:1px solid #bdbdbd"></div><svg class="ic" style="left:781px;top:674px;" width="18" height="18" viewBox="0 0 18 18"><circle cx="9" cy="9" r="7.5" fill="none" stroke="#e39a3a" stroke-width="2.5"/><path d="M3 9 L15 9" stroke="#e39a3a" stroke-width="2"/></svg><span class="t" style="left:781px;top:703.0px;font-size:13px;color:#cc2b2b;">(1</span><span class="t" style="left:781px;top:731.0px;font-size:13px;color:#1e1e1e;">za</span><span class="t" style="left:781px;top:753.0px;font-size:13px;color:#3465a4;">(1</span><span class="t" style="left:781px;top:775.0px;font-size:13px;color:#3465a4;">(1</span><span class="t" style="left:781px;top:792.0px;font-size:13px;color:#1e1e1e;">dv</span><span class="t" style="left:781px;top:814.0px;font-size:13px;color:#cc2b2b;">(1</span><span class="t" style="left:781px;top:842.0px;font-size:13px;color:#1e1e1e;">in</span><span class="t" style="left:781px;top:864.0px;font-size:13px;color:#cc2b2b;">(1</span><svg class="ic" style="left:781px;top:882px;" width="18" height="18" viewBox="0 0 18 18"><circle cx="9" cy="9" r="8" fill="#e0a848" stroke="#b57a22"/></svg><div style="left:777px;top:915px;width:330px;height:30px;background:linear-gradient(#d8d8d8,#c8c8c8);border:1px solid #bdbdbd"></div><svg class="ic" style="left:782px;top:924px;" width="10" height="10" viewBox="0 0 10 10"><circle cx="5" cy="5" r="4" fill="#333"/></svg><div style="left:777px;top:945px;width:326px;height:45px;background:linear-gradient(#f2f2f2,#fcfcfc)"></div><svg class="ic" style="left:1097px;top:985px;" width="9" height="9" viewBox="0 0 9 9"><polygon points="9,0 9,9 0,9" fill="#b8b8b8"/></svg>
<div style="left:791px;top:346px;width:925px;height:633px;background:#d0d0d0;box-shadow:0 0 0 1px #524d49,0 2px 11px 2px rgba(0,0,0,.33)"></div><div style="left:791px;top:346px;width:925px;height:15px;background:linear-gradient(#f9fafc,#e7edf5)"></div><svg class="ic" style="left:793px;top:348px;" width="14" height="12" viewBox="0 0 14 12"><rect x="1.5" y="0.5" width="6" height="3" rx="1" fill="#f0f0f0"/><rect x="1" y="2" width="12" height="3" fill="#f4f4f4"/><rect x="0.5" y="4.5" width="13" height="7" rx="1" fill="#8fb0d4" stroke="#56789e" stroke-width=".8"/><polygon points="7,5.5 10.5,8.3 9.5,8.3 9.5,11 8,11 8,9.5 6,9.5 6,11 4.5,11 4.5,8.3 3.5,8.3" fill="#3d5572"/></svg><span class="t" style="left:925px;width:600px;text-align:center;top:347.34px;font-size:12px;color:#a3a3a3;text-shadow:0 1px 0 #fff">luko - File Manager</span><svg class="ic" style="left:1647px;top:347px;" width="21" height="12" viewBox="0 0 21 12"><rect x="0.5" y="0.5" width="20" height="11" rx="2" fill="url(#btng)" stroke="#b4b4b4"/><rect x="7.5" y="7.5" width="6" height="2" fill="#9a9a9a"/></svg><svg class="ic" style="left:1670px;top:347px;" width="21" height="12" viewBox="0 0 21 12"><rect x="0.5" y="0.5" width="20" height="11" rx="2" fill="url(#btng)" stroke="#b4b4b4"/><rect x="7.0" y="2.5" width="7" height="7" fill="none" stroke="#9a9a9a" stroke-width="1.2"/><rect x="7.0" y="2" width="7" height="1.6" fill="#9a9a9a"/></svg><svg class="ic" style="left:1693px;top:347px;" width="21" height="12" viewBox="0 0 21 12"><rect x="0.5" y="0.5" width="20" height="11" rx="2" fill="url(#btng)" stroke="#b4b4b4"/><path d="M7.0 2.5 L14.0 9.5 M14.0 2.5 L7.0 9.5" stroke="#9a9a9a" stroke-width="2"/></svg><span class="t" style="left:800px;top:364.8px;font-size:13px;color:#1e1e1e;">File</span><span class="t" style="left:837px;top:364.8px;font-size:13px;color:#1e1e1e;">Edit</span><span class="t" style="left:876.5px;top:364.8px;font-size:13px;color:#1e1e1e;">View</span><span class="t" style="left:922px;top:364.8px;font-size:13px;color:#1e1e1e;">Go</span><span class="t" style="left:957px;top:364.8px;font-size:13px;color:#1e1e1e;">Help</span><div style="left:791px;top:381px;width:925px;height:36px;background:linear-gradient(#d2d2d2,#c6c6c6);border-bottom:1px solid #a4a4a4"></div><svg class="ic" style="left:797px;top:388px;" width="24" height="24" viewBox="0 0 24 24"><ellipse cx="13" cy="21" rx="9" ry="2" fill="#000" opacity=".12"/><polygon points="1.5,11 11.5,1.5 11.5,6.5 22.5,6.5 22.5,15.5 11.5,15.5 11.5,20.5" fill="#b8d858" stroke="#7ea52a" stroke-width="1.2"/></svg><svg class="ic" style="left:834px;top:398px;" width="9" height="7" viewBox="0 0 9 7"><polygon points="0.5,0.5 8.5,0.5 4.5,6" fill="#6a6a6a"/></svg><svg class="ic" style="left:856px;top:388px;" width="24" height="24" viewBox="0 0 24 24"><polygon points="22.5,11 12.5,1.5 12.5,6.5 1.5,6.5 1.5,15.5 12.5,15.5 12.5,20.5" fill="#d0d0ce" stroke="#c0c0bc" stroke-width="1.2"/></svg><svg class="ic" style="left:893px;top:398px;" width="9" height="7" viewBox="0 0 9 7"><polygon points="0.5,0.5 8.5,0.5 4.5,6" fill="#b4b4b4"/></svg><svg class="ic" style="left:916px;top:388px;" width="22" height="24" viewBox="0 0 22 24"><ellipse cx="11" cy="21" rx="9" ry="2" fill="#000" opacity=".12"/><polygon points="11,1.5 21,11.5 16,11.5 16,21.5 6,21.5 6,11.5 1,11.5" fill="#b0d448" stroke="#7ea52a" stroke-width="1.2"/></svg><svg class="ic" style="left:950px;top:389px;" width="24" height="23" viewBox="0 0 24 23"><path d="M19 12 A8 8 0 1 1 15.5 5.2" fill="none" stroke="#5d9ee0" stroke-width="4.2"/><polygon points="13,1 22,2 20,10" fill="#5d9ee0"/><ellipse cx="11" cy="21.5" rx="8" ry="1.5" fill="#000" opacity=".1"/></svg><div style="left:984px;top:391px;width:1px;height:22px;background:linear-gradient(transparent,#b8b8b8,transparent)"></div><svg class="ic" style="left:995px;top:389px;" width="24" height="24" viewBox="0 0 24 24"><rect x="1.5" y="1" width="10" height="4" rx="1" fill="#f0f0f0" stroke="#bbb" stroke-width=".6"/><rect x="1" y="4" width="22" height="4" fill="#f4f4f4"/><rect x="0.5" y="6.5" width="23" height="16" rx="1.5" fill="#6d92c0" stroke="#4a6c95"/><polygon points="12,9 19,15 17,15 17,21 14,21 14,17 10,17 10,21 7,21 7,15 5,15" fill="#3a5470"/></svg><div style="left:1030px;top:391px;width:1px;height:22px;background:linear-gradient(transparent,#b8b8b8,transparent)"></div><div style="left:1041px;top:388px;width:644px;height:24px;background:#fcfcfc;border:1px solid #9d9d9d;border-radius:4px;box-shadow:inset 0 1px 2px rgba(0,0,0,.12)"></div><svg class="ic" style="left:1046px;top:393px;" width="15" height="14" viewBox="0 0 15 14"><rect x="1" y="0.5" width="6" height="3" fill="#e8e8e8" stroke="#aaa" stroke-width=".5"/><rect x="0.5" y="3.5" width="14" height="10" rx="1" fill="#6f93bf" stroke="#4c6e96"/><polygon points="7.5,5 12,9 11,9 11,12 4,12 4,9 3,9" fill="#38506b"/></svg><span class="t" style="left:1065px;top:393.87px;font-size:13.5px;color:#1e1e1e;">/home/luko</span><div style="left:1688px;top:389px;width:22px;height:23px;border:1px solid #a8a8a8;border-radius:3px;background:linear-gradient(#e8e8e8,#cfcfcf);box-shadow:0 1px 1px rgba(0,0,0,.15)"></div><svg class="ic" style="left:1693px;top:397px;" width="10" height="7" viewBox="0 0 10 7"><polygon points="0.5,0.5 9.5,0.5 5,6.5" fill="#5e5e5e"/></svg><div style="left:797px;top:424px;width:170px;height:528px;background:#e7eaee;border:1px solid #acacac;overflow:hidden"><div style="left:1px;top:1px;width:168px;height:22px;background:#a0b6d0"></div><svg class="ic" style="left:3px;top:3px;" width="16" height="16" viewBox="0 0 16 16"><rect x="1.5" y="1" width="7" height="3" rx="1" fill="#f0f0f0" stroke="#aaa" stroke-width=".6"/>
<rect x="1" y="3" width="14" height="3" fill="#f4f4f4" stroke="#bbb" stroke-width=".6"/>
<rect x="0.5" y="5.5" width="15" height="10" rx="1" fill="#6f93bf" stroke="#4c6e96"/>
<polygon points="8,7 12.5,10.5 11,10.5 11,14 9,14 9,12 7,12 7,14 5,14 5,10.5 3.5,10.5" fill="#38506b"/></svg><span class="t" style="left:24.299999999999955px;top:5.0px;font-size:13px;color:#f5f8fb;">luko</span><svg class="ic" style="left:3px;top:26px;" width="16" height="16" viewBox="0 0 16 16"><rect x="0.5" y="1.5" width="15" height="13" rx="1.5" fill="#4f7ba8" stroke="#2c4e74"/>
<rect x="1" y="2" width="14" height="3" fill="#e8e8e8"/>
<rect x="3.5" y="10" width="9" height="4" fill="#2e3f52"/></svg><span class="t" style="left:24.299999999999955px;top:28.0px;font-size:13px;color:#1e1e1e;">Desktop</span><svg class="ic" style="left:3px;top:49px;" width="16" height="16" viewBox="0 0 16 16"><defs><linearGradient id="trg" x1="0" y1="0" x2="1" y2="0"><stop offset="0" stop-color="#8a8a8a"/><stop offset=".4" stop-color="#e6e6e6"/><stop offset="1" stop-color="#8f8f8f"/></linearGradient></defs>
<path d="M3.5 3 L12.5 3 L12 15 L4 15Z" fill="url(#trg)" stroke="#777" stroke-width=".8"/>
<ellipse cx="8" cy="3" rx="4.5" ry="1.6" fill="#cfcfcf" stroke="#777" stroke-width=".8"/></svg><span class="t" style="left:24.299999999999955px;top:51.0px;font-size:13px;color:#1e1e1e;">Trash</span><svg class="ic" style="left:3px;top:72px;" width="16" height="16" viewBox="0 0 16 16"><defs><linearGradient id="drg" x1="0" y1="0" x2="0" y2="1"><stop offset="0" stop-color="#f6f6f6"/><stop offset="1" stop-color="#cfcfcf"/></linearGradient></defs>
<path d="M2.5 1.5 L13.5 1.5 L15.5 12 L0.5 12Z" fill="url(#drg)" stroke="#8a8a8a" stroke-width=".8"/>
<ellipse cx="8" cy="6.5" rx="4.8" ry="3.6" fill="none" stroke="#b0b0b0" stroke-width=".8"/><circle cx="8" cy="6.5" r="1" fill="#b8b8b8"/>
<rect x="0.5" y="11.5" width="15" height="3.5" rx="1" fill="#4a4a4a"/><rect x="2" y="12.5" width="12" height="1" fill="#8a8a8a"/></svg><span class="t" style="left:24.299999999999955px;top:74.0px;font-size:13px;color:#1e1e1e;">File System</span><svg class="ic" style="left:3px;top:95px;" width="16" height="16" viewBox="0 0 16 16"><defs><linearGradient id="drg" x1="0" y1="0" x2="0" y2="1"><stop offset="0" stop-color="#f6f6f6"/><stop offset="1" stop-color="#cfcfcf"/></linearGradient></defs>
<path d="M2.5 1.5 L13.5 1.5 L15.5 12 L0.5 12Z" fill="url(#drg)" stroke="#8a8a8a" stroke-width=".8"/>
<ellipse cx="8" cy="6.5" rx="4.8" ry="3.6" fill="none" stroke="#b0b0b0" stroke-width=".8"/><circle cx="8" cy="6.5" r="1" fill="#b8b8b8"/>
<rect x="0.5" y="11.5" width="15" height="3.5" rx="1" fill="#4a4a4a"/><rect x="2" y="12.5" width="12" height="1" fill="#8a8a8a"/></svg><span class="t" style="left:24.299999999999955px;top:97.0px;font-size:13px;color:#1e1e1e;">Haiku</span><svg class="ic" style="left:3px;top:120px;" width="16" height="16" viewBox="0 0 16 16"><polygon points="5,1 11,1 11,7 15,7 8,15 1,7 5,7" fill="#a8cc3c" stroke="#6f9a1c" stroke-width=".8"/></svg><span class="t" style="left:24.299999999999955px;top:122.0px;font-size:13px;color:#1e1e1e;">Download</span><svg class="ic" style="left:3px;top:143px;" width="16" height="16" viewBox="0 0 16 16"><path d="M5 3 L14 1 L14 12" fill="none" stroke="#3c3c3c" stroke-width="2"/><path d="M5 3 L5 13" stroke="#3c3c3c" stroke-width="2"/>
<ellipse cx="3.5" cy="13" rx="2.8" ry="2.2" fill="#3c3c3c"/><ellipse cx="12.5" cy="12" rx="2.8" ry="2.2" fill="#3c3c3c"/></svg><span class="t" style="left:24.299999999999955px;top:145.0px;font-size:13px;color:#1e1e1e;">Music</span><svg class="ic" style="left:3px;top:166px;" width="16" height="16" viewBox="0 0 16 16"><rect x="1.5" y="2.5" width="10" height="10" fill="#eee" stroke="#888" stroke-width=".8" transform="rotate(-25 6 8)"/>
<rect x="4.5" y="4.5" width="11" height="11" fill="#f4f4f4" stroke="#888" stroke-width=".8"/>
<rect x="6.5" y="6.5" width="7" height="7" fill="#3d4336"/></svg><span class="t" style="left:24.299999999999955px;top:168.0px;font-size:13px;color:#1e1e1e;">Pictures</span><svg class="ic" style="left:3px;top:189px;" width="16" height="16" viewBox="0 0 16 16"><rect x="1.5" y="0.5" width="13" height="15" fill="#5a6a78" stroke="#3d4a55"/>
<rect x="4" y="1.5" width="8" height="6" fill="#8cb4d4"/><rect x="4" y="8.5" width="8" height="6" fill="#8cb4d4"/></svg><span class="t" style="left:24.299999999999955px;top:191.0px;font-size:13px;color:#1e1e1e;">Videos</span><div style="left:1px;top:117px;width:168px;height:1px;background:#d3d6da"></div><svg class="ic" style="left:152px;top:98px;" width="14" height="12" viewBox="0 0 14 12"><polygon points="7,0.5 13.5,7 0.5,7" fill="#3c3c3c"/><rect x="0.5" y="8.5" width="13" height="2.5" fill="#3c3c3c"/></svg></div><div style="left:967px;top:684px;width:2px;height:8px;background:repeating-linear-gradient(#9a9a9a 0 1px,transparent 1px 2px)"></div><div style="left:970px;top:424px;width:740px;height:528px;background:#fbfbfb;border:1px solid #acacac"></div><svg class="ic" style="left:981px;top:449px;" width="92" height="78" viewBox="0 0 92 78"><defs>
<linearGradient id="dkt" x1="0" y1="0" x2="0" y2="1"><stop offset="0" stop-color="#fafafa"/><stop offset="1" stop-color="#d8d8d8"/></linearGradient>
<radialGradient id="dkb" cx="65" cy="45" r="70" gradientUnits="userSpaceOnUse"><stop offset="0" stop-color="#7fbcc8"/><stop offset=".5" stop-color="#5689b0"/><stop offset="1" stop-color="#2f5f96"/></radialGradient>
</defs>
<rect x="0" y="72" width="92" height="4" rx="2" fill="#000" opacity=".08"/>
<path d="M0.5 8 Q0.5 0.5 8 0.5 L84 0.5 Q91.5 0.5 91.5 8 L91.5 67 Q91.5 74.5 84 74.5 L8 74.5 Q0.5 74.5 0.5 67Z" fill="url(#dkb)" stroke="#3f6791"/>
<path d="M0.5 8 Q0.5 0.5 8 0.5 L84 0.5 Q91.5 0.5 91.5 8 L91.5 12.5 L0.5 12.5Z" fill="url(#dkt)" stroke="#8a8a8a" stroke-width=".8"/>
<line x1="0.5" y1="13" x2="91.5" y2="13" stroke="#4a4a4a" stroke-width="1"/>
<path d="M1 40 Q46 24 91 30 L91 13.5 L1 13.5Z" fill="#fff" opacity=".08"/>
<rect x="14.5" y="60" width="63" height="14.5" fill="#33495f" opacity=".9"/>
</svg><svg class="ic" style="left:1087px;top:452px;" width="92" height="78" viewBox="0 0 92 78"><defs>
<linearGradient id="fdlp" x1="0" y1="0" x2="0" y2="1"><stop offset="0" stop-color="#fdfdfd"/><stop offset="1" stop-color="#e4e4e4"/></linearGradient>
<radialGradient id="fdlb" cx="28" cy="30" r="80" gradientUnits="userSpaceOnUse"><stop offset="0" stop-color="#b4cbe3"/><stop offset=".55" stop-color="#7a9ec8"/><stop offset="1" stop-color="#5a82b0"/></radialGradient>
</defs>
<rect x="5.5" y="0.5" width="36" height="12" rx="3" fill="#f4f4f4" stroke="#d4d4d4"/>
<rect x="3.5" y="6.5" width="85" height="14" rx="3" fill="url(#fdlp)" stroke="#d0d0d0"/>
<rect x="0" y="72" width="92" height="4" rx="2" fill="#000" opacity=".08"/>
<path d="M0.5 19.5 Q0.5 16.5 3.5 16.5 L88.5 16.5 Q91.5 16.5 91.5 19.5 L90.5 70.5 Q90.5 73.5 87.5 73.5 L4.5 73.5 Q1.5 73.5 1.5 70.5 Z" fill="url(#fdlb)" stroke="#56799f"/>
<path d="M1.5 40 Q46 28 91 34 L90.5 19.5 Q90.5 17.5 88.5 17.5 L3.5 17.5 Q1.5 17.5 1.5 19.5Z" fill="#fff" opacity=".10"/>
<defs><linearGradient id="dla" x1="0" y1="0" x2="0" y2="1"><stop offset="0" stop-color="#e2f06a"/><stop offset="1" stop-color="#86b01c"/></linearGradient></defs><polygon points="52.5,26 77,26 77,48 87,48 64.5,75 41,48 52.5,48" fill="url(#dla)" stroke="#6f9518" stroke-width=".8"/></svg><svg class="ic" style="left:1193px;top:452px;" width="92" height="78" viewBox="0 0 92 78"><defs>
<linearGradient id="fmup" x1="0" y1="0" x2="0" y2="1"><stop offset="0" stop-color="#fdfdfd"/><stop offset="1" stop-color="#e4e4e4"/></linearGradient>
<radialGradient id="fmub" cx="28" cy="30" r="80" gradientUnits="userSpaceOnUse"><stop offset="0" stop-color="#d8efff"/><stop offset=".55" stop-color="#9cc8ee"/><stop offset="1" stop-color="#74a4d4"/></radialGradient>
</defs>
<rect x="5.5" y="0.5" width="36" height="12" rx="3" fill="#f4f4f4" stroke="#f4f4f4"/>
<rect x="3.5" y="6.5" width="85" height="14" rx="3" fill="url(#fmup)" stroke="#f0f0f0"/>
<rect x="0" y="72" width="92" height="4" rx="2" fill="#000" opacity=".08"/>
<path d="M0.5 19.5 Q0.5 16.5 3.5 16.5 L88.5 16.5 Q91.5 16.5 91.5 19.5 L90.5 70.5 Q90.5 73.5 87.5 73.5 L4.5 73.5 Q1.5 73.5 1.5 70.5 Z" fill="url(#fmub)" stroke="#7aa6d2"/>
<path d="M1.5 40 Q46 28 91 34 L90.5 19.5 Q90.5 17.5 88.5 17.5 L3.5 17.5 Q1.5 17.5 1.5 19.5Z" fill="#fff" opacity=".10"/>
<defs><radialGradient id="mua" cx=".35" cy=".3" r=".7"><stop offset="0" stop-color="#d0d0d0"/><stop offset="1" stop-color="#5a5a5a"/></radialGradient></defs><path d="M57 68 L57 34 Q57 31 60 30 L84 24 Q87 23 87 26 L87 60" fill="none" stroke="#555" stroke-width="4" stroke-linejoin="round"/><path d="M57 36 L87 28 L87 34 L57 42Z" fill="#555"/><circle cx="50" cy="69" r="8.5" fill="url(#mua)"/><circle cx="80" cy="61" r="8.5" fill="url(#mua)"/></svg><svg class="ic" style="left:1299px;top:452px;" width="92" height="78" viewBox="0 0 92 78"><defs>
<linearGradient id="fpip" x1="0" y1="0" x2="0" y2="1"><stop offset="0" stop-color="#fdfdfd"/><stop offset="1" stop-color="#e4e4e4"/></linearGradient>
<radialGradient id="fpib" cx="28" cy="30" r="80" gradientUnits="userSpaceOnUse"><stop offset="0" stop-color="#b4cbe3"/><stop offset=".55" stop-color="#7a9ec8"/><stop offset="1" stop-color="#5a82b0"/></radialGradient>
</defs>
<rect x="5.5" y="0.5" width="36" height="12" rx="3" fill="#f4f4f4" stroke="#d4d4d4"/>
<rect x="3.5" y="6.5" width="85" height="14" rx="3" fill="url(#fpip)" stroke="#d0d0d0"/>
<rect x="0" y="72" width="92" height="4" rx="2" fill="#000" opacity=".08"/>
<path d="M0.5 19.5 Q0.5 16.5 3.5 16.5 L88.5 16.5 Q91.5 16.5 91.5 19.5 L90.5 70.5 Q90.5 73.5 87.5 73.5 L4.5 73.5 Q1.5 73.5 1.5 70.5 Z" fill="url(#fpib)" stroke="#56799f"/>
<path d="M1.5 40 Q46 28 91 34 L90.5 19.5 Q90.5 17.5 88.5 17.5 L3.5 17.5 Q1.5 17.5 1.5 19.5Z" fill="#fff" opacity=".10"/>
<g transform="rotate(-28 60 50)"><rect x="39" y="30" width="38" height="36" fill="#f0f0f0" stroke="#999"/><rect x="43" y="34" width="30" height="26" fill="#4a4a48"/></g><rect x="44.5" y="37.5" width="44" height="40" fill="#f2f2f2" stroke="#a8a8a8"/><rect x="49" y="42" width="35" height="30" fill="#3f4438"/></svg><svg class="ic" style="left:1405px;top:452px;" width="92" height="78" viewBox="0 0 92 78"><defs>
<linearGradient id="fvip" x1="0" y1="0" x2="0" y2="1"><stop offset="0" stop-color="#fdfdfd"/><stop offset="1" stop-color="#e4e4e4"/></linearGradient>
<radialGradient id="fvib" cx="28" cy="30" r="80" gradientUnits="userSpaceOnUse"><stop offset="0" stop-color="#b4cbe3"/><stop offset=".55" stop-color="#7a9ec8"/><stop offset="1" stop-color="#5a82b0"/></radialGradient>
</defs>
<rect x="5.5" y="0.5" width="36" height="12" rx="3" fill="#f4f4f4" stroke="#d4d4d4"/>
<rect x="3.5" y="6.5" width="85" height="14" rx="3" fill="url(#fvip)" stroke="#d0d0d0"/>
<rect x="0" y="72" width="92" height="4" rx="2" fill="#000" opacity=".08"/>
<path d="M0.5 19.5 Q0.5 16.5 3.5 16.5 L88.5 16.5 Q91.5 16.5 91.5 19.5 L90.5 70.5 Q90.5 73.5 87.5 73.5 L4.5 73.5 Q1.5 73.5 1.5 70.5 Z" fill="url(#fvib)" stroke="#56799f"/>
<path d="M1.5 40 Q46 28 91 34 L90.5 19.5 Q90.5 17.5 88.5 17.5 L3.5 17.5 Q1.5 17.5 1.5 19.5Z" fill="#fff" opacity=".10"/>
<rect x="44" y="25" width="40" height="50" fill="#46535e"/><rect x="50" y="27" width="28" height="22" fill="#7ab0c8"/><rect x="50" y="51" width="28" height="22" fill="#6aa4c0"/><rect x="45.5" y="28" width="3" height="2" fill="#9aa7b2"/><rect x="79.5" y="28" width="3" height="2" fill="#9aa7b2"/><rect x="45.5" y="32" width="3" height="2" fill="#9aa7b2"/><rect x="79.5" y="32" width="3" height="2" fill="#9aa7b2"/><rect x="45.5" y="36" width="3" height="2" fill="#9aa7b2"/><rect x="79.5" y="36" width="3" height="2" fill="#9aa7b2"/><rect x="45.5" y="40" width="3" height="2" fill="#9aa7b2"/><rect x="79.5" y="40" width="3" height="2" fill="#9aa7b2"/><rect x="45.5" y="44" width="3" height="2" fill="#9aa7b2"/><rect x="79.5" y="44" width="3" height="2" fill="#9aa7b2"/><rect x="45.5" y="48" width="3" height="2" fill="#9aa7b2"/><rect x="79.5" y="48" width="3" height="2" fill="#9aa7b2"/><rect x="45.5" y="52" width="3" height="2" fill="#9aa7b2"/><rect x="79.5" y="52" width="3" height="2" fill="#9aa7b2"/><rect x="45.5" y="56" width="3" height="2" fill="#9aa7b2"/><rect x="79.5" y="56" width="3" height="2" fill="#9aa7b2"/><rect x="45.5" y="60" width="3" height="2" fill="#9aa7b2"/><rect x="79.5" y="60" width="3" height="2" fill="#9aa7b2"/><rect x="45.5" y="64" width="3" height="2" fill="#9aa7b2"/><rect x="79.5" y="64" width="3" height="2" fill="#9aa7b2"/><rect x="45.5" y="68" width="3" height="2" fill="#9aa7b2"/><rect x="79.5" y="68" width="3" height="2" fill="#9aa7b2"/><rect x="45.5" y="72" width="3" height="2" fill="#9aa7b2"/><rect x="79.5" y="72" width="3" height="2" fill="#9aa7b2"/></svg><span class="t" style="left:727px;width:600px;text-align:center;top:536.3px;font-size:13px;color:#1e1e1e;">Desktop</span><span class="t" style="left:832px;width:600px;text-align:center;top:536.3px;font-size:13px;color:#1e1e1e;">Downloads</span><span class="t" style="left:938px;width:600px;text-align:center;top:536.3px;font-size:13px;color:#1e1e1e;">Music</span><span class="t" style="left:1044px;width:600px;text-align:center;top:536.3px;font-size:13px;color:#1e1e1e;">Pictures</span><span class="t" style="left:1150px;width:600px;text-align:center;top:536.3px;font-size:13px;color:#1e1e1e;">Videos</span><div style="left:793px;top:958px;width:917px;height:1px;background:#bdbdbd"></div><span class="t" style="left:793px;top:962.26px;font-size:12.1px;color:#333;">5 items (20.0 KB), Free space: 244.8 GB</span><svg class="ic" style="left:1706px;top:969px;" width="8" height="8" viewBox="0 0 8 8"><polygon points="8,0 8,8 0,8" fill="#b0b0b0"/></svg>
<div style="left:0px;top:1048px;width:1920px;height:32px;background:rgba(45,50,55,.18);border-top:1px solid rgba(255,255,255,.05)"></div><svg class="ic" style="left:5px;top:1053px;" width="23" height="23" viewBox="0 0 23 23"><defs><linearGradient id="tbug" x1="0" y1="0" x2="0" y2="1"><stop offset="0" stop-color="#f6a35c"/><stop offset="1" stop-color="#e8681e"/></linearGradient></defs>
<rect x="0.5" y="0.5" width="22" height="22" rx="1.8" fill="url(#tbug)" stroke="#c85a14" stroke-width="1"/>
<polygon points="11.50,2.99 13.88,5.76 17.52,5.48 17.24,9.12 20.01,11.50 17.24,13.88 17.52,17.52 13.88,17.24 11.50,20.01 9.12,17.24 5.48,17.52 5.76,13.88 2.99,11.50 5.76,9.12 5.48,5.48 9.12,5.76" fill="#ffffff"/>
<polygon points="11.50,6.44 15.18,11.04 12.88,11.04 12.88,15.64 10.12,15.64 10.12,11.04 7.82,11.04" fill="#e8681e"/></svg><div style="left:36px;top:1054px;width:1px;height:21px;background:rgba(20,25,30,.35)"></div><svg class="ic" style="left:44px;top:1052px;" width="24" height="24" viewBox="0 0 24 24"><defs><radialGradient id="glg" cx=".45" cy=".3" r=".75"><stop offset="0" stop-color="#5fd0f0"/><stop offset=".55" stop-color="#2f86d4"/><stop offset="1" stop-color="#1d4f9e"/></radialGradient></defs>
<circle cx="12" cy="12" r="11.5" fill="url(#glg)"/>
<path d="M3.5 8 Q6 4.5 10 4 L12 5 L11 7 L9 8 L10 10 L8 12 L6 11 L4.5 12 Q3 10 3.5 8Z M8 13 L11 13.5 L12 15 L11 18 L9.5 21 L8.5 20 L8 17 L7 15Z M13 4 Q16 3 19 5 L21 8 L19 9 L18 8 L16 9 L17 11 L15 11 L14 9 L13 7Z M15 12 L18 12 L20 14 L18 17 L16 16 L15 14Z" fill="#1f4f8a" opacity=".85"/></svg><svg class="ic" style="left:59px;top:1061px;" width="12" height="18" viewBox="0 0 12 18"><polygon points="0.5,0.5 0.5,14 4,11 6.5,16.5 8.5,15.5 6,10.5 10.5,10.5" fill="#f4f4f4" stroke="#222" stroke-width=".9"/></svg><svg class="ic" style="left:75px;top:1054px;" width="26" height="22" viewBox="0 0 26 22"><rect x="0.5" y="0.5" width="25" height="21" rx="1" fill="#2a2a2a" stroke="#d8d8d8" stroke-width="1.4"/><path d="M5 5 L9 8 L5 11" fill="none" stroke="#fff" stroke-width="1.2"/><rect x="10" y="11" width="5" height="1.4" fill="#fff"/></svg><div style="left:882px;top:1048px;width:108px;height:32px;background:#323232;border:1px solid #4a4a4a"></div><div style="left:883px;top:1049px;width:53px;height:31px;background:#222"></div><div style="left:887px;top:1052px;width:17px;height:17px;border:1px solid #f0f0f0;background:#333"></div><div style="left:885px;top:1065px;width:12px;height:5px;border:1px solid #f0f0f0;background:#333"></div><div style="left:905px;top:1059px;width:27px;height:19px;border:1px solid #f0f0f0;background:#333"></div><svg class="ic" style="left:910px;top:1063px;" width="15" height="13" viewBox="0 0 15 13"><rect x="1" y="0.5" width="6" height="3" fill="#eee"/><rect x="0.5" y="2.5" width="14" height="10.5" rx="1" fill="#7fa3cc"/><polygon points="7.5,4.5 11.5,8 10.5,8 10.5,12 4.5,12 4.5,8 3.5,8" fill="#3d5878"/></svg><div style="left:929px;top:1049px;width:6px;height:11px;border:1px solid #f0f0f0;background:#333"></div><span class="t" style="left:1772.5px;top:1056.92px;font-size:12.5px;color:#f0f0f0;">Sun, 25 Mar  22:33</span><div style="left:1884px;top:1053px;width:1px;height:22px;background:rgba(20,25,30,.35)"></div><svg class="ic" style="left:1890px;top:1053px;" width="28" height="23" viewBox="0 0 28 23"><defs><radialGradient id="sdg" cx=".65" cy=".6" r=".6"><stop offset="0" stop-color="#8cc8d8"/><stop offset="1" stop-color="#3d6fa5"/></radialGradient></defs>
<rect x="0.5" y="0.5" width="27" height="22" rx="2.5" fill="url(#sdg)" stroke="#2c557f" stroke-width=".8"/><rect x="0.5" y="0.5" width="27" height="4" rx="2" fill="#f2f2f2"/><rect x="5" y="16" width="18" height="6.5" fill="#2f4458"/></svg>
</body></html>
